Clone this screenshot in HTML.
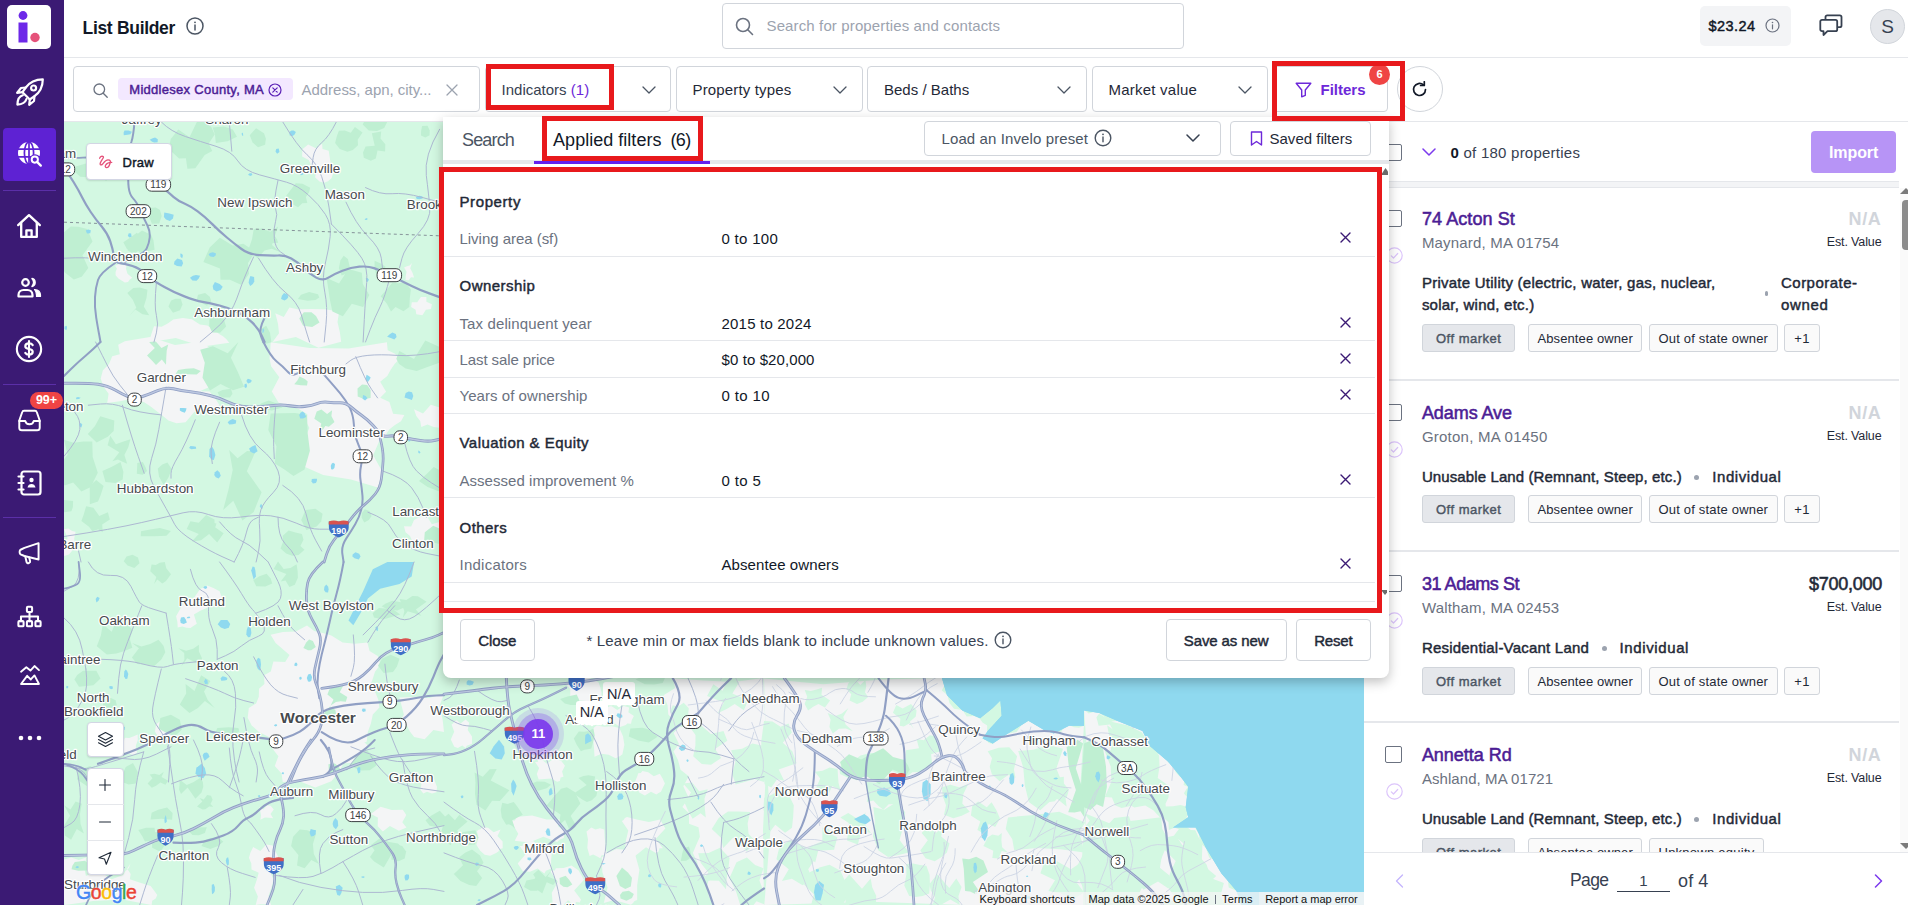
<!DOCTYPE html>
<html lang="en">
<head>
<meta charset="utf-8">
<title>List Builder</title>
<style>
*{box-sizing:border-box;margin:0;padding:0}
html,body{width:1908px;height:905px;overflow:hidden;background:#fff}
body{font-family:"Liberation Sans",sans-serif;color:#111827;position:relative;font-size:14px}
.abs{position:absolute}
.t{position:absolute;white-space:nowrap;line-height:1}
svg{display:block}
/* sidebar */
#sidebar{left:0;top:0;width:64px;height:905px;background:#3b1a74}
#logo{left:7px;top:5px;width:44px;height:44px;background:#fff;border-radius:5px}
.sep{left:3px;width:53px;height:1px;background:#5b2fa8}
#active{left:3px;top:128px;width:53px;height:53px;background:#5e22d3;border-radius:4px}
.ico{position:absolute;left:14px;width:30px;height:30px}
/* header */
#header{left:64px;top:0;width:1844px;height:58px;background:#fff;border-bottom:1px solid #e5e7eb}
#filterbar{left:64px;top:58px;width:1844px;height:64px;background:#fff;border-bottom:1px solid #e5e7eb}
.box{position:absolute;border:1px solid #d1d5db;border-radius:4px;background:#fff}
/* map */
#map{left:64px;top:122px;width:1300px;height:783px;background:#c5f0d8;overflow:hidden}
/* right panel */
#panel{left:1364px;top:122px;width:544px;height:783px;background:#fff;overflow:hidden}
/* modal */
#modal{left:443px;top:117px;width:946px;height:561px;background:#fff;border-radius:0 0 8px 8px;box-shadow:0 4px 12px rgba(0,0,0,.25)}
.mh{font-size:15px;font-weight:400;-webkit-text-stroke:.45px currentColor;color:#1f2937;letter-spacing:-.2px}
.ml{font-size:15px;color:#6b7280}
.mv{font-size:15px;color:#111827}
.mdiv{left:1px;width:931px;height:1px;background:#e5e7eb}
.mx{left:897px;fill:none;stroke:#3b1a74;stroke-width:1.400;stroke-linecap:round}
.cb{width:17px;height:17px;border:1px solid #6b7280;border-radius:2px;background:#fff}
.ct{font-size:18px;font-weight:400;-webkit-text-stroke:.55px currentColor;color:#4c1d95;letter-spacing:-.3px}
.ca{font-size:15px;color:#6b7280}
.cv{font-size:18px;font-weight:400;-webkit-text-stroke:.55px currentColor;color:#1f2937}
.cv.na{color:#d1d5db;font-weight:700;-webkit-text-stroke:0}
.ce{font-size:12.500px;color:#1f2937}
.cd{font-size:15px;font-weight:400;-webkit-text-stroke:.45px currentColor;color:#1f2937}
.dot{width:5px;height:5px;border-radius:50%;background:#9ca3af}
.tag{height:28px;border:1px solid #d1d5db;border-radius:3px;background:#fafafa}
.tag.dk{background:#e5e7eb}
.tt{font-size:13px;color:#1f2937}
.tt.dk{font-weight:400;-webkit-text-stroke:.4px currentColor;color:#4b5563}
.mapbtn{background:#fff;border-radius:4px;border:1px solid #d3d6e4;box-shadow:0 1px 2px rgba(0,0,0,.12)}
.at{font-size:11px;color:#111}
.red{position:absolute;border:4px solid #e8191c}
.sb{font-weight:400!important;-webkit-text-stroke:.45px currentColor}
</style>
</head>
<body>
<!-- MAP -->
<div id="map" class="abs">
<!--MS0--><svg width="1300" height="783" viewBox="64 122 1300 783" style="position:absolute;left:0;top:0">
<rect x="64" y="122" width="1300" height="783" fill="#d3f8e2"/>
<path d="M124.8 341.2 L149.9 337.1 L175 345.1 L200.8 341.6 L211.1 348.8 L210.1 363.5 L219.3 370.9 L214.8 379.4 L209.5 387 L199.7 391.2 L209.5 391.6 L214.9 397.9 L219.7 405.4 L207.2 408.8 L194.5 411.8 L185.6 422.2 L176.4 423.3 L168.4 420.5 L161.4 414.7 L155.8 410.6 L150.3 406.3 L144.2 402.3 L132.1 398.8 L119.9 401.3 L107.2 403 L108.6 393.7 L103.4 386.4 L100.7 378.6 L102.9 370.3 L109 364.1 L112.2 356.3 L119.8 354.3 L118.2 344.8Z" fill="#f4f5f6"/>
<path d="M149.8 342.2 L150.5 336.7 L152.2 331.4 L154 326.3 L161.6 326.8 L167.7 323.4 L173.3 319.6 L182.8 318.1 L191.8 319.2 L199.9 324.4 L207.3 325.6 L213.5 329.6 L219.1 334.1 L223 336.2 L226.2 339.1 L229.3 342.8 L202.6 346.5 L175.8 338.1Z" fill="#f4f5f6"/>
<path d="M272.6 342 L279 333.2 L278 323.7 L275.3 313.3 L283.8 317 L289.4 307.4 L297.4 309.3 L311.2 309 L325.1 309.2 L339.2 311.6 L337.5 321.9 L339.8 331.9 L341.2 341.7 L318.5 347.8 L295.8 337.1Z" fill="#f4f5f6"/>
<path d="M302.4 149.2 L308.1 144.4 L315.9 148.3 L322.1 143.7 L322.5 148.9 L328.7 150.7 L329.5 156 L330.7 163.2 L334.3 170.2 L331.5 178.2 L328 181.2 L324.1 182.8 L319.5 181.5 L315 177.2 L317 169.8 L311.6 166 L308.7 160.1 L302.1 156.4Z" fill="#f4f5f6"/>
<path d="M115.1 265.7 L119 264 L123.5 265.3 L126.8 263.2 L126 268.8 L127.5 273.7 L132.2 277.8 L129.8 279.4 L128 282.1 L124.8 282.4 L121.6 280.5 L118.4 278.4 L115.6 275.3 L115.6 272 L116.9 268.5Z" fill="#f4f5f6"/>
<path d="M404.1 267.4 L406.9 266.3 L409.7 265.4 L412 263 L410.2 268.3 L412.6 272.9 L414.1 277.5 L411 277.3 L408.7 280.3 L405.6 280 L405.7 275.9 L406.6 271.7Z" fill="#f4f5f6"/>
<path d="M411.8 302.3 L417.2 302.2 L420.9 297.1 L426.4 297 L426.4 301.7 L431.9 304.2 L431 309 L425.9 309.8 L422.4 315.3 L416.3 314.2 L415.6 309.7 L411.1 306.9Z" fill="#f4f5f6"/>
<path d="M270.7 342.3 L309.6 348 L348.5 348.4 L386.9 342.3 L387.7 350.3 L395 353.7 L399.5 359 L394.6 364.1 L390.7 369.8 L387.3 376 L380.2 381.8 L386.1 391.8 L380.2 397.7 L389.4 401.9 L393.1 413.8 L404.4 415 L401 421.2 L395 425 L389.5 429.3 L386.9 433.1 L384.7 437.4 L380 439.2 L373.2 455.2 L382.5 471.9 L377.8 487.5 L351 479.4 L323.2 474.9 L297.8 463.7 L302.7 454.5 L301.7 443.4 L306.4 434.4 L309.4 427.9 L306.1 421.4 L307.4 414.2 L298.3 408.7 L288.3 405.3 L278.6 402.7 L271.8 391.4 L279.3 377.2 L271.1 366.3 L269.5 358.2 L270.3 350.1Z" fill="#f4f5f6"/>
<path d="M414 409.3 L423 413.6 L430.8 404.7 L439.7 407.6 L439.8 414.1 L443.2 420.6 L439.6 427.8 L433.6 427 L427.5 424.6 L421.3 427.1 L420.2 420.9 L416.3 415.9Z" fill="#f4f5f6"/>
<path d="M64 529.3 L68.3 528.6 L72.1 531 L75.6 531.7 L74.2 538.5 L74.9 545 L78.5 550.9 L72.8 550 L68.9 554.4 L63.6 556 L64.1 547 L67.6 538.1Z" fill="#f4f5f6"/>
<path d="M404 526.2 L411.2 526.4 L414 520.1 L418.8 517.6 L426.6 515.6 L431.8 524.3 L439.5 521.9 L440.7 526.8 L440.2 531.6 L439.8 537.2 L429.9 535.5 L421.6 543.4 L412.3 541.1 L410 536.1 L405.5 532.3Z" fill="#f4f5f6"/>
<path d="M270.6 634.7 L282.9 632.1 L295.8 631.5 L307 625.5 L314.2 630.9 L322.8 633 L331.3 635.6 L342.6 642.6 L355 643.7 L367.4 642.5 L369.6 650.9 L377.7 655.9 L380.5 664.3 L375 671.7 L372.2 680.4 L368.5 688.1 L375.5 692.7 L378.4 699.9 L379.4 707.5 L372.8 714.4 L370.9 723.6 L367.8 732.1 L366.7 741.7 L354.6 745.8 L356.2 756.9 L344.4 761.9 L338.5 772.5 L331.4 781.2 L315.2 787.6 L299 781.1 L282.7 782.1 L281.6 773.5 L274.8 765.9 L278.4 756.2 L272 748 L269 737.1 L259 732 L251.7 725.5 L247.7 717.7 L248.8 707.9 L256.1 703.4 L258.8 696.7 L259 688.8 L264.4 684.1 L264.1 675.3 L270.8 671.6 L273.4 661.5 L285.2 661.9 L289.5 655 L282.6 648.9 L275.6 643Z" fill="#f4f5f6"/>
<path d="M178.9 611.2 L184.2 602 L194.2 597.4 L200.1 589.1 L207.2 585.4 L213.4 588 L219.6 591.2 L220.9 595.1 L223.2 598.9 L222.1 603.5 L214 603.6 L207.3 607.7 L200.3 610.7 L193.9 614.6 L196.8 623.8 L190.4 627.9 L186.4 627.7 L182.3 626.6 L177.7 627.6 L177.4 622 L176.1 616.3Z" fill="#f4f5f6"/>
<path d="M399.5 697.6 L414.4 696.9 L429.5 697.9 L444.3 693.3 L439.4 706.3 L442.6 719.2 L444 732.1 L433.4 730 L424.7 739.2 L414.1 737.1 L409.9 731.6 L406.6 725.1 L399.3 722.5 L403.9 714.4 L401.7 706.3Z" fill="#f4f5f6"/>
<path d="M156.2 724.2 L160.4 720.9 L165.6 720 L170.6 720.3 L175 723.2 L177 727.4 L178 731.7 L174.2 738.2 L166.7 738.2 L161.8 741.8 L158.2 736.7 L154.9 731.5Z" fill="#f4f5f6"/>
<path d="M124.9 737.8 L129.2 737.9 L133.1 736.6 L137.7 734.6 L137.8 740.3 L135.7 746 L137.1 752.4 L133.4 755.1 L128.9 753.5 L125.3 754.1 L121.6 748.4 L123.4 742.7Z" fill="#f4f5f6"/>
<path d="M64 859.5 L71.2 857.4 L78.8 859.9 L86.1 857.5 L85.5 863.5 L84.6 869.5 L85.9 876 L98.5 869.9 L111.1 879.5 L123.1 875.1 L125.3 871.2 L129 868.1 L130.4 863.5 L127.2 868.8 L130.7 874.1 L129.8 879.3 L140.2 882.7 L150.7 885.9 L157.3 895.1 L155.7 898.6 L152.2 900.8 L151.6 904.9 L122.4 899.5 L93.2 901 L64.9 904.9 L62.6 889.8 L58.6 874.6Z" fill="#f4f5f6"/>
<path d="M253.2 847.1 L260.3 851.1 L266.3 844.4 L272.6 845.6 L278.2 856.8 L268.2 868.1 L273.6 879.5 L271.4 887.8 L268.5 896.1 L271.1 905.7 L265.8 904.3 L260.5 904.3 L255.7 904.9 L257.9 896.6 L254.1 887.7 L256.9 879.5 L258.7 872.8 L251.5 869.4 L251.3 863.5 L248.9 857.8 L250.5 852.6Z" fill="#f4f5f6"/>
<path d="M370.8 814.1 L380.6 806.8 L391.8 809.9 L402.8 809.7 L406.3 815.1 L402.3 822.3 L406.5 827.5 L398.9 830.7 L389.9 826.1 L382.8 831.5 L377.7 826.3 L377.9 817.5Z" fill="#f4f5f6"/>
<path d="M283.1 740.6 L309.6 740.3 L336.2 745.4 L362 740.2 L367.6 745.2 L364.2 752.2 L366.6 757.4 L355.9 762.7 L343.8 763.3 L333 768.1 L321.6 768.6 L313.5 777.3 L303 780.2 L296.8 774.9 L289.6 779.9 L283.3 777.8 L282.7 771.7 L283.9 765.1 L278.8 759.9 L283.7 753.9 L279 746.1Z" fill="#f4f5f6"/>
<path d="M259.1 807.3 L263.6 809.6 L267 805.3 L270.6 805.8 L273.8 809.4 L270.5 814 L273.2 818.2 L269.1 817.8 L264.9 817.4 L260.4 819.8 L261 815.6 L260.3 811.6Z" fill="#f4f5f6"/>
<path d="M418.5 779.7 L424.1 781.6 L429.2 779.3 L433.6 778 L435.3 782.5 L437 787 L436.5 792.2 L432 793.6 L427 791.8 L423.3 793.5 L420.3 789.4 L421.5 784Z" fill="#f4f5f6"/>
<path d="M763.2 678.1 L766.8 753.7 L763 829.4 L764 905.1 L747.2 909 L730.3 910.3 L713.5 905 L709 896.7 L706.8 887.9 L709 877.9 L699.3 872.2 L697.2 862 L692.9 852.9 L696.3 844.8 L699.9 836.7 L698.5 827.3 L689 823.8 L689 813.2 L682.4 807.1 L688.7 797.7 L683.3 786.3 L688.8 776.2 L680.5 769.7 L677.9 759.7 L673.5 751.5 L679 743.9 L673.6 733 L680.9 725.5 L673.8 720.5 L668.3 714.5 L667.6 705.5 L663.6 695.3 L675.2 688 L672.8 678.2 L703.2 680.6 L733.6 682.1Z" fill="#f4f5f6"/>
<path d="M764 678.4 L823.3 684.3 L882.6 679.5 L942.1 678 L945.6 683.2 L941.8 690.6 L947.3 695 L949.5 703 L954 708.7 L962.5 710 L966.7 716.6 L973.9 716.1 L979.7 718.4 L982.5 722.5 L987.2 725.5 L987 730.5 L987.4 734.4 L983 735.2 L982.6 738.6 L986 740.2 L988.9 742.9 L993 744 L995.8 737.2 L1001.8 735.2 L1008.1 733.6 L1016.6 732.1 L1021.6 725 L1028.3 720.9 L1033.5 723.6 L1040 724.2 L1043.5 730 L1047.8 728.7 L1050.7 731.5 L1053.4 732.8 L1060.3 733.7 L1063.6 727.6 L1069 725.1 L1074 727.2 L1079 727.8 L1083.9 725.8 L1080.4 785.6 L1087.5 845.3 L1084 904.9 L977.4 905.4 L870.7 901.8 L764.3 905 L770.5 829.4 L766.3 753.7Z" fill="#f4f5f6"/>
<path d="M1084.1 710.1 L1088.7 713.5 L1094.3 711.8 L1099.4 712.9 L1104.6 717.1 L1109.4 722.1 L1117 720.8 L1127.7 718.8 L1135 725.1 L1142.9 730.7 L1148.1 734.5 L1146.3 741.7 L1150.6 745.5 L1153.7 754 L1164.9 752.9 L1167.7 761.6 L1172.9 765.9 L1175.7 772.2 L1180.1 777.1 L1184.6 779 L1183.6 785 L1187.9 786.8 L1183.9 793.2 L1190.1 800.9 L1186 807.1 L1184.4 811.1 L1188.5 813.7 L1188.2 817.4 L1181.1 817.7 L1177.6 823.5 L1173 827 L1180.6 829.7 L1188.2 822.8 L1195.2 827.8 L1198.9 834.4 L1199.8 842.5 L1205.9 847.9 L1209.2 857.5 L1219.8 862.6 L1221.2 873.3 L1227.6 878.1 L1228.7 887.5 L1237 890.9 L1240.1 895 L1238 901.1 L1241.6 904.9 L1189.1 899.4 L1136.5 905 L1084.8 905 L1084.4 840.2 L1088.6 775.4Z" fill="#f4f5f6"/>
<path d="M512.1 820.5 L514.8 820.5 L516 818.5 L517.7 816.8 L532.2 815.4 L546.5 819.4 L561.2 819.4 L558 826 L564.5 831.3 L563.8 838.1 L561.1 839 L558.7 840.4 L557.2 842 L543.4 836.8 L529.1 842.5 L514.7 840.8 L518.3 833.7 L514.6 827.5Z" fill="#f4f5f6"/>
<path d="M519.8 846 L522.5 846 L523.2 843.5 L525.3 842.7 L533.2 841 L540.3 847.6 L547.6 844.9 L551.9 852.3 L551.1 860.3 L551 868.5 L548.5 869.7 L545.9 870.8 L544.4 873.4 L537.6 868.6 L530 871.8 L522.8 871.2 L517.7 863.5 L525.4 854.4Z" fill="#f4f5f6"/>
<path d="M586.5 831.5 L588.2 830.3 L589.8 828.8 L591.4 827.6 L595.4 829.6 L600 828.2 L604.3 829.5 L604.7 837.4 L605.4 845.2 L606.8 853 L605.1 855.3 L601.6 855.2 L600.3 858.2 L596.7 856.2 L593.1 854.6 L589.6 855.9 L587.3 847.8 L588 839.5Z" fill="#f4f5f6"/>
<path d="M601.7 856.9 L603.9 856.3 L604.8 853.9 L606.6 853.6 L616.3 849 L625.7 849.8 L635.3 854.9 L639.4 869.7 L637.2 884.9 L637.2 900 L634.6 901.1 L632.8 903.2 L630.9 904.8 L622.1 902.3 L613.3 900.2 L603.8 903 L607.6 887.4 L602.4 872.2Z" fill="#f4f5f6"/>
<path d="M621.8 821 L623.7 820 L624.9 818 L627 817.1 L637.9 819.8 L648.9 821.9 L660.1 819.4 L665.4 828.5 L655.6 838.9 L663 848.3 L659.5 848.3 L658.6 851.5 L656.2 853.2 L646 847.3 L634.8 856.3 L624.9 850.9 L625.9 840.8 L628.3 830.6Z" fill="#f4f5f6"/>
<path d="M591.7 730.1 L593.1 728.4 L594.7 726.9 L596.5 725.6 L604.1 726.8 L611.9 726.3 L619.4 727.9 L623 736.2 L624.4 744.8 L622.4 754.3 L620.2 756 L617.7 757.2 L615.6 758.3 L608.7 754.7 L601.5 753.8 L594.5 756.8 L594 747.7 L593.1 738.6Z" fill="#f4f5f6"/>
<path d="M535.1 762.1 L537.7 762 L538.4 759.5 L540.6 758.7 L547 763.7 L554.4 758.1 L561.3 760.9 L565 765.7 L562.1 771.5 L563.5 776.7 L560.6 777.4 L559.9 781 L557.1 781.8 L551.1 778.4 L544.6 778.9 L538.7 779.6 L536.8 774.1 L539.1 768Z" fill="#f4f5f6"/>
<path d="M451.6 724.6 L453.3 723.3 L454.4 721.3 L456.8 720.3 L460.6 723.6 L465.6 719.5 L469.2 722.8 L467.7 730.1 L472 736.6 L472 743.7 L469.4 744.7 L466.7 745.7 L465.7 748.1 L462.2 745.6 L457.9 748 L454.3 746.7 L450.8 739.6 L454.2 731.7Z" fill="#f4f5f6"/>
<path d="M565.9 683.8 L568.1 683.2 L569.1 680.9 L571.2 679.3 L580.8 676 L590 678.5 L598.5 682.2 L600.3 687.3 L601.5 692.5 L601.3 697.4 L598.9 698.9 L596.8 700.5 L595.3 702.5 L586.5 700.9 L577.6 700.3 L568.9 700.9 L570.3 694.9 L570.2 689.1Z" fill="#f4f5f6"/>
<path d="M606.9 709.6 L607.9 707.3 L609.7 706.3 L611.7 706.3 L617.3 709.9 L623.7 706 L629.2 707.6 L628.4 712.3 L633.9 715.9 L631.7 720.3 L631 723.7 L627.3 723.5 L625.9 725 L620 727 L614.9 723.5 L609.6 723.7 L608.7 718.9 L606.4 714.3Z" fill="#f4f5f6"/>
<path d="M637.5 775.8 L638.2 773.3 L640.8 773.1 L642.4 770.9 L648.2 772.2 L653.8 776.2 L659.8 773.7 L662.6 778.6 L664.9 783.6 L662.2 788.9 L661 791.7 L658.6 793.1 L656.3 794.4 L651 791.8 L644.9 795.6 L639.2 792.5 L636.7 787.1 L635.1 781.5Z" fill="#f4f5f6"/>
<path d="M550.4 871.6 L552.1 870.3 L554.9 870.5 L555.8 868.2 L563.6 867.9 L571.5 865.5 L578.4 870.3 L584 879.8 L574.2 890.6 L581 899.6 L579.8 902.4 L576 902.1 L574.8 905.7 L568.1 900.3 L560.1 908.4 L552.6 903.1 L551.8 892.7 L557.8 881.8Z" fill="#f4f5f6"/>
<path d="M476.9 831.2 L478.6 829.8 L480.7 829.2 L482.2 826.9 L488.1 827.7 L493.6 832.3 L500.6 829.5 L497.5 836.1 L502.6 841.6 L502.7 848.2 L499.8 848.9 L498.4 851.5 L496.1 853.1 L490.2 855.7 L484.7 854.8 L480.2 850.8 L476.3 844.7 L478.6 837.8Z" fill="#f4f5f6"/>
<path d="M840.4 761.9 L851.4 762.7 L860.4 755.4 L870.9 753 L883 753.2 L893.3 765.8 L905.5 758.5 L906 750.3 L919 748.3 L916.5 738.8 L923.6 740.3 L929.9 735.3 L935.7 736.2 L939.2 740.8 L939.4 746 L939.7 751.4 L931.1 754.3 L932.1 764 L926.8 769.3 L920 771.9 L912.4 772.3 L906.3 777 L892.8 771.2 L879.2 770.4 L865.7 776.8 L857 777.9 L848.4 778.1 L840 774.1 L839.6 769.9 L841 765.7Z" fill="#d3f8e2"/>
<path d="M865.7 781.8 L877.5 782.7 L889.4 776.1 L900.9 781.8 L897.6 790.2 L901.3 798.7 L901.4 808 L894.8 804.3 L888.7 804.2 L883.4 809.8 L878.2 805.7 L873.4 800.4 L866.8 802.1 L867.9 795.3 L866.5 788.5Z" fill="#d3f8e2"/>
<path d="M764 720.9 L772.5 721.5 L780.5 726.7 L788.5 723.4 L791.9 732.5 L782.8 742.7 L792.3 751.3 L796.6 763.2 L778.7 769.6 L784.2 780.8 L777.1 779.3 L771.3 787.5 L764.6 784.3 L762.1 763.1 L761.2 741.9Z" fill="#d3f8e2"/>
<path d="M804.7 690.1 L810.8 690.9 L816.7 689.6 L822 687.8 L821.5 694.7 L830.1 700.5 L824.9 707.4 L818.4 704.1 L812.8 707.1 L808.1 710.5 L804.6 704 L807.2 696.8Z" fill="#d3f8e2"/>
<path d="M764.1 798.1 L772.3 794.6 L780.3 789.3 L788.6 794.5 L793.8 805.2 L793.2 816.3 L792 827.8 L785.1 832.7 L775.3 824.8 L769.4 832.5 L766.4 820.9 L763.4 809.2Z" fill="#d3f8e2"/>
<path d="M779.3 847.6 L790.1 840 L800 845 L810.4 850.3 L815 859.3 L808.2 869.3 L812.3 878.8 L802.6 885.2 L791.9 878.8 L781.9 880.9 L788.8 869.3 L776.4 859.2Z" fill="#d3f8e2"/>
<path d="M809.7 872.3 L819.5 867.6 L829.5 864.8 L840.4 870.7 L845.4 881.9 L850 893 L842.8 904.2 L832.6 907.2 L822.5 910.6 L811.1 905.1 L813.9 894.3 L804 884.4Z" fill="#d3f8e2"/>
<path d="M873.3 807 L884.2 809.8 L896.7 801.9 L905.2 812.3 L903.5 826 L899.5 839.9 L908.9 852.4 L898.5 855 L888.1 856.9 L878.5 850.4 L872.9 836.4 L874.9 821.6Z" fill="#d3f8e2"/>
<path d="M906.2 864.1 L913.2 863.5 L919.9 865.1 L926.4 865.7 L929.6 874.8 L929.9 884.1 L929.2 893.6 L922.6 896.1 L915.9 897 L909.2 896.1 L904.3 885.4 L906.4 874.2Z" fill="#d3f8e2"/>
<path d="M942 787.2 L950.3 784.7 L959.1 787.3 L968.1 784.2 L963.4 794.1 L962.3 803.6 L969.8 811.7 L961.7 815.7 L953.4 818.2 L944 814.8 L946 805.3 L942.7 796.2Z" fill="#d3f8e2"/>
<path d="M840.3 817.4 L848.2 813.1 L858.3 819.5 L866.1 812.2 L861.8 820.4 L866.6 826.4 L870.9 832.9 L861.7 830.7 L857.8 844.5 L847 840.5 L848.2 831.7 L848.8 823Z" fill="#d3f8e2"/>
<path d="M921.7 833.1 L927.1 825.8 L936 832.8 L943 827.3 L941.2 836.5 L949.5 843.6 L946.9 852.5 L940.9 857.4 L934.7 861.3 L925.6 858.2 L920.3 850.5 L927.8 840.2Z" fill="#d3f8e2"/>
<path d="M972.2 806.1 L978.2 801.5 L986.8 807.2 L991.6 802.2 L996.4 810.3 L1000 818.5 L995.2 826.9 L988.7 823.9 L984.1 833.7 L977.4 830.1 L980.2 821.5 L970.9 815.5Z" fill="#d3f8e2"/>
<path d="M987.7 751.2 L998.7 747.7 L1009.3 747.2 L1017.1 756.2 L1015.4 762.9 L1013.9 769.6 L1015.5 777.7 L1008.1 774.9 L999.7 781.3 L991.9 774.3 L989.7 766.8 L992 758.3Z" fill="#d3f8e2"/>
<path d="M814.9 771.8 L822.5 770.8 L829.8 767.5 L837.6 769.1 L838 775.9 L838.5 782.7 L840.5 790.2 L832.2 785.9 L827.6 796.2 L820 794.4 L816.4 787.3 L820.2 778.4Z" fill="#d3f8e2"/>
<path d="M822.5 827.5 L828.7 829.1 L832.2 835 L837.3 837.3 L834.1 849.7 L818.2 850.8 L815.2 862.6 L811.5 858.6 L804.4 858.8 L803 853.6 L810.8 845.9 L822.3 841.3Z" fill="#d3f8e2"/>
<path d="M840.4 884.5 L849.2 874.6 L862 888.7 L870.7 878.4 L872.2 887.3 L876.2 895.8 L875.8 905.8 L865.7 909.2 L855.5 903.7 L845.5 905 L845.5 897.4 L843.9 890.2Z" fill="#d3f8e2"/>
<path d="M929.4 884.2 L937.2 874.2 L949.3 887.9 L956.3 878.4 L961.6 886.9 L958.4 896.2 L959.7 905 L950.4 899.4 L941.1 904.8 L932.6 904.9 L934.9 897.4 L930.8 890.6Z" fill="#d3f8e2"/>
<path d="M987.7 837.6 L992.3 834.5 L998.3 835.7 L1001.8 832.9 L1001.4 840.2 L1002.1 847.2 L1007.9 852.5 L1001.7 851 L998.6 858.5 L992.3 858.1 L993.3 850.7 L983.4 846Z" fill="#d3f8e2"/>
<path d="M1043.4 780.8 L1049.6 776.8 L1057 777.7 L1063.8 776.7 L1063.9 783.6 L1068.9 789.8 L1066.7 797.6 L1059.7 795.8 L1054.8 801.2 L1048.4 802.2 L1044.5 795.9 L1043 789.1Z" fill="#d3f8e2"/>
<path d="M827.6 713.1 L835.4 715.9 L842 713.4 L848.4 707.9 L843.3 717.1 L845.6 724.6 L853 731.3 L845.8 728.4 L838.9 728.7 L832.8 733.4 L829.4 727.1 L830.6 719.6Z" fill="#d3f8e2"/>
<path d="M896.3 705.1 L902.6 708.5 L911 703.9 L916.6 710.6 L915.8 716.5 L909.8 721.7 L913.8 729.1 L909.6 723.2 L903.8 726.6 L899.7 725.7 L900.4 718.7 L892.9 712.8Z" fill="#d3f8e2"/>
<path d="M848.1 683.8 L853.1 677 L860.3 685.1 L865.4 680.1 L866.3 686 L865 692.3 L868.1 697.1 L862.7 701.8 L857 704 L849.5 700.6 L851.2 694.3 L846.5 688.9Z" fill="#d3f8e2"/>
<path d="M962.2 858.5 L969 859.3 L976.2 856.8 L983.4 860.6 L988 872.1 L972.9 882 L980.2 892.7 L974.8 893.8 L970 891.4 L965.1 891 L964.4 880 L963.8 869Z" fill="#bfefd2"/>
<path d="M1066.6 747.1 L1072.2 744.5 L1077.5 739.8 L1083.1 743.6 L1075.8 768.2 L1083.8 792.8 L1084.2 817 L1080.5 811.3 L1074.6 812.4 L1068.2 812.3 L1075.9 789.9 L1069 768.1Z" fill="#bfefd2"/>
<path d="M840.1 762.1 L849 754.3 L861.1 759.5 L870.8 754.6 L883.1 748.2 L893 756.9 L904.2 760.1 L907.6 764.7 L909.7 769.6 L906.3 775.4 L892.7 769.5 L879.4 784.3 L865.7 775.7 L856.9 780.2 L849.1 777.4 L842.1 772.8 L841.7 769.4 L841.6 766Z" fill="#bfefd2"/>
<path d="M1018.2 751 L1033.4 749.7 L1048.4 744.9 L1063 748.8 L1056.3 768.6 L1064.3 787.8 L1066.6 806.6 L1054.9 796.9 L1040.2 810.3 L1028.8 802 L1024.8 785.2 L1023.3 767.9Z" fill="#d3f8e2"/>
<path d="M1008 817.4 L1033.6 814.9 L1059.3 811.8 L1085.1 822.4 L1079 832.6 L1082.3 842.8 L1084 852.4 L1060.5 849.3 L1036.9 847.9 L1014.2 850.2 L1012.3 839.2 L1005.7 829Z" fill="#d3f8e2"/>
<path d="M1043.7 863.8 L1057 861.2 L1071 869.2 L1083.8 860.6 L1086 871.6 L1076.6 882.6 L1084.1 892.4 L1071.7 900.3 L1060.4 893.3 L1048.4 891.1 L1055 880.3 L1040.4 873.3Z" fill="#d3f8e2"/>
<path d="M1084 743.4 L1090.5 740.4 L1096.2 743 L1102.7 746.2 L1106 766.4 L1106.9 786.8 L1103.1 807 L1096.7 804.2 L1090.4 810.1 L1083.9 807.2 L1081 786 L1082.6 764.8Z" fill="#bfefd2"/>
<path d="M1107.1 725.2 L1118.5 733.6 L1130.7 739.9 L1145.3 740.9 L1153.9 747.3 L1159.1 755.7 L1159.5 766.7 L1157.7 777.9 L1169.1 785.9 L1168.5 797.3 L1165.5 803.8 L1166.5 812 L1160.2 817.5 L1153.3 810.3 L1145.3 805.5 L1134.3 807.5 L1120.4 799.7 L1114 787.6 L1114.1 771.7 L1111.7 756.4 L1110.2 741Z" fill="#d3f8e2"/>
<path d="M1084.2 828.1 L1092 817.7 L1106.3 826.7 L1114.2 818.1 L1129 816.3 L1135 834.9 L1150.4 832.5 L1152.1 844.9 L1161.9 854.9 L1159.9 867.9 L1147.2 877.3 L1140.4 890.8 L1134.8 906 L1117.9 905.9 L1100.9 914 L1084.6 905 L1081.6 879.2 L1082.3 853.4Z" fill="#d3f8e2"/>
<path d="M1168 836.9 L1175.9 835.3 L1182.4 845.6 L1190.9 840.1 L1196.7 853.4 L1206.5 864.5 L1211.2 878.3 L1223.9 882.9 L1220.2 896.7 L1226.3 904.4 L1211.1 904.8 L1195.8 907.7 L1179.8 905.3 L1173.6 895.6 L1167 886 L1170 873.3 L1175.7 861 L1164.5 849.8Z" fill="#d3f8e2"/>
<path d="M1104.5 750.5 L1115.4 750.3 L1124.1 758.4 L1135.3 758.8 L1129.2 770.4 L1141.7 777 L1142.6 787 L1133.7 791.7 L1133.7 805.2 L1121.7 807.9 L1115.3 805.4 L1111.9 797.5 L1104.8 797 L1111.4 781.8 L1110.7 766.5Z" fill="#d3f8e2"/>
<path d="M1084 813 L1108.8 822.9 L1134.5 820.6 L1161.2 817.3 L1162.3 829.1 L1168.9 840.6 L1163.4 853.4 L1160.2 861.6 L1152.8 866.6 L1147.8 872.8 L1124.8 864.1 L1106.4 847.3 L1083 837.7 L1088.7 829.2 L1089.9 820.7Z" fill="#d3f8e2"/>
<path d="M1165.3 806.4 L1173 806.2 L1180.6 805 L1187.8 807.1 L1188.3 814.1 L1184.7 820.5 L1185.7 827.6 L1179.5 826.6 L1173.7 828.1 L1168.8 830 L1168.5 822.3 L1161.1 815.4Z" fill="#d3f8e2"/>
<path d="M1129.9 847.2 L1139.5 852.3 L1150.9 846.6 L1161.1 852.8 L1157.7 865.9 L1169.7 875.7 L1168 888.2 L1158 881.6 L1143.4 889.7 L1135.5 878.2 L1136.4 867.7 L1131.5 858Z" fill="#d3f8e2"/>
<path d="M1180.7 826.7 L1186 826.2 L1190.7 829.9 L1195.3 830.3 L1202.4 845.4 L1201.7 864 L1216.2 875.9 L1209.8 882 L1200.8 880.6 L1192.8 883.7 L1191.4 871.7 L1191 859.2 L1176.9 852.8 L1185.5 845.1 L1174 835.4Z" fill="#d3f8e2"/>
<path d="M1083.6 853.4 L1094.2 853.4 L1094.3 867.4 L1103.8 868.8 L1118.7 871.6 L1119.5 891.3 L1135.1 893.7 L1132.6 897.2 L1133.4 902.1 L1129.8 904.6 L1114.5 899.4 L1099.3 901.6 L1083.1 905 L1083.1 887.7 L1075 870.3Z" fill="#d3f8e2"/>
<path d="M1099 713.7 L1112.5 722.1 L1128.3 725.4 L1142 732.4 L1144.6 736.7 L1148.5 740.6 L1147.5 746.3 L1139.7 741.7 L1131.4 738.4 L1122 738.8 L1115 733.4 L1109.9 724.6 L1098.6 725.8 L1097.6 721.6 L1096.4 717.4Z" fill="#d3f8e2"/>
<path d="M713.4 684.3 L722.6 690.8 L729.7 676.1 L739 682.6 L732.4 693.4 L748 700.2 L743.9 710.2 L734.7 704.1 L726.7 709 L717.6 713.3 L723.9 702.5 L707.1 695.9Z" fill="#d3f8e2"/>
<path d="M688.2 724.7 L700.3 724.8 L711 734.1 L723.5 730.9 L727.3 740.7 L714.9 748.9 L721.2 757.9 L711.1 764.7 L701.8 763.9 L693.2 756.3 L695.4 745.5 L695.5 735Z" fill="#d3f8e2"/>
<path d="M731.1 750.2 L742.1 748.8 L752.4 743.5 L765.1 746.2 L772.7 758 L766.3 769.9 L764 781.9 L754.5 779.1 L745.4 781.7 L735.6 784.4 L732.2 773.7 L735.4 761.9Z" fill="#d3f8e2"/>
<path d="M683.1 783.5 L692.1 782.6 L699.2 791.3 L707.7 789.3 L704.5 798.4 L704.8 807.9 L705.8 817.4 L700.6 813.2 L692.6 818.7 L688.7 812.1 L684.8 803.2 L691 792.5Z" fill="#d3f8e2"/>
<path d="M718.7 818.1 L728 811.5 L738.4 811.4 L750.1 812 L747.6 823.4 L748.6 834 L756.6 842.3 L746.7 851.2 L733.3 837.4 L723.2 847.9 L721 837.8 L711.8 828.9Z" fill="#d3f8e2"/>
<path d="M698.2 853.2 L708.6 853 L720 847.7 L729.6 858.1 L728.4 868.2 L726.8 878.3 L726 889.3 L718.9 880.8 L710.1 880.6 L700.3 883.5 L708.4 872.6 L700.8 863Z" fill="#d3f8e2"/>
<path d="M736.5 862.3 L746.9 857.5 L755.1 864.9 L763.5 868.2 L759.4 880.5 L764.1 892.8 L764 904.2 L756.5 901.3 L748.9 910.8 L740.3 905.2 L736 891.5 L729.5 878.1Z" fill="#d3f8e2"/>
<path d="M672.8 705.3 L677.8 706.8 L683.7 702.8 L688.8 708.2 L688.2 714.1 L689.7 720.4 L685.7 724.9 L681.1 727.3 L677.7 724.8 L674.1 723.3 L673.4 717.4 L669.9 711.7Z" fill="#d3f8e2"/>
<path d="M178.3 129.6 L189.5 137.3 L198.6 118.4 L211.1 126.7 L214.7 134.6 L208.7 143.4 L212.2 151 L204.7 154.9 L200.1 161.6 L195.3 168.2 L187.4 168.8 L185.9 158.3 L179.1 158.5 L168.5 148.7 L170.8 139Z" fill="#bfefd2"/>
<path d="M209.7 247.5 L219.9 237.7 L232.6 245.6 L243.4 243.7 L255.3 251.7 L248 262.9 L249 273.7 L241.5 285.1 L229.9 279.8 L220.5 279.8 L220 268.4 L203.4 261.9Z" fill="#bfefd2"/>
<path d="M64.1 232.2 L70.8 226.5 L78.3 226.8 L87.2 228.9 L92.5 241.6 L82.5 255.2 L88.3 268 L81.7 276.7 L73.8 279.4 L65.2 272.7 L55 259 L63.8 245.2Z" fill="#bfefd2"/>
<path d="M326.6 278.1 L339 283.4 L348.5 269.1 L361.8 272.7 L362.8 284 L369.3 294.9 L363.1 307 L351.8 303.7 L342.9 316.2 L332.4 311.5 L330 300.3 L328.3 288.9Z" fill="#bfefd2"/>
<path d="M253.7 229.2 L261.8 228.5 L270.3 231.7 L278.2 226.5 L274.9 235.8 L272 245.1 L280.1 252.1 L271.7 248.8 L264.5 250.6 L257.5 258.3 L248.3 249.9 L252 239.2Z" fill="#bfefd2"/>
<path d="M338.9 130.7 L344.7 130.5 L350.8 132.7 L354.9 127 L362.5 132.6 L357.7 139.8 L358 145.2 L352.9 150 L347.4 151.8 L339.8 148.9 L335.1 142.9 L336.9 136.1Z" fill="#bfefd2"/>
<path d="M127.3 293 L133.3 287.9 L139.8 287.5 L147.5 289.7 L146.5 298 L143.8 306.4 L149.2 315.3 L142.5 314.2 L135.3 309.4 L128.8 316.6 L136.3 307.7 L132.8 299.8Z" fill="#bfefd2"/>
<path d="M387.7 288.5 L392.2 282.7 L398.5 283.3 L405.2 282.3 L410.9 289.6 L409.8 298.2 L409.3 307.1 L403.5 311.2 L395.5 307 L391 311.5 L386.9 303.7 L380.7 296.2Z" fill="#bfefd2"/>
<path d="M365.6 146.4 L374.7 145.8 L371.9 133.3 L381.2 131.5 L380.5 138.5 L385.3 144.2 L385.1 151.4 L377.5 150.6 L375.8 158.5 L370.8 160.8 L363.8 157.7 L363 152.5Z" fill="#bfefd2"/>
<path d="M290.2 190.6 L295.8 183.2 L302.5 183.7 L310.2 187.7 L309 192.6 L305.9 197 L307.3 203.1 L302.3 203.3 L298 207.3 L293.1 204.6 L288.9 200.3 L286.2 195.7Z" fill="#bfefd2"/>
<path d="M200.2 349.7 L213 346.3 L227.7 353.3 L238.4 342.1 L230.9 357.7 L237.7 371.7 L244.1 386.8 L233 390.2 L220.5 384.1 L210 390.6 L202.5 377.8 L204.8 362.8Z" fill="#bfefd2"/>
<path d="M270.6 413.4 L282.8 413.2 L295 413.1 L307.1 414.9 L307.6 432.8 L309.9 450.8 L304.5 469.6 L293.5 475.9 L284.5 469.5 L274.8 463.6 L276.5 446.3 L268.3 429.9Z" fill="#bfefd2"/>
<path d="M229.2 450 L237.5 458.2 L247.1 451 L255.5 451.4 L246.8 471.3 L261.6 492.2 L253.7 511.9 L242.4 520.5 L233.3 500.7 L223.1 509.9 L228.4 490 L232.7 469.9Z" fill="#bfefd2"/>
<path d="M64 439.8 L73.5 442.7 L83.4 441.4 L92.3 441.6 L92.7 457.1 L97.8 472.8 L90.8 487 L81.4 491.4 L73.2 482.6 L64.6 485.4 L55.1 470 L67.7 454.7Z" fill="#bfefd2"/>
<path d="M110.3 435.8 L115.9 444.2 L122.7 441.8 L130.4 439.3 L128.3 447.3 L124.4 455.1 L127.2 463.7 L122.5 461.8 L117.9 459.4 L112.4 461.2 L119.3 452.3 L107.6 445.3Z" fill="#bfefd2"/>
<path d="M190.4 521.2 L198.7 522.8 L206.1 515.1 L214.5 519.5 L214.6 526.9 L223.6 533.3 L217.2 542.4 L209.1 533.9 L201 540.2 L191.8 541.5 L198.8 534 L186.7 529Z" fill="#bfefd2"/>
<path d="M149.1 342 L155.8 341.4 L161.5 348.1 L168.2 344.4 L166.7 350.8 L166.3 357.3 L166 364.8 L161.8 359.6 L156 364.9 L152.6 361.3 L147 355.4 L154.8 347.9Z" fill="#bfefd2"/>
<path d="M316.7 411.6 L321.4 409.5 L327.1 414.1 L332.1 410.2 L331.4 415.9 L334.5 422.1 L328.9 426.7 L325.3 426 L322.8 429.7 L319.8 429.5 L321.3 423.4 L314.3 418.7Z" fill="#bfefd2"/>
<path d="M399.4 351.1 L414 359.1 L425.3 340.6 L439.7 346.9 L440.9 352.5 L439.4 358.2 L439.5 362.8 L428.1 366.7 L416.7 371.1 L405.7 368.4 L399.1 364.1 L396.3 358.8Z" fill="#bfefd2"/>
<path d="M86.1 506.3 L93.4 507.8 L99.3 516 L107.9 512.2 L109.8 519.6 L102.2 524.6 L102.7 532.2 L98.3 529.2 L92.3 531.2 L89 526.7 L81.4 521.1 L83.8 514.2Z" fill="#bfefd2"/>
<path d="M282.7 535.7 L288.6 530.5 L295.5 532.5 L301.9 534.1 L303.5 539.7 L300.4 545.9 L304.5 549.8 L298.6 554.9 L292.1 555.7 L286.1 553.4 L280.5 548.4 L282.9 542.3Z" fill="#bfefd2"/>
<path d="M102.8 624.3 L111.7 631.8 L118.4 616.1 L126.1 623 L132.7 630.1 L129.8 639.1 L132.3 647.8 L124.5 651.1 L116.3 653.4 L106.8 654.5 L96.8 646.2 L100.9 635.5Z" fill="#bfefd2"/>
<path d="M132.1 643 L141.4 646.4 L150.2 644 L158.5 639.8 L163.5 645.8 L165.3 652.2 L161.3 659.4 L154.2 666 L145.4 664.5 L137.2 664.1 L131.9 657.6 L139 648.3Z" fill="#bfefd2"/>
<path d="M185.6 684.1 L194.5 690.9 L201.1 675.3 L210.4 681 L204 691.4 L207.7 700 L214.7 707.9 L204.9 701.1 L197.9 708 L189.4 712.9 L179.8 704.5 L186.2 693.5Z" fill="#bfefd2"/>
<path d="M278 561.6 L283.7 568.9 L290.4 567.9 L296.6 564.3 L297.6 571 L297.9 577.7 L294.8 584.8 L289.4 587.1 L285.5 580.5 L280.7 581.4 L286.4 574.1 L273.6 569.1Z" fill="#bfefd2"/>
<path d="M178.4 648.2 L186.1 650.7 L193.2 648.8 L198.9 644.8 L198.9 651.4 L201.7 657.6 L202.6 664.3 L195 662.3 L187.2 658.2 L181.3 666.5 L184.4 659.5 L184.2 652.9Z" fill="#bfefd2"/>
<path d="M151.6 564.5 L155.9 565 L159.6 562.8 L164.8 561.9 L166.3 568.3 L171 574.3 L166 581.1 L162.3 583.4 L157.3 579.5 L154.1 583.9 L156.3 577 L150.3 571.2Z" fill="#bfefd2"/>
<path d="M399.6 599.1 L406.3 600 L412.4 595.9 L417.9 596.2 L426.6 601.7 L415.8 609.6 L421.5 615.9 L414.5 613.2 L407.7 611.3 L402.8 617.8 L404.4 611 L401.8 604.8Z" fill="#bfefd2"/>
<path d="M329.2 689.7 L333.6 686.2 L338.7 686.5 L343.1 686.1 L339.7 692.3 L347.3 697 L345.8 701.8 L340.7 701.3 L335.9 702 L330.7 705.6 L333.5 699.4 L327.4 694.5Z" fill="#bfefd2"/>
<path d="M63.9 805.1 L70.5 809.5 L75.6 801.6 L81.7 803.8 L80 813.9 L80.5 823.8 L83.9 833.6 L76.8 829.1 L71.1 839.7 L64.8 835.6 L64.1 825.6 L70.1 815.7Z" fill="#bfefd2"/>
<path d="M179.5 779.6 L186.7 785.1 L193.2 782.3 L200.3 777.7 L202.9 782.1 L203.3 786.8 L201.5 792.5 L195.4 798.8 L187.6 787.4 L181 793.9 L179.1 789.4 L179.6 784.6Z" fill="#bfefd2"/>
<path d="M199.5 798 L203.8 799.5 L207.1 794.9 L211 795.8 L212.6 799.7 L210.5 804.1 L213.2 806.7 L209.1 806.5 L205.4 809.2 L202.5 809.5 L197 806.4 L202.3 801.4Z" fill="#bfefd2"/>
<path d="M293.1 836.8 L299.8 829.4 L307.3 830.2 L316.1 833.5 L312.9 844 L313.8 854 L319 863.9 L311.3 860.1 L304.6 868.2 L297 865.5 L298.4 855.1 L291.1 846Z" fill="#bfefd2"/>
<path d="M370.7 845.3 L379.6 838.6 L389.1 841.9 L398 843.6 L402.6 848.5 L399.6 854.2 L400.6 859.1 L391.5 854.3 L383.8 867.4 L374.2 861.6 L370 857 L374.6 850.2Z" fill="#bfefd2"/>
<path d="M149.7 774.4 L154.4 773.7 L159.3 775.1 L163.8 771.8 L161.5 776.9 L168.3 780.7 L165.4 784.8 L160.4 782.6 L156.1 785.8 L151.8 787.8 L147.6 783.6 L152.5 778.2Z" fill="#bfefd2"/>
<path d="M474.6 772.5 L482.8 776.8 L489.7 769.3 L496.7 769.1 L490.7 780.6 L509.4 790.3 L499.8 800.9 L492.1 800.8 L485.4 810.5 L476.5 804.7 L475 793.7 L475.5 782.6Z" fill="#bfefd2"/>
<path d="M555.8 794.4 L561.1 788.8 L566.9 787.3 L574.7 791.9 L580.4 803.4 L570.6 816 L576.4 826.1 L569.7 830.5 L565.1 820 L559 824.9 L560.5 814.6 L546.6 805.5Z" fill="#bfefd2"/>
<path d="M578.5 778.1 L583.4 776 L588.5 775.3 L595.1 776.5 L594.1 783.6 L597.7 790 L596.3 796 L591.8 800.2 L586.9 802.1 L582.2 799.4 L573.7 793.6 L586.7 785.1Z" fill="#bfefd2"/>
<path d="M578.8 731.4 L584.1 731.7 L589.2 731.1 L593.4 728.3 L594.7 735.4 L593.1 742 L591.3 748.4 L588 749.3 L584.5 749.8 L580.9 751.3 L576.8 744.9 L573.8 738.4Z" fill="#bfefd2"/>
<path d="M444 817.4 L448.6 813.8 L454.9 820.2 L459.3 814.8 L467.6 821.6 L457.1 830.5 L461.7 836.9 L455 832.6 L450.8 845.3 L443.2 840.2 L441 832.6 L443.3 825Z" fill="#bfefd2"/>
<path d="M459.2 857.3 L465.5 852.6 L472 849.5 L480 855.4 L483.5 862.8 L477 871.2 L482.1 878.1 L476.2 885.9 L469.2 885 L460.5 881 L453.9 874.1 L463 865.3Z" fill="#bfefd2"/>
<path d="M533.1 874.2 L538.5 869.7 L545.6 876.9 L551.4 870.6 L547.5 876.5 L556.9 880.2 L553.2 884.9 L546.7 882.3 L542.3 893.4 L535.5 888.5 L529.6 884.3 L535.4 878.1Z" fill="#bfefd2"/>
<path d="M502.2 802.8 L507.5 804 L513.8 802 L517.8 807.2 L522.8 814.7 L512.2 820.3 L514.9 828.7 L512 825.7 L508.8 824.2 L506.2 824.8 L501.8 817.6 L500.7 810Z" fill="#bfefd2"/>
<path d="M260.4 239.2 L266.7 237.3 L274.7 236 L277.1 239.4 L278.1 242.8 L270 243.3 L263.9 242.1Z" fill="#bfefd2"/>
<path d="M328.4 764.2 L334.8 763.6 L338.8 766.7 L341.7 772 L335.3 773 L329.8 775.3 L328.8 769.9Z" fill="#bfefd2"/>
<path d="M159.2 223.5 L151.9 223.8 L148.8 216.1 L149.5 207.9 L155.8 207.5 L160 210.1 L161.7 216Z" fill="#bfefd2"/>
<path d="M266.6 573.8 L270.7 578.6 L272.2 583.6 L265.4 586.6 L256.2 586.3 L253.3 580.1 L259.3 576.3Z" fill="#bfefd2"/>
<path d="M336.8 716.9 L333.1 722.8 L326.9 721.8 L322 716.7 L325.7 710.7 L330.1 706.4 L335.3 710Z" fill="#bfefd2"/>
<path d="M419 481.1 L426.4 474.3 L433.7 467.1 L444.1 472.5 L449 483.2 L438.6 491.2 L427.6 487.1Z" fill="#bfefd2"/>
<path d="M311.2 650.2 L308 650.2 L303.4 648 L306.2 642.5 L309.1 639.6 L312.9 641.1 L315.8 647Z" fill="#bfefd2"/>
<path d="M120.5 462.1 L123.4 471.7 L122.7 479.6 L115.4 482.9 L105.5 481.9 L102.4 470.9 L111.9 466.8Z" fill="#bfefd2"/>
<path d="M171.1 300.4 L175.5 298.8 L180.8 298.7 L182.5 304.4 L180 310.2 L173 312.8 L168.5 306.4Z" fill="#bfefd2"/>
<path d="M402.5 602.5 L405.4 607 L397.2 610.4 L387 609.2 L381.7 606.3 L385.8 603.5 L392.3 600.8Z" fill="#bfefd2"/>
<path d="M101.1 177.7 L99.1 175.1 L99.9 172 L104.2 171.1 L108.9 172.3 L107.9 175.9 L106.4 180.9Z" fill="#bfefd2"/>
<path d="M230.9 388.7 L232.5 393.7 L229.9 397.6 L223.4 397.4 L219.2 395.7 L217.6 392.3 L222.5 390.1Z" fill="#bfefd2"/>
<path d="M72.4 865.7 L74.8 861.9 L84.9 860.7 L90.7 865.5 L87 870.4 L78.3 870.8 L71.5 869.3Z" fill="#bfefd2"/>
<path d="M166.5 733.1 L158.5 728.4 L160.4 718 L170.9 714.7 L179.9 719.7 L181.8 729.6 L174.7 736.6Z" fill="#bfefd2"/>
<path d="M215 527.9 L211.5 530.4 L204.6 531.7 L197.8 528.8 L201.8 524.9 L207.7 521.8 L216.5 523.6Z" fill="#bfefd2"/>
<path d="M198 294.7 L205.1 292.9 L209.8 296.7 L211.3 301.6 L207 305.8 L201.7 302.9 L196.7 300.3Z" fill="#bfefd2"/>
<path d="M648.8 742.5 L638.1 740.4 L628.8 736.5 L630.4 728.5 L642.6 727.7 L651.2 730.3 L657.7 736.7Z" fill="#bfefd2"/>
<path d="M154.6 249.8 L140.5 252.9 L131.5 244.8 L134.3 236.4 L142 230.6 L151 234.8 L153.5 240.5Z" fill="#bfefd2"/>
<path d="M402.2 845.9 L406.1 851.4 L404.7 858.6 L398.7 861.3 L391.4 859.5 L391.7 850.9 L395.5 844.3Z" fill="#bfefd2"/>
<path d="M138.3 829.9 L146.2 827.8 L154.5 827.7 L155.5 835.1 L152.1 840.6 L144.9 841.5 L142.3 836.3Z" fill="#bfefd2"/>
<path d="M346.2 273.7 L341.6 275.6 L338.9 268 L340.4 260.4 L343.7 255.7 L347.9 258.9 L349.9 267.5Z" fill="#bfefd2"/>
<path d="M132.5 554.8 L138 557.5 L139.5 563.2 L134.3 568 L127.6 565.5 L123.7 561.3 L126.5 556.4Z" fill="#bfefd2"/>
<path d="M378 665.8 L382.2 658.4 L390.7 654.7 L399.6 658.8 L396.9 666.4 L393.1 671.9 L383.7 673.1Z" fill="#bfefd2"/>
<path d="M147 471 L142.8 474.8 L136.8 473.8 L137.1 468.1 L137.3 463 L142.8 462 L145.2 466.4Z" fill="#bfefd2"/>
<path d="M619.9 885.9 L616.4 875.9 L622 867.6 L627.9 872.4 L632 877.7 L630.8 886.6 L625.3 889Z" fill="#bfefd2"/>
<path d="M178.1 370.1 L186 368.8 L193.9 368.3 L200.9 370.9 L196.7 374.4 L187.6 374.3 L175.4 374.3Z" fill="#bfefd2"/>
<path d="M572.3 884.6 L567.5 887.3 L563.4 886.7 L559.9 883.9 L559.5 878 L565.6 875.7 L569.3 879.9Z" fill="#bfefd2"/>
<path d="M164.9 845 L160.3 851.7 L152.2 847.7 L151.9 841 L152 831.9 L162.7 832.5 L170.6 838.2Z" fill="#bfefd2"/>
<path d="M112.5 795 L112.5 786.5 L116.8 779.4 L120.7 786.8 L121.4 793.6 L120.1 801.3 L115.6 800Z" fill="#bfefd2"/>
<path d="M131.8 252.7 L127.4 250.2 L129.8 245.8 L133.3 243 L136.7 245.6 L138.4 249.2 L135.4 251.5Z" fill="#bfefd2"/>
<path d="M227.5 141.2 L215.8 142.9 L215 134.9 L212.8 127.5 L224 126.5 L232.8 129.6 L237 136.8Z" fill="#bfefd2"/>
<path d="M306.4 529.9 L301.2 519.9 L305.5 510.1 L315.4 508.7 L322.6 513.7 L321.2 521.4 L316.6 526.4Z" fill="#bfefd2"/>
<path d="M116.8 705.3 L110.3 708.5 L103.4 706.3 L102.8 701.8 L105.6 698.6 L110.9 697.9 L115.6 700.3Z" fill="#bfefd2"/>
<path d="M171.7 469.1 L168.7 476.9 L163.7 485.3 L159 476.5 L157.8 468.5 L162.3 464.6 L167.4 462.4Z" fill="#bfefd2"/>
<path d="M371.6 515.9 L368.8 520 L364.3 522.4 L361.6 517.7 L361.9 513.3 L364.7 509.3 L369.5 511Z" fill="#bfefd2"/>
<path d="M433.2 525.7 L443.3 530.2 L446.8 536.4 L446.1 545.4 L434.4 542.7 L424.1 540.6 L424.8 532.2Z" fill="#bfefd2"/>
<path d="M90.2 765.9 L98.8 771.6 L105 777.1 L98.7 783.2 L86.4 785.8 L76.9 779.3 L78.4 770.5Z" fill="#bfefd2"/>
<path d="M436.4 827 L429.7 825.8 L425.5 820.3 L431.1 815.7 L439.8 810.7 L446.4 817.9 L445.8 826.1Z" fill="#bfefd2"/>
<path d="M362.7 124.4 L366.9 116.5 L377.2 118.3 L388.1 120.1 L384.2 128 L377 130.9 L368.7 130.5Z" fill="#bfefd2"/>
<path d="M524 887 L526.4 880.5 L535.5 878.8 L543.2 882 L540.9 887.5 L537 890.7 L530.5 890.7Z" fill="#bfefd2"/>
<path d="M422.1 125.9 L427.6 125.7 L429.7 130.4 L429.6 135.3 L425.3 137.5 L421 135.5 L421.1 131Z" fill="#bfefd2"/>
<path d="M689 846.4 L690.9 853.5 L689.5 858.8 L686.1 860.8 L680.8 861.1 L682.1 853.9 L683.7 848.3Z" fill="#bfefd2"/>
<path d="M159.9 527.9 L170.9 530.9 L166.4 535.8 L154.3 536.3 L140.7 536.3 L141 531.3 L150.1 529.4Z" fill="#bfefd2"/>
<path d="M71.4 511.2 L64.6 512.2 L56.2 510.4 L60.9 505.3 L63.8 500 L73.1 501 L72.9 506.9Z" fill="#bfefd2"/>
<path d="M644.8 684.3 L635.6 679.5 L645.6 674.9 L656.9 675.1 L664.9 678.3 L662.7 682.9 L654.4 684.4Z" fill="#bfefd2"/>
<path d="M128.7 784.4 L122.7 782.2 L122.9 773.8 L125.7 766.9 L133 763 L138 772.5 L135.9 783.5Z" fill="#bfefd2"/>
<path d="M463.5 831.9 L475.4 830.3 L478.2 837.4 L474.7 844.6 L461.5 845.6 L454.8 839.9 L457.1 834.7Z" fill="#bfefd2"/>
<path d="M370.6 389.9 L370.6 398 L363.8 399 L357.7 396.5 L357.5 388.6 L362.1 384.5 L367.2 385Z" fill="#bfefd2"/>
<path d="M206.8 827.2 L204.9 833 L198.8 835.2 L192.4 835.1 L189.5 831.9 L190.1 828 L196.8 827.4Z" fill="#bfefd2"/>
<path d="M216 314.7 L223.5 318.3 L226.1 326.6 L220.1 332.7 L212.2 332.5 L209.2 325.9 L209.4 318.9Z" fill="#bfefd2"/>
<path d="M382.8 619.5 L374 617.6 L372.6 613.2 L378.9 608.1 L392.9 609.3 L400.2 614.4 L390 617.6Z" fill="#bfefd2"/>
<path d="M77.2 675.1 L83 670.8 L96.3 670.7 L100.5 678.4 L93.4 685.2 L79 686.8 L74.4 679.6Z" fill="#bfefd2"/>
<path d="M143.8 239.2 L142.6 247.7 L135 253.2 L126.9 249.1 L123.3 242.2 L129.7 238 L136.8 232.8Z" fill="#bfefd2"/>
<path d="M218.1 845.9 L210.4 849 L201.4 845.9 L204.5 840.7 L209.6 838.2 L217.9 837.1 L223.3 841.7Z" fill="#bfefd2"/>
<path d="M307.6 300.8 L297.9 298.9 L301 294.7 L309.2 291.9 L318 294.2 L319.3 297.4 L315.5 299.9Z" fill="#bfefd2"/>
<path d="M252.6 142.6 L249.7 135.3 L256.1 128.2 L264 133.3 L265.9 138.7 L265.1 144.8 L258 147.2Z" fill="#bfefd2"/>
<path d="M579.1 699.8 L579.8 705.1 L570.7 705.1 L564.8 703.4 L560 699.1 L567.6 696.5 L576.7 694.4Z" fill="#bfefd2"/>
<path d="M374.6 260.8 L381.2 263.8 L385.5 266.7 L384 271.7 L380.1 277.8 L375.5 272.2 L374.5 268Z" fill="#bfefd2"/>
<path d="M100.3 416.3 L114.3 420.6 L113.7 431 L107.7 436.7 L96.6 442.5 L87.8 433.9 L94.8 426.3Z" fill="#bfefd2"/>
<path d="M300.7 385.3 L294.2 384.2 L297.4 380.5 L299.5 376.6 L304.9 379.1 L307.7 381.6 L307 385.5Z" fill="#bfefd2"/>
<path d="M98 501.6 L89.8 504.2 L89.8 493.7 L89.7 486 L96.2 480.1 L103.6 485.9 L100.7 494.9Z" fill="#bfefd2"/>
<path d="M85.8 163.6 L95.2 167.7 L97.1 172 L94.1 177.8 L80.2 176.7 L75.4 172.2 L74 166.9Z" fill="#bfefd2"/>
<path d="M270 332.7 L271.4 342.2 L266.3 343.7 L263 344.1 L260.4 338.5 L260.7 328.9 L266.2 325.7Z" fill="#bfefd2"/>
<path d="M316 316 L319.5 322.4 L312.2 327 L303.1 325.7 L299.3 318.6 L303.8 312.3 L311.5 312.2Z" fill="#bfefd2"/>
<path d="M271.8 410.4 L261.9 408.5 L258.9 405.7 L261.5 403.2 L268.7 400.6 L276.2 403.2 L282.4 407.4Z" fill="#bfefd2"/>
<path d="M632 898.1 L626.5 900.7 L620.6 898.4 L620 894.9 L622.5 891.7 L628.9 890.8 L633.8 894Z" fill="#bfefd2"/>
<path d="M544.8 781.7 L551.1 784.7 L546.7 788.3 L538.2 790.8 L532.3 787.2 L531.2 783.8 L536.8 781.4Z" fill="#bfefd2"/>
<path d="M150.6 819.4 L151.6 812.8 L158.1 809.7 L167.1 807.5 L172.6 812.9 L172.1 819.7 L161.4 818.8Z" fill="#bfefd2"/>
<path d="M376.4 765.6 L369.7 770.3 L361.4 770.6 L349.5 766 L355.8 756.2 L366.4 749.8 L375.1 757.7Z" fill="#bfefd2"/>
<path d="M217.3 728.1 L228.6 727.2 L238.4 728.1 L239.3 731.5 L234.6 734.3 L225.2 734.6 L215.5 732.5Z" fill="#bfefd2"/>
<path d="M941.9 675 L941.9 678.1 L947 695.3 L962.3 710.6 L980.1 718.2 L992.8 708 L1000.4 700.4 L1001.7 715.7 L987.7 730.9 L982.6 738.5 L992.8 743.6 L1008 733.5 L1028.4 720.8 L1043.6 729.7 L1053.8 733.5 L1069 725.8 L1084 725.8 L1084 675Z" fill="#8fd9ef"/>
<path d="M1084 675 L1084 710.6 L1099.3 713.1 L1117 720.8 L1142.5 730.9 L1150.1 746.2 L1167.9 761.4 L1180.6 776.7 L1188.2 786.8 L1185.7 807.2 L1188.2 817.3 L1173 827.5 L1195.8 827.5 L1206 847.9 L1221.3 873.3 L1236.5 891.1 L1241.6 905 L1366.2 905 L1366.2 675Z" fill="#8fd9ef"/>
<path d="M372.8 569.3 L387.4 562 L414.1 562 L411.7 576.6 L399.5 583.9 L380.1 588.7 L367.9 598.5 L360.6 613.1 L353.3 625.2 L348.5 620.4 L355.8 605.8 L363.1 591.2Z" fill="#8fd9ef"/>
<path d="M183.1 263.3 L181.6 266.6 L177 266 L173.9 264.3 L174.5 261.4 L177.3 258.5 L182 260.1Z" fill="#8fd9ef"/>
<path d="M198.7 278.6 L196.5 280.7 L192.4 280.5 L190 277.8 L192.9 275.7 L196 274.9 L200.1 275.8Z" fill="#8fd9ef"/>
<path d="M213.3 289.4 L212.7 286.1 L214.9 282.1 L219.7 284 L222.7 286.8 L220.7 290.1 L216.6 291.5Z" fill="#8fd9ef"/>
<path d="M254.1 277 L254.3 281.4 L252.9 284.1 L250.2 286.1 L248.6 282.7 L249.1 279.8 L250.4 275.9Z" fill="#8fd9ef"/>
<path d="M281.1 298.9 L281.9 295.8 L284 293 L287.5 294.4 L288.4 297 L287 298.9 L284.5 300.5Z" fill="#8fd9ef"/>
<path d="M164.3 212.6 L169.4 213.6 L173.7 214.7 L173 218.5 L169.8 221.1 L166 219.5 L163.9 216.9Z" fill="#8fd9ef"/>
<path d="M149.7 139.8 L152.6 138.3 L155.1 137.5 L157.8 139.2 L157.6 142.3 L154.2 142.6 L152.1 141.8Z" fill="#8fd9ef"/>
<path d="M131.9 131.8 L130.5 134.2 L127.6 134.7 L123.8 135.2 L123.6 132.7 L124.5 130.4 L128.5 130.5Z" fill="#8fd9ef"/>
<path d="M293.6 130.5 L295.9 132.1 L294.4 134.7 L292.5 136.1 L289.8 135.4 L289.2 132 L291.6 130.4Z" fill="#8fd9ef"/>
<path d="M419.6 199.2 L416.8 198.9 L415.8 197.3 L417.4 196.2 L419.7 195.8 L422.5 196.5 L422.7 198.5Z" fill="#8fd9ef"/>
<path d="M396.6 336.9 L394.3 339.6 L390.8 338.1 L387.1 336.7 L389.7 334.3 L392.4 332.4 L395.8 333.9Z" fill="#8fd9ef"/>
<path d="M209.9 253 L212.8 252.2 L215.8 253.2 L215.8 255.3 L213.7 257 L210.3 256.5 L208.6 254.7Z" fill="#8fd9ef"/>
<path d="M215.4 455 L213.8 460.1 L211.4 459.6 L209.1 456.4 L209.5 449.1 L212.1 446.8 L214 449.8Z" fill="#8fd9ef"/>
<path d="M214.2 475.1 L214.9 472.2 L217.4 470.3 L219.6 472.6 L220.8 475.7 L218.7 478.6 L215.8 477.3Z" fill="#8fd9ef"/>
<path d="M229.6 420.6 L232.7 419 L236.3 420.6 L235.8 423.4 L232.6 424.3 L229.2 424.6 L227.7 422.3Z" fill="#8fd9ef"/>
<path d="M256.5 448.2 L257.6 451.3 L254.1 453.4 L250.4 451.7 L249.1 448.4 L252 446.6 L255.4 444.9Z" fill="#8fd9ef"/>
<path d="M189.1 447.9 L190.4 445.9 L193.3 446.2 L195.9 446.7 L196.2 448.7 L193.4 449.1 L191.3 449.2Z" fill="#8fd9ef"/>
<path d="M183.2 408.1 L186.5 408.3 L186 410.6 L184.8 412.7 L181.9 411.8 L179.8 410.5 L179.9 408.1Z" fill="#8fd9ef"/>
<path d="M303 418.6 L300.2 418.5 L299.2 415.1 L300.7 412.5 L302.8 411.5 L304.7 413.3 L306.2 417.1Z" fill="#8fd9ef"/>
<path d="M366.6 374.7 L368.8 376 L370.7 377.6 L369.4 380.1 L367.9 381.9 L365.9 380.8 L365.7 377.8Z" fill="#8fd9ef"/>
<path d="M412 392.2 L413.3 395.9 L411.9 400 L408.3 398.7 L404.5 397.4 L405.7 393 L408.8 391.4Z" fill="#8fd9ef"/>
<path d="M333.1 462.8 L335 464.1 L334.4 468 L332.9 469.5 L331.1 469.3 L330.8 465.7 L331.8 463.4Z" fill="#8fd9ef"/>
<path d="M314.3 478.8 L317 478.7 L316.9 481 L315.9 482.9 L312.9 483.5 L311.5 481.3 L311.8 479Z" fill="#8fd9ef"/>
<path d="M354.5 558.2 L352.4 556.6 L352.6 554.4 L355.5 552.3 L359.2 553.8 L360.6 556.5 L358.7 559.6Z" fill="#8fd9ef"/>
<path d="M250.7 382.4 L248.2 383.5 L246.7 381.8 L246.6 380.3 L247.9 378.8 L250.3 379.4 L251.9 380.7Z" fill="#8fd9ef"/>
<path d="M183.7 623.9 L180.7 623 L180.3 620.2 L181 617.4 L184.1 617.1 L185.6 619.3 L186.9 622.5Z" fill="#8fd9ef"/>
<path d="M224.7 629.1 L220.8 627.6 L217.7 624.3 L220.8 620 L227.4 620 L230.2 624 L228.8 627.7Z" fill="#8fd9ef"/>
<path d="M251.4 632.9 L250.2 637.1 L248.1 637.2 L246.3 634.6 L246.7 629.9 L248.3 625.8 L250.7 628Z" fill="#8fd9ef"/>
<path d="M253.7 579.6 L252.3 574.6 L251.2 570.4 L252.6 566.4 L254.5 566.9 L255.4 570.6 L255.9 576.3Z" fill="#8fd9ef"/>
<path d="M261 664.6 L260.2 670.7 L257.9 668.9 L256.6 666 L256.3 660.7 L258.1 657.8 L260.3 659.1Z" fill="#8fd9ef"/>
<path d="M225.5 676.9 L227.4 678.1 L226.9 679.9 L224.6 680.5 L221.3 680.7 L220.5 678.2 L222.6 676.3Z" fill="#8fd9ef"/>
<path d="M128.3 674.1 L127.3 678.8 L125.5 678.9 L124 676.3 L124.3 671.4 L125.7 669.4 L127 670.8Z" fill="#8fd9ef"/>
<path d="M309.8 681.8 L308 681.5 L306.8 678.1 L308.1 674.6 L310.5 673.7 L312.1 677.1 L311.3 680.7Z" fill="#8fd9ef"/>
<path d="M202.8 755.4 L204.1 752.7 L206.3 753.6 L207.1 756.2 L206.9 759.1 L204.7 760.8 L203.3 758Z" fill="#8fd9ef"/>
<path d="M202.2 768.3 L203.5 771.8 L201.8 775.3 L198.6 777.3 L195.5 773.3 L196.4 767.4 L199.9 765.9Z" fill="#8fd9ef"/>
<path d="M328.2 586.7 L328.6 589.2 L328.1 592.4 L325.6 592.2 L324 589.9 L324.4 586.7 L326.3 584.4Z" fill="#8fd9ef"/>
<path d="M196.2 773.4 L197.7 767 L201.6 763.6 L204.8 768 L206.2 773.8 L203.3 778.3 L199.6 777.2Z" fill="#8fd9ef"/>
<path d="M207.1 758.7 L205.1 757.1 L202.9 755 L205 752.8 L206.8 752.4 L208.3 753.7 L209.6 756.8Z" fill="#8fd9ef"/>
<path d="M333.5 827 L332.6 823.9 L333.3 820.9 L335.4 817.9 L337.8 820.8 L338.2 825.7 L335.9 829.3Z" fill="#8fd9ef"/>
<path d="M315.6 834.3 L313.6 836.1 L311 836.4 L309.6 832.8 L310.7 828.9 L313.3 829.7 L316 830.3Z" fill="#8fd9ef"/>
<path d="M342.7 887.7 L341.4 892.9 L339.8 895.7 L337.3 894.9 L336.3 891.7 L335.8 886.5 L339.4 884.8Z" fill="#8fd9ef"/>
<path d="M211.8 884.8 L213.7 883.9 L214.9 887.2 L214.8 890.9 L213.8 893.1 L212 894.2 L211.7 889.6Z" fill="#8fd9ef"/>
<path d="M405.4 880.5 L404.6 878 L404.7 875.6 L406.5 874.3 L409 874.8 L409.1 878.1 L407.7 880.3Z" fill="#8fd9ef"/>
<path d="M228.9 860.6 L228.8 864.5 L227.3 865.8 L226.4 863.3 L225.8 860.7 L226.6 858 L228.1 857.3Z" fill="#8fd9ef"/>
<path d="M164.8 823.3 L164.4 819.9 L164.9 817.2 L165.8 814.9 L166.4 818.2 L166.9 821.4 L165.8 822.7Z" fill="#8fd9ef"/>
<path d="M360.4 769.9 L360.2 772.4 L358.2 773.4 L357.5 770.7 L357 768.7 L358.3 767.2 L360.2 767.3Z" fill="#8fd9ef"/>
<path d="M501.7 759.6 L495.4 758.6 L489.7 753.3 L493.7 746.2 L499 739.7 L504 746.5 L504.8 753.2Z" fill="#8fd9ef"/>
<path d="M513.1 779.6 L515 782 L516.6 786.1 L515.2 790.9 L513.5 795.7 L511.5 791.3 L511.1 783.8Z" fill="#8fd9ef"/>
<path d="M585.4 734.9 L588 733.3 L590.5 735.8 L591.7 740.9 L588.5 742.5 L585.2 744.3 L585.1 738.9Z" fill="#8fd9ef"/>
<path d="M551.2 794.9 L549.3 795.5 L548.7 792.1 L549.5 789.5 L551.2 787.6 L552.3 790.5 L552.6 793.3Z" fill="#8fd9ef"/>
<path d="M617.2 796.2 L619.1 793.4 L622 793.5 L623.4 796.2 L622.8 798.9 L620.7 799.8 L617.9 799.8Z" fill="#8fd9ef"/>
<path d="M617.6 713.2 L620.2 713.8 L622.2 714.9 L622.4 717.3 L619.7 718.3 L617.7 717.1 L616.4 715.4Z" fill="#8fd9ef"/>
<path d="M685.2 745.5 L685.8 747.9 L684.4 750.2 L681.4 751.1 L678.8 748.6 L680.6 745.8 L682.8 744.6Z" fill="#8fd9ef"/>
<path d="M469.5 685.4 L466.6 684.6 L466.6 682.1 L468 680.2 L470.6 680.4 L473.9 681.7 L472.6 684.7Z" fill="#8fd9ef"/>
<path d="M550.3 835.7 L548.3 835.7 L546.8 835.1 L545.6 831.6 L547.1 828.4 L549.2 828.4 L550.1 831.6Z" fill="#8fd9ef"/>
<path d="M570.6 874.4 L569 873 L568.2 871.1 L568.5 868.4 L570 868.2 L571.4 868.9 L572.1 872.1Z" fill="#8fd9ef"/>
<path d="M515.6 845.9 L517.9 846 L518.9 847.6 L517.9 849 L516.2 850 L514.4 848.9 L513.7 847.1Z" fill="#8fd9ef"/>
<path d="M889.6 790.3 L891 793.8 L886.5 796.8 L879.7 795.8 L877.1 792.9 L877.2 789.2 L884.3 787.5Z" fill="#8fd9ef"/>
<path d="M926.7 779.4 L930.7 784.5 L930.6 794.8 L927.4 801.2 L923.4 798.8 L921.9 791.3 L922.6 782.6Z" fill="#8fd9ef"/>
<path d="M987.4 835.4 L984.9 841.3 L981.7 837.3 L980.9 828.3 L983.2 822.9 L985.9 821.5 L988 827.4Z" fill="#8fd9ef"/>
<path d="M815.2 885.1 L819.1 881 L824 884.7 L822.6 893.3 L820.6 900.4 L815.6 900.2 L814 892.2Z" fill="#8fd9ef"/>
<path d="M854 819 L859.7 816.2 L864.3 814 L868.1 816.8 L870.9 820.6 L865.7 824.2 L859 822.4Z" fill="#8fd9ef"/>
<path d="M1014 782.7 L1011.9 784.9 L1009.7 783.3 L1009.3 778.2 L1010.5 773.9 L1013.1 773.1 L1014.3 777.7Z" fill="#8fd9ef"/>
<path d="M1042.9 816.5 L1043.8 814.1 L1045 812.1 L1047.7 812.8 L1049.7 814.5 L1047.8 816.2 L1045.7 818.1Z" fill="#8fd9ef"/>
<path d="M768.8 811.6 L767.3 807.3 L768.2 801.6 L770.9 801.9 L773.4 804 L773.4 810.3 L771.3 815.5Z" fill="#8fd9ef"/>
<path d="M944.7 797.5 L944.1 795.8 L944.2 793.5 L946.2 792.6 L947.6 794.5 L947.3 796.6 L946.4 798.6Z" fill="#8fd9ef"/>
<path d="M973.7 870.8 L973.4 867.3 L973.9 862.9 L976 862.7 L977.1 866.9 L976.6 871.3 L975 873.5Z" fill="#8fd9ef"/>
<path d="M1098.5 782.5 L1096.4 779.7 L1095.2 776.3 L1096.3 772.2 L1098.9 771.5 L1100.3 775 L1099.9 778.7Z" fill="#8fd9ef"/>
<path d="M1106.6 757.1 L1107.3 755.3 L1109.1 756 L1110.6 757.3 L1109.4 758.8 L1108 759.5 L1106.7 758.6Z" fill="#8fd9ef"/>
<path d="M66.8 688.4 L66 687.1 L66.8 685.8 L68.3 686.3 L68.1 687.9Z" fill="#8fd9ef"/>
<path d="M1157 789.4 L1156.7 792.2 L1155.8 793.8 L1155.2 790.9 L1156 789.4Z" fill="#8fd9ef"/>
<path d="M78.7 867.8 L77 868.3 L75.3 867.2 L77 866.1 L78.7 866.6Z" fill="#8fd9ef"/>
<path d="M1126.2 740 L1127.6 739.2 L1128.5 742 L1127.5 744.8 L1126.1 743.6Z" fill="#8fd9ef"/>
<path d="M294.2 665.5 L295 662.7 L296.9 662.8 L297.5 664.9 L296.2 666.2Z" fill="#8fd9ef"/>
<path d="M697.7 798.2 L698.1 795.3 L699.2 795.4 L699.2 798.6 L698.4 800Z" fill="#8fd9ef"/>
<path d="M96.4 602.4 L95.7 598.9 L97.3 596.8 L99.7 598 L98.5 600.8Z" fill="#8fd9ef"/>
<path d="M460.6 796.4 L462 795.3 L463.4 795.9 L463.1 797.9 L461.5 798.3Z" fill="#8fd9ef"/>
<path d="M658.8 887.3 L658 885 L659.3 882.9 L661.4 884.3 L661 887.5Z" fill="#8fd9ef"/>
<path d="M113 688.4 L111.1 689.2 L109.4 688.3 L109.5 685.9 L112.5 686.2Z" fill="#8fd9ef"/>
<path d="M836 738.4 L838.8 737.7 L840.2 740 L838.4 742 L836.2 740.6Z" fill="#8fd9ef"/>
<path d="M276.2 148.9 L278.7 148.5 L279.5 152 L277.1 153.7 L275.5 151.6Z" fill="#8fd9ef"/>
<path d="M418.2 450.6 L419.7 451.2 L420.5 452.7 L419.3 453.5 L418.3 452.7Z" fill="#8fd9ef"/>
<path d="M82.3 424.8 L81.3 427.4 L79.6 426.5 L79 423.7 L80.9 423Z" fill="#8fd9ef"/>
<path d="M243.2 136.1 L242.2 135.6 L241.5 133.8 L242.4 132.5 L243 133.4Z" fill="#8fd9ef"/>
<path d="M122.8 726.2 L124.9 726.9 L124.5 730.1 L122.1 730.2 L120.6 727.5Z" fill="#8fd9ef"/>
<path d="M364.9 877.1 L363.3 878 L361.5 877.4 L361.5 876.6 L363.6 876.2Z" fill="#8fd9ef"/>
<path d="M258.1 796.8 L257.8 795.8 L259.4 795.1 L260.4 796 L260.1 797.1Z" fill="#8fd9ef"/>
<path d="M515.8 736.8 L517.8 735.9 L520.5 737 L518.9 739.9 L515.8 739.7Z" fill="#8fd9ef"/>
<path d="M1211.5 773.7 L1212.3 772 L1214.4 771.5 L1215.3 773.2 L1213.8 774.6Z" fill="#8fd9ef"/>
<path d="M66.7 325.7 L67 328.1 L66.4 330.3 L64.5 329.1 L64.6 326.4Z" fill="#8fd9ef"/>
<path d="M1064.2 755.5 L1063.1 753.1 L1064.9 750.8 L1066.5 753.2 L1066.3 756.3Z" fill="#8fd9ef"/>
<path d="M365.7 711.2 L363 712.1 L361.8 710.2 L362.7 708.5 L365.5 708.8Z" fill="#8fd9ef"/>
<path d="M285.7 274.3 L285.5 271.8 L286.5 270.4 L287.3 272.2 L286.9 273.9Z" fill="#8fd9ef"/>
<path d="M187.3 616.9 L189.4 616.4 L190.3 617.4 L189.3 618.2 L186.7 618.3Z" fill="#8fd9ef"/>
<path d="M1027.2 877.1 L1026.2 876.8 L1026.2 876 L1027.3 875.5 L1028.4 876.4Z" fill="#8fd9ef"/>
<path d="M601.2 863.2 L603.5 863 L605.8 863.6 L603.6 864.4 L601.1 864.2Z" fill="#8fd9ef"/>
<path d="M816 871.3 L816 869.2 L818.8 869.2 L818.9 871.3 L817.4 872Z" fill="#8fd9ef"/>
<path d="M365.7 396 L367.5 398.3 L365.1 400.6 L362.6 398.7 L363 395.1Z" fill="#8fd9ef"/>
<path d="M128.8 233.3 L131.1 233.4 L131.6 236.8 L129.3 237.4 L127.8 235.7Z" fill="#8fd9ef"/>
<path d="M366.3 220.1 L364.6 219.7 L365.5 218.6 L367.2 218.1 L367.5 219.4Z" fill="#8fd9ef"/>
<path d="M107.3 845.9 L107.2 849.2 L106.2 850.9 L105.5 848.8 L105.6 845.5Z" fill="#8fd9ef"/>
<path d="M326.1 168.3 L323.7 167.8 L322.9 165.9 L324.6 164.9 L326.2 165.9Z" fill="#8fd9ef"/>
<path d="M262.6 508.7 L261 508.2 L259.7 506.2 L261 503.7 L262.3 505.4Z" fill="#8fd9ef"/>
<path d="M368.9 279.8 L367.5 281.9 L366.2 281.3 L365.8 277.9 L367.5 277.9Z" fill="#8fd9ef"/>
<path d="M229.6 125.1 L226.8 125 L227.3 122.7 L229.3 121.6 L230.5 123.4Z" fill="#8fd9ef"/>
<path d="M277.1 725.7 L275.5 726.5 L273.9 725.4 L275.1 724.3 L277 724.6Z" fill="#8fd9ef"/>
<path d="M301.6 172.3 L304 172.5 L303.2 174.4 L300.9 175.2 L299.5 173.2Z" fill="#8fd9ef"/>
<path d="M281.8 774 L281.9 772.8 L283 772 L284.1 773 L283.5 774.2Z" fill="#8fd9ef"/>
<path d="M205 684.1 L204.1 681.2 L205.6 678.7 L207.4 680.6 L207.9 683.7Z" fill="#8fd9ef"/>
<path d="M279.4 202.7 L278.7 205.1 L277.6 203.2 L277.9 201.1 L279.1 200.1Z" fill="#8fd9ef"/>
<path d="M1085.7 683.5 L1086.3 682.6 L1087.1 683 L1087.2 684 L1086.4 684.3Z" fill="#8fd9ef"/>
<path d="M760 794.7 L761.1 795.5 L760.8 798.2 L759.4 797.7 L759 795.7Z" fill="#8fd9ef"/>
<path d="M529.4 860.4 L527.4 859.6 L527.6 857.6 L530.6 857.6 L531.7 859.5Z" fill="#8fd9ef"/>
<path d="M1023.6 785.1 L1022.9 787 L1022 787.1 L1021.6 785 L1022.5 784Z" fill="#8fd9ef"/>
<path d="M90.8 230.2 L90.3 233.3 L87 233.6 L85.7 230.5 L88.3 229.5Z" fill="#8fd9ef"/>
<path d="M700 845.6 L701.3 844.2 L703.1 845.2 L702.8 846.6 L700.9 847.1Z" fill="#8fd9ef"/>
<path d="M205.3 589.1 L203.2 587.7 L204.7 586.1 L206.8 586.3 L207.2 587.9Z" fill="#8fd9ef"/>
<path d="M410.4 441 L408.9 441.8 L407.9 440.4 L408.8 439.1 L410.3 439.4Z" fill="#8fd9ef"/>
<path d="M299.5 677 L301.1 676.7 L301.9 678.3 L300.9 679.7 L299.3 679.2Z" fill="#8fd9ef"/>
<path d="M75.9 397.7 L78 397 L80.7 397.7 L79 399.1 L76.4 399.3Z" fill="#8fd9ef"/>
<path d="M252.4 174.9 L250.3 175.9 L248 174.8 L249.6 173.2 L251.7 173.2Z" fill="#8fd9ef"/>
<path d="M244.5 384.2 L246.4 383.5 L247.1 386.1 L246 388.3 L244.4 387.1Z" fill="#8fd9ef"/>
<path d="M649.9 873.9 L651.3 875.6 L650.2 877.2 L648.3 876.9 L648.1 875Z" fill="#8fd9ef"/>
<path d="M990.2 788.6 L988.7 788.1 L988.2 786.3 L990 785.5 L990.8 787.1Z" fill="#8fd9ef"/>
<path d="M1053.2 778.9 L1054.7 777.7 L1056.6 777.5 L1058.2 778.5 L1056.2 779.5Z" fill="#8fd9ef"/>
<path d="M1144.6 727.3 L1145.9 724.6 L1147.6 726.3 L1147.4 729.4 L1145.6 730.3Z" fill="#8fd9ef"/>
<path d="M478.3 865.2 L476.4 865.9 L474.9 864.2 L476.3 862.4 L478.8 862.9Z" fill="#8fd9ef"/>
<path d="M688.7 760.6 L687.9 762.1 L686.9 761.6 L686.3 760 L687.7 759.3Z" fill="#8fd9ef"/>
<path d="M1030 898.6 L1027.6 898.7 L1026.9 896.8 L1029 896 L1030.7 897Z" fill="#8fd9ef"/>
<path d="M477.5 900.7 L478.1 899.6 L480.1 899.2 L480.6 900.1 L479.7 900.9Z" fill="#8fd9ef"/>
<path d="M375.4 627.3 L377 626.3 L378.1 628.1 L377.7 631.3 L376 630Z" fill="#8fd9ef"/>
<path d="M180.3 253.6 L182.2 253.9 L182.9 255.7 L182.2 258.3 L180.5 256.7Z" fill="#8fd9ef"/>
<path d="M262.5 329.6 L263.4 328.3 L264.1 330.5 L263.5 332.5 L262.4 332.9Z" fill="#8fd9ef"/>
<path d="M749.2 874.9 L747.4 874.2 L748.1 871.4 L750 871.9 L751 874.1Z" fill="#8fd9ef"/>
<g fill="none" stroke="#adb8d2" stroke-width="1" stroke-linecap="round" stroke-linejoin="round">
<path d="M161.3 122 Q171 131.7 185.6 136.6 Q200.2 141.5 216 146.3 Q231.8 151.2 237.8 160.9 Q243.9 170.6 259.7 174.9 Q275.5 179.1 286.5 182.2 Q297.4 185.2 308.3 194.9 Q319.3 204.7 325.4 214.4 Q331.4 224.1 330.2 236.3 Q329 248.4 325.4 263 Q321.7 277.6 324.8 292.2 Q327.8 306.8 326 324.4 L324.2 342"/>
<path d="M229.3 122 L231.8 151.2"/>
<path d="M282.8 122 Q297.4 146.3 307.1 154.8 Q316.9 163.3 321.7 176.7 Q326.6 190.1 329 207.1 L331.4 224.1"/>
<path d="M336.3 122 Q329 136.6 321.7 142.7 Q314.4 148.7 313.2 157.3 L312 165.8"/>
<path d="M439.6 129.3 Q423.8 156 426.3 175.5 Q428.7 194.9 429.9 207.1 Q431.1 219.3 417.8 233.8 Q404.4 248.4 402 258.2 L399.5 267.9"/>
<path d="M331.4 224.1 Q355.8 248.4 361.8 258.2 Q367.9 267.9 366.7 282.5 Q365.5 297.1 364.3 319.5 L363.1 342"/>
<path d="M253.6 256.9 Q243.9 277.6 239.1 292.2 Q234.2 306.8 228.1 315.3 Q222 323.8 211.1 332.9 L200.2 342"/>
<path d="M258.5 258.2 Q273.1 282.5 285.2 292.2 Q297.4 301.9 301.1 314.1 Q304.7 326.2 307.1 334.1 L309.6 342"/>
<path d="M346 202.2 Q355.8 224.1 367.9 236.3 Q380.1 248.4 381.3 258.2 L382.5 267.9"/>
<path d="M389.8 277.6 Q384.9 297.1 380.1 306.8 Q375.2 316.5 370.3 329.3 L365.5 342"/>
<path d="M156.4 282.5 Q154 306.8 156.4 315.3 Q158.8 323.8 156.4 332.9 L154 342"/>
<path d="M64 258.2 Q88.3 256.9 101.7 259.4 L115.1 261.8"/>
<path d="M278 180.4 Q273.1 202.2 275.5 208.3 Q278 214.4 275.5 221.7 Q273.1 229 274.3 238.7 Q275.5 248.4 280.4 251.8 L285.2 255.2"/>
<path d="M365.5 187.6 Q380.1 194.9 392.2 193.7 Q404.4 192.5 422 197.4 L439.6 202.2"/>
<path d="M95.6 342 Q102.9 356.6 107.8 366.3 Q112.6 376 119.9 385.2 L127.2 394.3"/>
<path d="M166.1 387 Q161.3 414.9 158.8 429.5 Q156.4 444.1 151.5 458.7 Q146.7 473.3 154 486.7 Q161.3 500 166.1 508.5 Q171 517.1 174.6 524.3 Q178.3 531.6 194.1 541.4 Q209.9 551.1 222 556.6 L234.2 562"/>
<path d="M241.5 414.9 Q248.8 439.3 260.9 449 Q273.1 458.7 278 470.9 Q282.8 483 273.1 492.7 Q263.4 502.5 260.9 509.8 Q258.5 517.1 259.7 529.2 Q260.9 541.4 258.5 551.7 L256.1 562"/>
<path d="M275.5 407.6 Q273.1 434.4 273.7 446.5 L274.3 458.7"/>
<path d="M64 536.5 Q112.6 529.2 141.8 522.5 Q171 515.8 183.1 512.8 Q195.3 509.8 208.7 514.6 Q222 519.5 240.3 517.1 Q258.5 514.6 270.7 515.8 Q282.8 517.1 296.2 523.1 Q309.6 529.2 319.3 529.2 L329 529.2"/>
<path d="M282.8 485.4 Q302.3 497.6 305.9 513.4 Q309.6 529.2 315.6 540.2 L321.7 551.1"/>
<path d="M219.6 422.2 Q209.9 444.1 211.1 453.8 L212.3 463.6"/>
<path d="M195.3 419.8 Q185.6 444.1 178.3 456.3 Q171 468.4 171 473.3 L171 478.2"/>
<path d="M122.4 405.2 Q132.1 439.3 138.2 456.3 L144.2 473.3"/>
<path d="M439.6 351.7 Q414.1 356.6 397.1 355.4 Q380.1 354.2 367.9 355.4 Q355.8 356.6 350.9 360.2 L346 363.9"/>
<path d="M355.8 356.6 Q365.5 380.9 371.6 389.4 L377.6 397.9"/>
<path d="M382.5 470.9 Q404.4 478.2 411.7 487.9 Q419 497.6 422.6 507.3 L426.3 517.1"/>
<path d="M404.4 441.7 Q409.2 463.6 416.5 470.9 Q423.8 478.2 431.7 483 L439.6 487.9"/>
<path d="M234.2 562 Q243.9 543.8 246.3 532.9 Q248.8 521.9 253.6 519.5 L258.5 517.1"/>
<path d="M219.6 521.9 Q231.8 536.5 240.3 540.2 Q248.8 543.8 258.5 552.9 L268.2 562"/>
<path d="M278 517.1 Q278 536.5 285.2 543.8 Q292.5 551.1 295 556.6 L297.4 562"/>
<path d="M367.9 512.2 Q387.4 519.5 391 528 Q394.7 536.5 404.4 543.8 Q414.1 551.1 426.9 553.5 L439.6 556"/>
<path d="M78.6 551.1 L81 562"/>
<path d="M64 456.3 Q78.6 439.3 79.8 429.5 Q81 419.8 74.9 412.5 L68.9 405.2"/>
<path d="M161.3 414.9 Q136.9 412.5 124.8 407.6 Q112.6 402.8 100.5 404 L88.3 405.2"/>
<path d="M78.6 562 Q81 581.5 72.5 586.3 L64 591.2"/>
<path d="M88.3 562 Q95.6 576.6 110.2 575.4 Q124.8 574.2 130.9 586.3 Q136.9 598.5 139.4 602.1 Q141.8 605.8 154 609.4 L166.1 613.1"/>
<path d="M219.6 562 Q234.2 581.5 241.5 593.6 Q248.8 605.8 252.4 609.4 Q256.1 613.1 262.2 622.8 Q268.2 632.5 258.5 636.2 Q248.8 639.8 241.5 645.9 Q234.2 652 225.7 655.6 L217.2 659.3"/>
<path d="M141.8 605.8 Q127.2 642.2 123.6 653.2 Q119.9 664.1 118.7 678.7 L117.5 693.3"/>
<path d="M64 659.3 Q119.9 658 140.6 663.5 Q161.3 669 167.3 666.5 Q173.4 664.1 185.6 662.9 L197.7 661.7"/>
<path d="M166.1 613.1 Q171 642.2 172.2 653.2 L173.4 664.1"/>
<path d="M190.4 569.3 Q195.3 588.7 202.6 591.2 Q209.9 593.6 208.7 605.8 Q207.4 617.9 212.3 628.9 Q217.2 639.8 217.2 649.5 L217.2 659.3"/>
<path d="M224.5 671.4 Q234.2 678.7 235.4 693.3 Q236.6 707.9 234.2 720 Q231.8 732.2 233 746.8 Q234.2 761.4 236.6 771.7 L239.1 782"/>
<path d="M161.3 669 Q154 698.2 152.7 707.9 Q151.5 717.6 156.4 724.9 Q161.3 732.2 166.1 739.5 Q171 746.8 169.8 764.4 L168.5 782"/>
<path d="M85.9 669 Q88.3 688.4 83.5 698.2 Q78.6 707.9 73.7 712.7 Q68.9 717.6 66.4 718.8 L64 720"/>
<path d="M64 617.9 Q78.6 630.1 82.2 649.5 L85.9 669"/>
<path d="M256.1 613.1 Q278 605.8 280.4 598.5 Q282.8 591.2 278 581.5 Q273.1 571.7 270.7 566.9 L268.2 562"/>
<path d="M278 605.8 Q287.7 625.2 296.2 632.5 L304.7 639.8"/>
<path d="M253.6 656.8 Q263.4 676.3 270.7 684.8 Q278 693.3 287.7 695.7 L297.4 698.2"/>
<path d="M185.6 678.7 Q214.7 688.4 224.5 693.3 Q234.2 698.2 243.9 700.6 L253.6 703"/>
<path d="M353.3 634.9 Q355.8 659.3 353.3 667.8 L350.9 676.3"/>
<path d="M384.9 664.1 Q387.4 688.4 389.8 694.5 L392.2 700.6"/>
<path d="M414.1 562 Q404.4 588.7 395.9 599.7 Q387.4 610.6 375.2 622.8 L363.1 634.9"/>
<path d="M444 591.2 Q423.8 610.6 414.1 616.7 Q404.4 622.8 395.9 616.7 L387.4 610.6"/>
<path d="M350.9 746.8 Q375.2 756.5 389.8 760.2 Q404.4 763.8 424.2 758.9 L444 754.1"/>
<path d="M389.8 732.2 Q397.1 751.6 400.7 757.7 Q404.4 763.8 410.5 772.9 L416.5 782"/>
<path d="M64 763.8 Q83.5 768.7 85.9 775.3 L88.3 782"/>
<path d="M100.5 763.8 Q112.6 756.5 127.2 758.9 Q141.8 761.4 156.4 754.1 L171 746.8"/>
<path d="M243.9 717.6 Q248.8 746.8 253.6 756.5 Q258.5 766.2 257.3 774.1 L256.1 782"/>
<path d="M367.9 642.2 Q377.6 625.2 386.1 615.5 L394.7 605.8"/>
<path d="M143.7 751.9 Q135.7 779.8 134.7 799.7 Q133.7 819.7 128.7 837.6 L123.7 855.5"/>
<path d="M167.6 746 Q171.5 771.9 173.5 785.8 Q175.5 799.7 177.5 809.7 Q179.5 819.7 181.5 831.6 Q183.5 843.6 183.5 861.5 Q183.5 879.4 182.5 892.2 L181.5 904.9"/>
<path d="M157.6 855.5 Q147.6 879.4 143.7 892.2 L139.7 904.9"/>
<path d="M171.5 783.8 Q191.5 775.8 203.4 774.9 Q215.4 773.9 222.3 780.8 Q229.3 787.8 236.3 791.8 L243.2 795.8"/>
<path d="M229.3 748 Q231.3 771.9 235.3 781.8 Q239.3 791.8 241.3 803.7 Q243.2 815.7 247.2 819.7 L251.2 823.6"/>
<path d="M211.4 823.6 Q223.3 839.6 218.4 847.5 Q213.4 855.5 221.3 862.5 Q229.3 869.5 242.3 873.4 L255.2 877.4"/>
<path d="M251.2 823.6 Q263.2 839.6 266.2 845.6 L269.1 851.5"/>
<path d="M275.1 875.4 Q303 879.4 313 876.4 Q322.9 873.4 332.9 867.5 Q342.8 861.5 362.7 850.5 Q382.7 839.6 413.3 832.6 L444 825.6"/>
<path d="M295 815.7 Q313 809.7 320.9 814.7 Q328.9 819.7 335.9 813.7 Q342.8 807.7 345.8 801.7 L348.8 795.8"/>
<path d="M320.9 873.4 Q316.9 851.5 322.9 843.6 Q328.9 835.6 335.9 832.6 L342.8 829.6"/>
<path d="M342.8 861.5 Q354.8 879.4 358.8 892.2 L362.7 904.9"/>
<path d="M303 889.4 L293 904.9"/>
<path d="M402.6 759.9 Q406.6 787.8 412.5 797.8 Q418.5 807.7 427.5 815.7 Q436.4 823.6 440.2 831.6 L444 839.6"/>
<path d="M370.7 755.9 Q382.7 773.9 392.6 779.8 Q402.6 785.8 423.3 788.8 L444 791.8"/>
<path d="M279.1 875.4 Q299 883.4 320.9 887.4 Q342.8 891.4 362.7 892.4 Q382.7 893.4 402.6 890.4 Q422.5 887.4 433.2 889.4 L444 891.4"/>
<path d="M75.9 765.9 Q81.9 789.8 79.9 804.7 Q77.9 819.7 71 823.6 L64 827.6"/>
<path d="M64 765.9 Q83.9 769.9 90.9 767.9 Q97.9 765.9 120.8 758.9 L143.7 751.9"/>
<path d="M193.5 740 Q203.4 759.9 202.4 769.9 L201.4 779.8"/>
<path d="M243.2 740 Q239.3 759.9 234.3 773.9 L229.3 787.8"/>
<path d="M259.2 751.9 Q263.2 771.9 269.1 778.8 L275.1 785.8"/>
<path d="M346.8 769.9 Q358.8 751.9 366.7 750 L374.7 748"/>
<path d="M227.3 867.5 Q231.3 889.4 230.3 897.1 L229.3 904.9"/>
<path d="M444 715.7 Q459.3 725.8 466.9 725.8 Q474.5 725.8 483.4 728.4 L492.3 730.9"/>
<path d="M444 802.1 Q464.3 817.3 474.5 822.4 Q484.7 827.5 493.6 840.2 Q502.5 852.9 511.4 868.2 Q520.3 883.4 524.1 894.2 L527.9 905"/>
<path d="M474.5 751.3 Q479.6 781.8 478.3 794.5 Q477 807.2 480.9 817.3 L484.7 827.5"/>
<path d="M527.9 705.5 Q540.6 725.8 543.1 742.4 Q545.7 758.9 550.8 772.9 Q555.8 786.8 554.6 802.1 L553.3 817.3"/>
<path d="M566 715.7 Q586.3 725.8 591.4 733.5 Q596.5 741.1 601.6 756.3 Q606.7 771.6 606.2 794.5 Q605.7 817.3 606.2 835.1 Q606.7 852.9 601.6 864.4 L596.5 875.8"/>
<path d="M606.7 771.6 Q621.9 781.8 627 794.5 Q632.1 807.2 632.1 822.4 Q632.1 837.7 627 845.3 L621.9 852.9"/>
<path d="M621.9 705.5 Q616.9 736 618.1 755.1 L619.4 774.1"/>
<path d="M637.2 700.4 Q642.3 725.8 652.4 732.2 L662.6 738.5"/>
<path d="M667.7 799.6 Q698.2 797 710.9 790.7 Q723.6 784.3 743.8 780.5 L764 776.7"/>
<path d="M634.6 835.1 Q672.8 822.4 691.8 812.3 Q710.9 802.1 717.3 793.2 L723.6 784.3"/>
<path d="M710.9 802.1 Q723.6 822.4 736.3 830.1 Q749 837.7 756.5 847.9 L764 858"/>
<path d="M688 776.7 L698.2 797"/>
<path d="M698.2 720.8 Q718.5 736 726.2 747.4 Q733.8 758.9 741.4 765.2 L749 771.6"/>
<path d="M662.6 738.5 Q688 751.3 698.2 751.3 Q708.4 751.3 721.1 755.1 L733.8 758.9"/>
<path d="M606.7 852.9 Q627 840.2 641 839 Q655 837.7 663.9 845.3 Q672.8 852.9 680.4 863.1 Q688 873.3 693.1 889.2 L698.2 905"/>
<path d="M655 837.7 Q657.5 868.2 665.1 880.9 Q672.8 893.6 675.3 899.3 L677.9 905"/>
<path d="M723.6 822.4 Q718.5 852.9 723.6 865.6 Q728.7 878.4 738.9 891.7 L749 905"/>
<path d="M764 807.2 Q743.9 817.3 733.8 819.9 L723.6 822.4"/>
<path d="M444 852.9 Q469.4 863.1 482.1 865.6 Q494.8 868.2 502.5 880.9 Q510.1 893.6 507.5 899.3 L505 905"/>
<path d="M545.7 852.9 Q555.8 878.4 558.4 891.7 L560.9 905"/>
<path d="M459.3 680.1 Q454.2 695.3 449.1 697.9 L444 700.4"/>
<path d="M477 690.3 Q494.8 703 501.2 701.7 L507.5 700.4"/>
<path d="M596.5 875.8 Q601.6 893.6 599.1 899.3 L596.5 905"/>
<path d="M764 700.4 Q743.9 710.6 736.3 720.8 L728.7 730.9"/>
<path d="M688 678.1 Q698.2 700.4 698.2 710.6 L698.2 720.8"/>
<path d="M733.8 758.9 L731.2 784.3"/>
</g>
<g fill="none" stroke="#cdd5e4" stroke-width=".9" stroke-linecap="round" stroke-linejoin="round">
<path d="M908.8 805.1 Q926.7 798.6 934.8 797.5 Q942.8 796.4 949.6 793.2 Q956.3 790 965.7 785.6 Q975.1 781.2 982.1 778.3 Q989.2 775.4 998.4 775.1 L1007.6 774.7"/>
<path d="M884.2 839 Q870.7 840.3 860.1 843.7 Q849.6 847.1 845.4 851.5 Q841.2 855.9 840.5 862.1 L839.7 868.3"/>
<path d="M943 779.6 Q950 793 949 803.4 Q948 813.8 941.3 821.2 Q934.5 828.6 933.3 839.8 L932.1 851"/>
<path d="M956.7 809 Q970 806.3 976.5 804.2 Q982.9 802.2 988.1 796.8 Q993.2 791.4 998.3 785.7 L1003.4 779.9"/>
<path d="M1071 787.9 Q1058.8 787.4 1052.9 784.5 Q1046.9 781.7 1039.2 777.1 Q1031.6 772.6 1030.1 763.7 Q1028.6 754.9 1027.2 749.7 Q1025.8 744.6 1028.4 735.8 L1030.9 727"/>
<path d="M846.2 865 Q828.5 851.7 820.4 850.7 Q812.4 849.7 807 847.9 Q801.6 846.2 795.2 842.1 Q788.7 837.9 783.7 834.3 L778.7 830.7"/>
<path d="M854.2 798.6 Q874.3 790.5 883.7 789.2 Q893.1 787.9 897.3 784.8 L901.5 781.7"/>
<path d="M1055.3 837.2 Q1066.4 836.1 1071.9 834.1 Q1077.5 832.1 1084.2 829.9 L1091 827.7"/>
<path d="M1063.6 845.4 Q1079.1 857.7 1082.5 866.8 Q1085.8 875.9 1085.2 885 Q1084.7 894 1085.6 902.9 Q1086.5 911.8 1092.3 920.6 L1098.1 929.4"/>
<path d="M1045.6 843.4 Q1030.8 851.3 1026.1 855 Q1021.3 858.8 1015.4 863 Q1009.6 867.3 1001.5 872.2 Q993.5 877.1 989.9 882.2 Q986.4 887.2 981 890.5 L975.6 893.7"/>
<path d="M1053.9 827.9 Q1038.6 835.1 1030.8 842.2 Q1023 849.2 1015.6 850.8 Q1008.2 852.3 1002.8 855.7 L997.4 859.1"/>
<path d="M1031.9 870.7 Q1034.3 854.9 1041.7 849.7 Q1049.1 844.4 1056 837.9 Q1062.9 831.4 1071.7 829.5 Q1080.4 827.7 1087.1 829.4 L1093.8 831.2"/>
<path d="M981.1 741.9 Q969.5 750.1 963.2 753.5 Q956.8 756.9 945.5 756.5 L934.2 756"/>
<path d="M798.9 799.6 Q797.9 786.9 797.4 781.8 Q796.8 776.6 795.6 770.5 Q794.4 764.3 791.3 755.7 Q788.2 747.1 784.5 738.1 L780.9 729"/>
<path d="M889.9 857.8 Q906.1 847.9 910.6 840.3 Q915.1 832.7 915.9 823.5 L916.7 814.3"/>
<path d="M924.9 864.1 Q915.7 877.6 907.1 880.7 Q898.4 883.8 890.4 891.4 Q882.3 898.9 873.8 899.6 Q865.4 900.2 855 903.5 L844.7 906.7"/>
<path d="M875.5 696.8 Q859.2 696.8 854.2 692.5 Q849.2 688.2 842 688.5 Q834.8 688.7 829.6 692.9 Q824.4 697.1 814.2 699.1 Q804 701.1 796.5 696.6 L788.9 692.2"/>
<path d="M791.5 728.3 Q777.5 721.1 768.9 717 Q760.3 713 753.2 704.7 Q746.2 696.5 742.7 691.3 Q739.1 686.2 736.1 678.8 L733 671.4"/>
<path d="M895.6 704 Q913.7 694.1 921 688.1 Q928.3 682.1 935.1 678.2 L941.8 674.3"/>
<path d="M1052.2 786.2 Q1049 799.1 1042.7 803.5 Q1036.4 807.9 1035.8 814.7 Q1035.3 821.6 1032.6 829.1 L1029.8 836.6"/>
<path d="M923.9 810.2 Q939.3 797.7 941.8 787.7 Q944.3 777.8 947.9 768.2 Q951.5 758.6 954.5 752.9 Q957.5 747.2 962.1 742.1 L966.7 737"/>
<path d="M1056.8 820.6 Q1051.9 841.1 1052.3 851.8 Q1052.8 862.5 1056.2 870.8 Q1059.7 879.1 1064.1 885.6 L1068.6 892.1"/>
<path d="M898.9 857.4 Q910.4 866.8 914 875.8 Q917.5 884.8 923.6 891.8 Q929.8 898.8 938.8 905.1 Q947.9 911.4 951.7 916.1 Q955.6 920.7 956.7 931.4 L957.8 942.2"/>
<path d="M918 721.1 Q926.3 741.5 930.7 748.1 Q935.1 754.7 943.5 758.6 Q951.8 762.5 959 766.5 L966.2 770.4"/>
<path d="M965.4 769.9 Q958.7 751 957 740.9 L955.2 730.8"/>
<path d="M873.4 784.5 Q889.1 791.9 899.3 794.8 Q909.4 797.8 917.1 798 Q924.8 798.2 931.9 793.9 Q939 789.5 942.3 783.3 L945.7 777.1"/>
<path d="M1082.5 822.9 Q1090.4 802.7 1093.5 795.5 Q1096.6 788.2 1105.1 783.2 L1113.6 778.2"/>
<path d="M954.9 775.6 Q937.2 775.5 928.3 778.1 Q919.5 780.6 911.5 784.6 Q903.6 788.5 901.7 793.6 Q899.8 798.8 901.7 806.2 L903.6 813.6"/>
<path d="M1051.2 847.9 Q1072.1 843.6 1082.8 841.5 Q1093.5 839.5 1104.1 836.8 Q1114.7 834.1 1125.4 830.8 Q1136.1 827.6 1141.9 825.9 L1147.6 824.3"/>
<path d="M909.8 724.3 Q925.3 720.6 931.8 718.3 L938.4 716.1"/>
<path d="M840.3 703.9 Q850.1 687.7 854.9 683.2 Q859.6 678.7 864.9 671.4 Q870.1 664.1 874.2 656.9 Q878.3 649.8 882.3 645.5 L886.3 641.3"/>
<path d="M772.6 686.7 Q780.5 700.1 786.3 705.8 Q792.2 711.5 796.5 716.9 Q800.8 722.4 804.7 727.5 Q808.6 732.6 816.8 738.1 L824.9 743.6"/>
<path d="M1010 726.4 Q1000.3 733.6 991.5 734.7 Q982.7 735.8 972.6 734.5 Q962.5 733.3 954.5 730 Q946.5 726.7 938 725.4 L929.6 724.1"/>
<path d="M945.8 863.1 Q937 876.8 935.9 886.3 Q934.8 895.9 931.9 901.3 L929 906.8"/>
<path d="M878.5 842.8 Q871.2 858.6 863 862 Q854.9 865.4 844.8 869.2 L834.7 872.9"/>
<path d="M834.8 897.7 Q821.3 889.8 817.3 880.7 Q813.4 871.6 812.5 864.1 Q811.5 856.6 806.4 851.6 L801.3 846.5"/>
<path d="M792.7 781.2 Q795.6 769.4 795.5 759 Q795.4 748.6 794.2 741.6 L793.1 734.6"/>
<path d="M938.6 754 Q931.3 767.9 929.2 776.9 Q927.2 785.9 928.2 795.7 L929.1 805.5"/>
<path d="M930.9 851.6 Q916.9 854.4 907 855.8 Q897.2 857.2 891.8 858 Q886.4 858.9 880.4 856 Q874.3 853.1 869.2 849.8 L864 846.5"/>
<path d="M937.2 683.6 Q923.2 690.3 917.5 699.4 Q911.7 708.6 909 714.4 L906.3 720.1"/>
<path d="M900 744.3 Q918.9 741.1 927.2 734 L935.4 726.8"/>
<path d="M1020.2 749 Q1028.9 763.4 1032.5 768.6 Q1036.2 773.8 1041 780 Q1045.8 786.1 1053.7 790.2 Q1061.6 794.3 1067.8 798.3 L1074.1 802.2"/>
<path d="M1056.6 755.7 Q1044.1 752.8 1037.7 746.9 Q1031.4 741 1026.4 735.5 L1021.5 730"/>
<path d="M1080.9 827.3 Q1071.6 841.7 1070.9 852.3 Q1070.2 862.9 1070.5 868.9 L1070.7 874.9"/>
<path d="M1054.6 861.9 Q1061.8 875 1067.7 879.2 Q1073.6 883.4 1079.5 882.7 Q1085.3 882 1093.8 882.7 Q1102.2 883.4 1107.5 886.6 L1112.8 889.8"/>
<path d="M937.9 792.9 Q959.7 792.9 965.5 796.7 Q971.2 800.5 976.6 805.5 Q981.9 810.4 988.8 811.7 L995.7 813"/>
<path d="M861.8 784.1 Q853.1 771.3 847.8 762.9 Q842.5 754.4 835.4 749.6 Q828.4 744.8 822.5 740 Q816.7 735.2 807 732.8 L797.2 730.5"/>
<path d="M1034.3 841.3 Q1043.4 827.8 1046 820.8 Q1048.7 813.7 1052.5 808.5 Q1056.3 803.3 1062.1 796.6 L1067.8 790"/>
<path d="M944.1 842.3 Q944.8 853.7 943 859.8 Q941.2 865.9 940.6 874.8 Q940.1 883.6 943.3 888.9 Q946.6 894.2 953.2 896.9 Q959.9 899.7 963.3 907.2 L966.8 914.7"/>
<path d="M971.1 852.1 Q980.1 835.6 986.1 830.4 Q992.1 825.1 998.2 820.4 Q1004.2 815.7 1010.5 813.3 Q1016.7 810.9 1022.9 805.6 Q1029.2 800.4 1032.6 794.3 L1036.1 788.2"/>
<path d="M796.9 840 Q795.5 856.5 799.4 866.9 Q803.2 877.3 806.8 886.9 Q810.5 896.5 818.5 902.8 Q826.6 909 831.9 911.2 L837.2 913.4"/>
<path d="M948.5 836.3 Q944.9 852 941.8 859.7 Q938.7 867.3 935.8 876.6 Q932.9 885.8 932 896.6 Q931.1 907.3 931.9 918.2 L932.8 929.1"/>
<path d="M765.2 833.6 Q753.7 840.1 750.7 845.3 Q747.8 850.6 737.3 853.3 Q726.8 856.1 718.9 861.5 Q711.1 866.8 704.5 873.7 L698 880.5"/>
<path d="M769.2 723.3 Q757.7 725.8 752.2 728.4 Q746.8 730.9 741.5 728.8 Q736.2 726.7 727.4 722.9 L718.7 719.1"/>
<path d="M923.2 701.3 Q909.9 714.6 899.5 715.7 Q889.1 716.8 880.7 719.4 Q872.3 721.9 864 723.5 Q855.8 725.1 849.1 723.2 Q842.4 721.2 834 715.1 L825.6 709"/>
<path d="M955.2 848.7 Q955.5 862 950.1 869.1 Q944.6 876.1 945.1 884.7 L945.6 893.2"/>
<path d="M974.2 891.5 Q989.3 886.5 997.2 881.4 Q1005.1 876.2 1010.8 875.5 Q1016.5 874.8 1023.5 868.6 Q1030.6 862.3 1032.4 855.6 L1034.2 848.9"/>
<path d="M867.9 692.3 Q875.4 680.2 876.5 673.2 Q877.6 666.2 876.9 656.3 Q876.3 646.3 879.2 640.2 Q882.1 634 888.8 630.2 Q895.4 626.3 900.7 616.9 L905.9 607.5"/>
<path d="M769.1 822.3 Q765.5 800.9 768.9 794.4 Q772.4 787.9 780.6 783.3 Q788.8 778.7 795.9 773.2 L802.9 767.8"/>
<path d="M1070.3 854.9 Q1061.7 870.2 1060.4 876.6 Q1059 883 1054.5 889.7 Q1050.1 896.4 1043.4 903.2 L1036.6 910.1"/>
<path d="M837.3 746.4 Q850.4 738.4 858.2 737.6 Q866 736.8 871.4 736.3 Q876.8 735.8 883 732.2 L889.3 728.6"/>
<path d="M791.9 742.8 Q784 733.1 784 722.4 Q783.9 711.6 785.7 702.9 Q787.4 694.2 781.9 689.5 L776.5 684.8"/>
<path d="M784.5 854.4 Q803.4 848.7 813.3 845.5 Q823.1 842.3 833.7 840.4 Q844.3 838.5 850.4 839.3 Q856.5 840 864.1 837.1 L871.6 834.2"/>
<path d="M1015.7 857.6 Q1016.3 875.5 1018.6 886 Q1020.8 896.5 1027.4 902.4 Q1034 908.3 1042.5 911.2 Q1050.9 914.2 1056.9 920.9 Q1062.9 927.6 1064.5 933.2 L1066 938.7"/>
<path d="M821 823.3 Q812.5 813.6 806.5 805.7 Q800.5 797.8 798.1 789.8 Q795.8 781.7 795.6 774.2 L795.5 766.8"/>
<path d="M843.4 790.8 Q829.1 785.3 817.9 785.4 Q806.6 785.5 796.7 785.8 Q786.8 786.1 779.9 791.1 Q773 796 770.4 805.9 Q767.9 815.8 768.7 822.7 L769.4 829.7"/>
<path d="M1132.6 727.8 Q1144.2 726.3 1149.7 725.1 L1155.3 723.9"/>
<path d="M1197.8 854.7 Q1183.6 847.1 1173.8 845.8 Q1164 844.5 1157.7 844.6 Q1151.5 844.7 1145.8 847.7 L1140.2 850.7"/>
<path d="M1137.5 772.3 Q1124.9 769.7 1116.3 772.8 Q1107.6 775.8 1103.8 780 Q1100 784.2 1096.3 793.9 L1092.7 803.5"/>
<path d="M1165.8 764.7 Q1148.8 771 1142.4 775.6 Q1136.1 780.2 1125.9 782 Q1115.8 783.7 1108.6 781.9 L1101.3 780"/>
<path d="M1184.5 841.6 Q1180.7 857.5 1182 865 Q1183.3 872.5 1185.6 880.6 Q1187.9 888.8 1189.1 896.6 L1190.3 904.4"/>
<path d="M1127.1 882 Q1132.9 862.5 1133 855.2 Q1133.1 848 1131.1 843.1 Q1129.1 838.2 1127.4 828.2 Q1125.6 818.2 1128.7 809.9 Q1131.9 801.5 1137.5 796.8 L1143.1 792.1"/>
<path d="M1160.2 896.4 Q1172.5 887.9 1177.1 881.2 Q1181.8 874.4 1188.3 871 Q1194.7 867.6 1202.7 863.3 L1210.7 858.9"/>
<path d="M1171.9 780.4 Q1174.1 760.2 1174.5 749.7 L1175 739.2"/>
<path d="M1097.8 887.7 Q1104.1 871.4 1106.5 865.2 Q1109 858.9 1106.7 848.7 Q1104.5 838.4 1103 829.3 Q1101.5 820.3 1096.5 813.2 L1091.5 806.1"/>
<path d="M1142 772.4 Q1139.5 785.2 1136.6 789.7 Q1133.7 794.3 1130 800.1 L1126.2 805.8"/>
<path d="M1140.5 837.9 Q1129 838.2 1123.1 835.3 Q1117.2 832.3 1110.9 832.8 Q1104.6 833.3 1095.6 836.5 Q1086.6 839.7 1080.3 843.9 L1073.9 848.1"/>
<path d="M1160.4 808.8 Q1150.7 798.4 1145.3 797.6 Q1139.8 796.8 1131.1 799.1 Q1122.3 801.4 1113.4 805.1 Q1104.5 808.8 1098.4 817.4 L1092.2 826.1"/>
<path d="M1090.1 761.9 Q1072.7 766.3 1066.5 766.7 Q1060.2 767.2 1052.4 769.8 Q1044.7 772.4 1035.7 771.1 Q1026.8 769.9 1021 766.6 Q1015.2 763.4 1006.3 762.5 L997.3 761.5"/>
<path d="M1158.6 900 Q1146.7 906.5 1139.4 909 Q1132.1 911.5 1127.8 919.5 Q1123.4 927.5 1117.3 929.4 L1111.2 931.3"/>
<path d="M1145.6 867 Q1124.7 868.6 1118.9 875.8 Q1113.1 883 1107.5 887.9 L1101.9 892.8"/>
<path d="M1130.7 740.4 Q1113.3 734.2 1107.5 733.2 Q1101.8 732.2 1093.9 733.7 Q1086 735.3 1081.4 739.5 L1076.9 743.7"/>
<path d="M1100.4 833.1 Q1105.8 848.7 1107.9 853.5 Q1110 858.3 1109.9 863.4 Q1109.8 868.5 1111.1 878.4 L1112.4 888.3"/>
<path d="M763.3 770.8 Q775.5 777.2 782.6 783.1 Q789.7 788.9 799.9 792.9 Q810.1 797 813.8 806.1 Q817.5 815.3 818.6 820.5 L819.7 825.6"/>
<path d="M688.2 705 Q705.1 702.9 715.5 701.5 Q725.9 700.2 734.9 697.3 Q743.9 694.5 751.6 688.6 Q759.3 682.8 763.5 674.6 L767.6 666.5"/>
<path d="M746 852.4 Q762.4 845.5 767.6 845.8 Q772.9 846.1 780 843.5 Q787.1 841 797.2 840 Q807.4 839.1 814.7 839.5 Q822 839.9 827.8 843.3 L833.5 846.6"/>
<path d="M703.3 846.4 Q706.7 858.6 710.7 864.1 Q714.7 869.5 718.5 875.1 Q722.2 880.7 728.1 885.6 L733.9 890.4"/>
<path d="M759.7 724.5 Q763.4 707.4 763 696.3 Q762.7 685.3 762.3 674.6 Q761.9 663.9 764 656.9 Q766.2 649.9 775.1 644.4 L784 638.8"/>
<path d="M720.7 680.3 Q725.4 664.1 727.2 654.7 Q729 645.4 730.4 634.5 Q731.8 623.6 728 614.6 Q724.1 605.6 720.3 596.4 Q716.5 587.3 712.9 579.8 L709.4 572.3"/>
<path d="M676.7 886.9 Q659 885.1 654.4 879.9 Q649.8 874.6 648.1 867.7 Q646.4 860.7 648.2 853.2 Q650 845.6 653.6 836.7 Q657.3 827.8 661.3 819.5 L665.3 811.3"/>
<path d="M732 890.9 Q743.2 881.3 751.4 877.9 Q759.7 874.4 767.6 873.5 L775.5 872.6"/>
<path d="M751.8 722.5 Q758.7 741 761.4 750.3 Q764.1 759.6 763.4 768.1 Q762.7 776.7 756.6 781.5 L750.5 786.4"/>
<path d="M706.2 700.8 Q714.5 711.4 721.1 715 Q727.7 718.6 732 725.5 Q736.3 732.4 744.7 736 Q753 739.5 764 741.4 L775 743.3"/>
<path d="M723.9 903.8 Q705.4 914.1 699.2 915.8 Q693 917.5 686.9 916.6 Q680.8 915.6 674.9 919 Q669 922.5 662.4 927.3 L655.8 932.1"/>
<path d="M673.5 693.7 Q668.8 706.1 671.2 713.1 Q673.6 720 675 725.8 Q676.3 731.7 680.1 737.9 Q683.9 744.1 690.1 748 L696.2 751.8"/>
<path d="M684 877.1 Q699.9 875.8 709.5 873.9 Q719.1 872 724.4 869.8 L729.6 867.6"/>
<path d="M698.4 778.1 Q708.8 777 714.3 771 Q719.8 765.1 727.1 763.5 Q734.5 762 742 754.9 Q749.6 747.8 751.7 740.1 L753.8 732.3"/>
<path d="M691.9 857.4 Q709 863.2 715.2 867.6 Q721.5 871.9 724.8 878.6 L728 885.4"/>
<path d="M715.2 749.8 Q718.8 727.3 718.9 718.1 Q719 708.9 722.3 703.6 L725.7 698.3"/>
</g>
<path d="M941.9 675 L941.9 678.1 L947 695.3 L962.3 710.6 L980.1 718.2 L992.8 708 L1000.4 700.4 L1001.7 715.7 L987.7 730.9 L982.6 738.5 L992.8 743.6 L1008 733.5 L1028.4 720.8 L1043.6 729.7 L1053.8 733.5 L1069 725.8 L1084 725.8 L1084 675Z" fill="#8fd9ef"/>
<path d="M1084 675 L1084 710.6 L1099.3 713.1 L1117 720.8 L1142.5 730.9 L1150.1 746.2 L1167.9 761.4 L1180.6 776.7 L1188.2 786.8 L1185.7 807.2 L1188.2 817.3 L1173 827.5 L1195.8 827.5 L1206 847.9 L1221.3 873.3 L1236.5 891.1 L1241.6 905 L1366.2 905 L1366.2 675Z" fill="#8fd9ef"/>
<path d="M64 222.2 L439.6 235.8" stroke="#7d8791" stroke-width=".9" stroke-dasharray="3 3" fill="none"/>
<g fill="none" stroke-linecap="round" stroke-linejoin="round">
<path d="M158.8 184.7 Q168.5 192.5 173.4 196.8 Q178.3 201 184.4 203.4 Q190.4 205.9 197.7 211.4 Q205 216.8 212.3 224.1 Q219.6 231.4 226.9 237.5 Q234.2 243.6 241.5 249 Q248.8 254.5 259.7 255.1 Q270.7 255.7 278 255.5 Q285.2 255.2 291.3 258.5 Q297.4 261.8 303.5 267.9 Q309.6 274 316.2 277.6 Q322.9 281.3 328.4 277.6 Q333.9 274 342.4 270.7 Q350.9 267.4 359.4 266.7 Q367.9 265.9 374 268.1 Q380.1 270.3 384.9 272.7 Q389.8 275.2 397.1 278.8 Q404.4 282.5 411.7 286.1 Q419 289.8 429.3 293.4 L439.6 297.1" stroke="#909fc4" stroke-width="2.2"/>
<path d="M134.5 122 Q133.3 136.6 131.5 141.5 Q129.6 146.3 128.7 163.3 Q127.7 180.4 128.7 187.6 Q129.6 194.9 133.3 198.6 Q136.9 202.2 140.6 210.7 Q144.2 219.3 147.3 225.3 Q150.3 231.4 149.7 237.5 Q149.1 243.6 146.7 248.4 Q144.2 253.3 134.5 257.5 L124.8 261.8" stroke="#909fc4" stroke-width="2"/>
<path d="M64 168.2 Q68.9 174.3 73.7 182.2 Q78.6 190.1 82.2 197.4 Q85.9 204.7 90.7 212 Q95.6 219.3 101.7 226.5 Q107.8 233.8 110.2 241.1 Q112.6 248.4 113.8 255.1 Q115.1 261.8 117.5 262.4 Q119.9 263 128.4 264.8 Q136.9 266.7 141.8 270.9 Q146.7 275.2 151.5 278.8 Q156.4 282.5 164.9 287.3 Q173.4 292.2 184.4 296.4 Q195.3 300.7 202.6 301.9 Q209.9 303.1 219.6 305.6 Q229.3 308 237.8 312.3 Q246.3 316.5 252.4 322.6 Q258.5 328.7 261.5 335.3 L264.6 342" stroke="#909fc4" stroke-width="2.2"/>
<path d="M115.1 263 Q100.5 272.7 98 280 Q95.6 287.3 95 297.1 Q94.4 306.8 96.2 317.7 Q98 328.7 99.3 335.3 L100.5 342" stroke="#909fc4" stroke-width="2"/>
<path d="M64 157.3 Q78.6 158 82.8 157.7 L87.1 157.5" stroke="#909fc4" stroke-width="1.8"/>
<path d="M64 383.3 Q88.3 382.8 98 384.3 Q107.8 385.8 115.1 390 Q122.4 394.3 128.4 396.7 Q134.5 399.1 141.8 396.7 Q149.1 394.3 157.6 390.6 Q166.1 387 173.4 388.8 Q180.7 390.6 190.4 391.8 Q200.2 393.1 209.9 395.5 Q219.6 397.9 226.9 401.6 Q234.2 405.2 241.5 406.4 Q248.8 407.6 259.7 406.7 Q270.7 405.7 276.7 405.2 Q282.8 404.7 290.1 405.9 Q297.4 407.2 304.7 406.4 Q312 405.7 316.9 403.6 Q321.7 401.6 327.8 402.2 Q333.9 402.8 340 402.8 Q346 402.8 350.9 407 Q355.8 411.3 361.8 415.5 Q367.9 419.8 372.8 425.3 Q377.6 430.7 380.1 433.8 Q382.5 436.8 387.4 436.2 Q392.2 435.6 396.5 436.2 Q400.7 436.8 406.2 438 Q411.7 439.3 420.2 440.5 Q428.7 441.7 434.2 440.5 L439.6 439.3" stroke="#909fc4" stroke-width="3.1"/>
<path d="M380.1 438 Q383.7 451.4 383.1 461.1 Q382.5 470.9 381.3 479.4 Q380.1 487.9 375.2 494 Q370.3 500 364.3 504.9 Q358.2 509.8 353.3 515.8 Q348.5 521.9 343.6 528 Q338.7 534.1 333.9 540.2 Q329 546.2 326.6 554.1 L324.2 562" stroke="#909fc4" stroke-width="2.7"/>
<path d="M324.2 374.8 Q333.9 385.8 340 393.1 Q346 400.4 349.7 407.6 Q353.3 414.9 353.9 424.7 Q354.5 434.4 356.4 439.3 Q358.2 444.1 360.6 450.2 Q363.1 456.3 361.2 464.8 Q359.4 473.3 360.6 480.6 Q361.8 487.9 362.4 495.2 Q363.1 502.5 361.2 509.8 Q359.4 517.1 355.2 524.3 Q350.9 531.6 346 538.9 Q341.2 546.2 342.4 554.1 L343.6 562" stroke="#909fc4" stroke-width="2"/>
<path d="M263.4 342 Q270.7 356.6 276.7 361.5 Q282.8 366.3 287.1 371.2 Q291.3 376 295.6 374.2 L299.8 372.4" stroke="#909fc4" stroke-width="2"/>
<path d="M100.5 342 Q93.2 349.3 85.9 355.4 Q78.6 361.5 71.3 368.7 L64 376" stroke="#909fc4" stroke-width="2"/>
<path d="M264.6 317.7 Q258.5 329.8 260.9 335.9 L263.4 342" stroke="#909fc4" stroke-width="2"/>
<path d="M322.9 562 Q309.6 574.2 307.7 582.7 Q305.9 591.2 306.5 600.9 Q307.1 610.6 312 619.1 Q316.9 627.6 319.3 633.7 Q321.7 639.8 319.3 649.5 Q316.9 659.3 315 667.8 Q313.2 676.3 315.6 682.4 Q318.1 688.4 319.9 695.7 Q321.7 703 322.3 710.3 Q322.9 717.6 321.1 724.9 Q319.3 732.2 313.2 739.5 Q307.1 746.8 302.3 755.3 Q297.4 763.8 293.8 772.9 L290.1 782" stroke="#909fc4" stroke-width="2.7"/>
<path d="M343.6 562 Q340 581.5 336.9 592.4 Q333.9 603.3 331.4 614.3 Q329 625.2 326.6 634.9 Q324.2 644.7 321.7 654.4 Q319.3 664.1 318.1 673.8 Q316.9 683.6 318.1 690.9 L319.3 698.2" stroke="#909fc4" stroke-width="2"/>
<path d="M321.7 688.4 Q338.7 686 347.2 683.6 Q355.8 681.1 363.1 675.1 Q370.3 669 375.2 662.9 Q380.1 656.8 386.1 653.2 Q392.2 649.5 396.5 648.3 Q400.7 647.1 408.6 644.7 Q416.5 642.2 425.1 639.8 Q433.6 637.4 438.8 634.9 L444 632.5" stroke="#909fc4" stroke-width="2.7"/>
<path d="M98 763.8 Q124.8 754.1 136.9 749.2 Q149.1 744.3 158.8 738.3 Q168.5 732.2 177.1 728.5 Q185.6 724.9 191.6 724.9 Q197.7 724.9 203.8 728.5 Q209.9 732.2 222 734 Q234.2 735.8 250 737.1 Q265.8 738.3 270.7 739.5 Q275.5 740.7 284 738.3 Q292.5 735.8 299.8 731.6 Q307.1 727.3 314.4 718.8 Q321.7 710.3 332.7 707.9 Q343.6 705.4 355.8 704.2 Q367.9 703 378.9 702.4 Q389.8 701.8 399.5 700.6 Q409.2 699.4 419 697.5 Q428.7 695.7 436.4 695.5 L444 695.2" stroke="#909fc4" stroke-width="2.2"/>
<path d="M321.7 732.2 Q343.6 746.8 355.8 740.7 Q367.9 734.6 374 732.2 Q380.1 729.8 388.6 727.3 Q397.1 724.9 406.8 716.4 Q416.5 707.9 422.6 698.2 Q428.7 688.4 433.6 676.3 Q438.4 664.1 441.2 659.3 L444 654.4" stroke="#909fc4" stroke-width="2.2"/>
<path d="M64 588.7 Q73.7 586.3 77.4 583.9 Q81 581.5 79.8 571.7 L78.6 562" stroke="#909fc4" stroke-width="1.8"/>
<path d="M64 763.8 Q78.6 768.7 83.5 775.3 L88.3 782" stroke="#909fc4" stroke-width="1.8"/>
<path d="M64 855.5 Q93.9 854.5 108.8 855 Q123.7 855.5 133.7 850.5 Q143.7 845.6 150.6 842.6 Q157.6 839.6 161.6 838.6 Q165.6 837.6 174.5 835.6 Q183.5 833.6 193.5 828.6 Q203.4 823.6 213.4 817.7 Q223.3 811.7 233.3 807.7 Q243.2 803.7 253.2 800.7 Q263.2 797.8 269.1 795.8 Q275.1 793.8 279.1 788.8 Q283.1 783.8 293 781.8 Q303 779.8 313 778.3 Q322.9 776.8 332.9 773.4 Q342.8 769.9 352.8 765.9 Q362.7 761.9 377.7 758.9 Q392.6 755.9 407.6 754.9 Q422.5 753.9 433.2 753.9 L444 753.9" stroke="#909fc4" stroke-width="2.9"/>
<path d="M173.5 842.6 Q193.5 843.6 203.4 841.6 Q213.4 839.6 223.3 835.6 Q233.3 831.6 238.3 825.6 Q243.2 819.7 248.2 817.7 Q253.2 815.7 258.2 810.7 Q263.2 805.7 269.1 802.7 Q275.1 799.7 284.1 798.8 L293 797.8" stroke="#909fc4" stroke-width="2.2"/>
<path d="M281.1 797.8 Q284.1 809.7 283.6 816.7 Q283.1 823.6 280.1 829.6 Q277.1 835.6 275.1 843.6 Q273.1 851.5 273.6 859.5 Q274.1 867.5 274.6 875.4 Q275.1 883.4 273.1 889.4 Q271.1 895.3 269.1 900.1 L267.1 904.9" stroke="#909fc4" stroke-width="2.7"/>
<path d="M328.9 748 Q332.9 769.9 337.8 778.8 Q342.8 787.8 346.8 795.8 Q350.8 803.7 354.8 809.7 Q358.8 815.7 366.7 822.7 Q374.7 829.6 381.7 838.6 Q388.6 847.5 392.6 853.5 Q396.6 859.5 395.6 867.5 Q394.6 875.4 396.6 883.4 Q398.6 891.4 401.6 898.1 L404.6 904.9" stroke="#909fc4" stroke-width="2.3"/>
<path d="M311 740 Q303 751.9 299 759.9 Q295 767.9 291 775.8 Q287.1 783.8 284.1 790.8 L281.1 797.8" stroke="#909fc4" stroke-width="2.7"/>
<path d="M320.9 740 Q330.9 751.9 331.4 760.9 Q331.9 769.9 327.4 773.4 L322.9 776.8" stroke="#909fc4" stroke-width="2.2"/>
<path d="M330.9 769.9 Q352.8 757.9 359.8 752.9 Q366.7 748 370.7 744 L374.7 740" stroke="#909fc4" stroke-width="2"/>
<path d="M64 763.9 Q75.9 764.9 80.9 767.4 L85.9 769.9" stroke="#909fc4" stroke-width="1.8"/>
<path d="M85.9 905.3 Q91.9 891.4 97.9 885.4 Q103.8 879.4 113.8 873.4 L123.7 867.5" stroke="#909fc4" stroke-width="1.8"/>
<path d="M506.3 678.1 Q507.5 700.4 509.5 709.3 Q511.4 718.2 514.5 730.9 Q517.7 743.6 521.5 757.6 Q525.3 771.6 531.7 784.3 Q538.1 797 546.9 808.5 Q555.8 819.9 563.5 828.8 Q571.1 837.7 573.6 847.9 Q576.2 858 581.3 868.2 Q586.3 878.4 590.8 882.2 Q595.2 886 601 889.8 Q606.7 893.6 613 899.3 L619.4 905" stroke="#909fc4" stroke-width="2.9"/>
<path d="M566 687.7 Q545.7 697.9 536.8 701.7 Q527.9 705.5 520.3 709.3 Q512.6 713.1 502.5 722 Q492.3 730.9 483.4 738.5 Q474.5 746.2 465.6 750 Q456.7 753.8 450.4 754.4 L444 755.1" stroke="#909fc4" stroke-width="2.3"/>
<path d="M444 694.1 Q477 690.3 492.3 688.3 Q507.5 686.4 526.6 685.8 Q545.7 685.2 560.9 683.9 Q576.2 682.6 588.9 680.7 Q601.6 678.8 611.8 676.9 L621.9 675" stroke="#909fc4" stroke-width="2.9"/>
<path d="M698.2 713.1 Q672.8 728.4 669 733.5 Q665.1 738.5 658.8 744.9 Q652.4 751.3 648.6 755.1 Q644.8 758.9 638.5 762.7 Q632.1 766.5 625.7 770.3 Q619.4 774.1 615.6 784.3 Q611.8 794.5 604.1 800.8 Q596.5 807.2 588.9 812.3 Q581.3 817.3 576.2 823.7 Q571.1 830.1 563.5 833.9 Q555.8 837.7 548.2 845.3 Q540.6 852.9 534.2 860.6 Q527.9 868.2 520.3 877.1 Q512.6 886 503.7 891.1 Q494.8 896.1 485.9 900.6 L477 905" stroke="#909fc4" stroke-width="2.2"/>
<path d="M698.2 713.1 Q713.4 695.3 722.3 686.7 L731.2 678.1" stroke="#909fc4" stroke-width="2.2"/>
<path d="M672.8 678.1 Q682.9 695.3 677.9 704.2 Q672.8 713.1 669 723.3 Q665.1 733.5 669 746.2 Q672.8 758.9 674 770.3 Q675.3 781.8 671.5 790.7 Q667.7 799.6 670.2 809.7 Q672.8 819.9 676.6 831.3 Q680.4 842.8 688 852.9 Q695.7 863.1 700.7 873.3 Q705.8 883.4 709.6 894.2 L713.4 905" stroke="#909fc4" stroke-width="2.2"/>
<path d="M764 888.5 Q749 898.7 745.2 901.9 L741.4 905" stroke="#909fc4" stroke-width="2.2"/>
<path d="M784.3 678.1 Q797 695.3 799.6 701.7 Q802.1 708 797 715.7 Q792 723.3 794.5 730.9 Q797 738.5 805.9 744.9 Q814.8 751.3 825 757.6 Q835.2 764 842.8 770.3 Q850.4 776.7 858.1 778.6 Q865.7 780.5 878.4 780.5 Q891.1 780.5 901.3 779.2 Q911.4 777.9 919.1 773.5 Q926.7 769.1 934.3 762.7 Q941.9 756.3 948.3 755.7 Q954.6 755.1 958.5 759.5 Q962.3 764 963.5 767.8 L964.8 771.6" stroke="#909fc4" stroke-width="2.9"/>
<path d="M941.9 756.3 Q939.4 743.6 934.3 734.7 Q929.2 725.8 924.1 715.7 Q919.1 705.5 922.9 697.9 Q926.7 690.3 925.4 684.2 L924.1 678.1" stroke="#909fc4" stroke-width="2.7"/>
<path d="M964.8 771.6 Q980.1 784.3 992.8 789.4 Q1005.5 794.5 1018.2 803.4 Q1030.9 812.3 1043.6 818.6 Q1056.3 825 1070.2 830.1 L1084 835.1" stroke="#909fc4" stroke-width="2.7"/>
<path d="M850.4 776.7 Q840.3 791.9 835.2 799.6 Q830.1 807.2 822.5 816.1 Q814.8 825 805.9 832.6 Q797 840.2 789.4 849.1 Q781.8 858 778 868.2 Q774.2 878.4 776.7 891.7 L779.3 905" stroke="#909fc4" stroke-width="2.9"/>
<path d="M814.8 751.3 Q814.8 776.7 812.3 789.4 Q809.8 802.1 805.9 814.8 Q802.1 827.5 795.8 837.7 Q789.4 847.9 780.5 860.6 Q771.6 873.3 767.8 875.8 L764 878.4" stroke="#909fc4" stroke-width="2"/>
<path d="M897.5 784.3 Q901.3 807.2 903.8 819.9 Q906.3 832.6 908.9 850.4 Q911.4 868.2 912.7 886.6 L914 905" stroke="#909fc4" stroke-width="2.7"/>
<path d="M865.7 780.5 Q865.7 758.9 869.5 751.3 Q873.3 743.6 878.4 730.9 Q883.5 718.2 884.7 709.3 Q886 700.4 887.3 689.2 L888.6 678.1" stroke="#909fc4" stroke-width="2.2"/>
<path d="M865.7 780.5 Q870.8 812.3 874.6 830.1 L878.4 847.9" stroke="#909fc4" stroke-width="1.4"/>
<path d="M886 715.7 Q903.8 730.9 904.4 753.8 L905.1 776.7" stroke="#909fc4" stroke-width="2"/>
<path d="M980.1 734.7 Q997.9 738.5 1008 736 Q1018.2 733.5 1033.4 731.6 Q1048.7 729.7 1058.9 732.8 Q1069 736 1076.5 736.6 L1084 737.3" stroke="#909fc4" stroke-width="2"/>
<path d="M878.4 678.1 Q891.1 695.3 898.7 697.9 Q906.3 700.4 916.5 695.3 L926.7 690.3" stroke="#909fc4" stroke-width="2"/>
<path d="M926.7 690.3 Q941.9 703 949.6 710.6 Q957.2 718.2 968.6 726.5 L980.1 734.7" stroke="#909fc4" stroke-width="2"/>
<path d="M1084 737.3 Q1099.3 743.6 1108.1 751.3 Q1117 758.9 1122.1 763.3 Q1127.2 767.8 1133.6 773.5 Q1139.9 779.2 1146.3 788.1 Q1152.6 797 1157.7 805.9 Q1162.8 814.8 1164.7 823.7 Q1166.6 832.6 1167.2 842.8 Q1167.9 852.9 1169.8 861.8 Q1171.7 870.7 1177.4 880.9 Q1183.1 891.1 1184.4 898.1 L1185.7 905" stroke="#909fc4" stroke-width="2.2"/>
<path d="M1084 835.1 Q1099.3 847.9 1108.1 854.8 Q1117 861.8 1125.9 868.8 Q1134.8 875.8 1143.7 883.4 Q1152.6 891.1 1157.7 898.1 L1162.8 905" stroke="#909fc4" stroke-width="2.7"/>
<path d="M64 383.3 Q88.3 382.8 98 384.3 Q107.8 385.8 115.1 390 Q122.4 394.3 128.4 396.7 Q134.5 399.1 141.8 396.7 Q149.1 394.3 157.6 390.6 Q166.1 387 173.4 388.8 Q180.7 390.6 190.4 391.8 Q200.2 393.1 209.9 395.5 Q219.6 397.9 226.9 401.6 Q234.2 405.2 241.5 406.4 Q248.8 407.6 259.7 406.7 Q270.7 405.7 276.7 405.2 Q282.8 404.7 290.1 405.9 Q297.4 407.2 304.7 406.4 Q312 405.7 316.9 403.6 Q321.7 401.6 327.8 402.2 Q333.9 402.8 340 402.8 Q346 402.8 350.9 407 Q355.8 411.3 361.8 415.5 Q367.9 419.8 372.8 425.3 Q377.6 430.7 380.1 433.8 Q382.5 436.8 387.4 436.2 Q392.2 435.6 396.5 436.2 Q400.7 436.8 406.2 438 Q411.7 439.3 420.2 440.5 Q428.7 441.7 434.2 440.5 L439.6 439.3" stroke="#bcc7e0" stroke-width="1.4"/>
<path d="M380.1 438 Q383.7 451.4 383.1 461.1 Q382.5 470.9 381.3 479.4 Q380.1 487.9 375.2 494 Q370.3 500 364.3 504.9 Q358.2 509.8 353.3 515.8 Q348.5 521.9 343.6 528 Q338.7 534.1 333.9 540.2 Q329 546.2 326.6 554.1 L324.2 562" stroke="#bcc7e0" stroke-width="1"/>
<path d="M322.9 562 Q309.6 574.2 307.7 582.7 Q305.9 591.2 306.5 600.9 Q307.1 610.6 312 619.1 Q316.9 627.6 319.3 633.7 Q321.7 639.8 319.3 649.5 Q316.9 659.3 315 667.8 Q313.2 676.3 315.6 682.4 Q318.1 688.4 319.9 695.7 Q321.7 703 322.3 710.3 Q322.9 717.6 321.1 724.9 Q319.3 732.2 313.2 739.5 Q307.1 746.8 302.3 755.3 Q297.4 763.8 293.8 772.9 L290.1 782" stroke="#bcc7e0" stroke-width="1"/>
<path d="M321.7 688.4 Q338.7 686 347.2 683.6 Q355.8 681.1 363.1 675.1 Q370.3 669 375.2 662.9 Q380.1 656.8 386.1 653.2 Q392.2 649.5 396.5 648.3 Q400.7 647.1 408.6 644.7 Q416.5 642.2 425.1 639.8 Q433.6 637.4 438.8 634.9 L444 632.5" stroke="#bcc7e0" stroke-width="1"/>
<path d="M64 855.5 Q93.9 854.5 108.8 855 Q123.7 855.5 133.7 850.5 Q143.7 845.6 150.6 842.6 Q157.6 839.6 161.6 838.6 Q165.6 837.6 174.5 835.6 Q183.5 833.6 193.5 828.6 Q203.4 823.6 213.4 817.7 Q223.3 811.7 233.3 807.7 Q243.2 803.7 253.2 800.7 Q263.2 797.8 269.1 795.8 Q275.1 793.8 279.1 788.8 Q283.1 783.8 293 781.8 Q303 779.8 313 778.3 Q322.9 776.8 332.9 773.4 Q342.8 769.9 352.8 765.9 Q362.7 761.9 377.7 758.9 Q392.6 755.9 407.6 754.9 Q422.5 753.9 433.2 753.9 L444 753.9" stroke="#bcc7e0" stroke-width="1.2"/>
<path d="M281.1 797.8 Q284.1 809.7 283.6 816.7 Q283.1 823.6 280.1 829.6 Q277.1 835.6 275.1 843.6 Q273.1 851.5 273.6 859.5 Q274.1 867.5 274.6 875.4 Q275.1 883.4 273.1 889.4 Q271.1 895.3 269.1 900.1 L267.1 904.9" stroke="#bcc7e0" stroke-width="1"/>
<path d="M328.9 748 Q332.9 769.9 337.8 778.8 Q342.8 787.8 346.8 795.8 Q350.8 803.7 354.8 809.7 Q358.8 815.7 366.7 822.7 Q374.7 829.6 381.7 838.6 Q388.6 847.5 392.6 853.5 Q396.6 859.5 395.6 867.5 Q394.6 875.4 396.6 883.4 Q398.6 891.4 401.6 898.1 L404.6 904.9" stroke="#bcc7e0" stroke-width="0.6"/>
<path d="M311 740 Q303 751.9 299 759.9 Q295 767.9 291 775.8 Q287.1 783.8 284.1 790.8 L281.1 797.8" stroke="#bcc7e0" stroke-width="1"/>
<path d="M506.3 678.1 Q507.5 700.4 509.5 709.3 Q511.4 718.2 514.5 730.9 Q517.7 743.6 521.5 757.6 Q525.3 771.6 531.7 784.3 Q538.1 797 546.9 808.5 Q555.8 819.9 563.5 828.8 Q571.1 837.7 573.6 847.9 Q576.2 858 581.3 868.2 Q586.3 878.4 590.8 882.2 Q595.2 886 601 889.8 Q606.7 893.6 613 899.3 L619.4 905" stroke="#bcc7e0" stroke-width="1.2"/>
<path d="M566 687.7 Q545.7 697.9 536.8 701.7 Q527.9 705.5 520.3 709.3 Q512.6 713.1 502.5 722 Q492.3 730.9 483.4 738.5 Q474.5 746.2 465.6 750 Q456.7 753.8 450.4 754.4 L444 755.1" stroke="#bcc7e0" stroke-width="0.6"/>
<path d="M444 694.1 Q477 690.3 492.3 688.3 Q507.5 686.4 526.6 685.8 Q545.7 685.2 560.9 683.9 Q576.2 682.6 588.9 680.7 Q601.6 678.8 611.8 676.9 L621.9 675" stroke="#bcc7e0" stroke-width="1.2"/>
<path d="M784.3 678.1 Q797 695.3 799.6 701.7 Q802.1 708 797 715.7 Q792 723.3 794.5 730.9 Q797 738.5 805.9 744.9 Q814.8 751.3 825 757.6 Q835.2 764 842.8 770.3 Q850.4 776.7 858.1 778.6 Q865.7 780.5 878.4 780.5 Q891.1 780.5 901.3 779.2 Q911.4 777.9 919.1 773.5 Q926.7 769.1 934.3 762.7 Q941.9 756.3 948.3 755.7 Q954.6 755.1 958.5 759.5 Q962.3 764 963.5 767.8 L964.8 771.6" stroke="#bcc7e0" stroke-width="1.2"/>
<path d="M941.9 756.3 Q939.4 743.6 934.3 734.7 Q929.2 725.8 924.1 715.7 Q919.1 705.5 922.9 697.9 Q926.7 690.3 925.4 684.2 L924.1 678.1" stroke="#bcc7e0" stroke-width="1"/>
<path d="M964.8 771.6 Q980.1 784.3 992.8 789.4 Q1005.5 794.5 1018.2 803.4 Q1030.9 812.3 1043.6 818.6 Q1056.3 825 1070.2 830.1 L1084 835.1" stroke="#bcc7e0" stroke-width="1"/>
<path d="M850.4 776.7 Q840.3 791.9 835.2 799.6 Q830.1 807.2 822.5 816.1 Q814.8 825 805.9 832.6 Q797 840.2 789.4 849.1 Q781.8 858 778 868.2 Q774.2 878.4 776.7 891.7 L779.3 905" stroke="#bcc7e0" stroke-width="1.2"/>
<path d="M897.5 784.3 Q901.3 807.2 903.8 819.9 Q906.3 832.6 908.9 850.4 Q911.4 868.2 912.7 886.6 L914 905" stroke="#bcc7e0" stroke-width="1"/>
<path d="M1084 835.1 Q1099.3 847.9 1108.1 854.8 Q1117 861.8 1125.9 868.8 Q1134.8 875.8 1143.7 883.4 Q1152.6 891.1 1157.7 898.1 L1162.8 905" stroke="#bcc7e0" stroke-width="1"/>
</g>
<g font-family="'Liberation Sans',sans-serif" fill="#464a4e" stroke="#fff" stroke-width="2.400" stroke-linejoin="round" paint-order="stroke" text-anchor="middle">
<text x="310" y="172.9" font-size="13.4">Greenville</text>
<text x="254.9" y="206.9" font-size="13.4">New Ipswich</text>
<text x="344.8" y="199.1" font-size="13.4">Mason</text>
<text x="406.8" y="208.6" font-size="13.4" text-anchor="start">Brookline</text>
<text x="125.3" y="260.9" font-size="13.4">Winchendon</text>
<text x="304.7" y="271.6" font-size="13.4">Ashby</text>
<text x="232.2" y="317.1" font-size="13.4">Ashburnham</text>
<text x="76.2" y="158.3" font-size="13.4" text-anchor="end">Fitzwilliam</text>
<text x="226.9" y="124.3" font-size="13.4">Sharon</text>
<text x="141.8" y="124.3" font-size="13.4">Jaffrey</text>
<text x="161.3" y="382.4" font-size="13.4">Gardner</text>
<text x="231.3" y="414.3" font-size="13.4">Westminster</text>
<text x="318.1" y="373.9" font-size="13.4">Fitchburg</text>
<text x="351.6" y="437.4" font-size="13.4">Leominster</text>
<text x="155.2" y="493.3" font-size="13.4">Hubbardston</text>
<text x="83.5" y="411.1" font-size="13.4" text-anchor="end">Templeton</text>
<text x="91.2" y="549" font-size="13.4" text-anchor="end">Barre</text>
<text x="392.2" y="515.7" font-size="13.4" text-anchor="start">Lancaster</text>
<text x="412.9" y="548" font-size="13.4">Clinton</text>
<text x="201.9" y="606.3" font-size="13.4">Rutland</text>
<text x="124.3" y="624.6" font-size="13.4">Oakham</text>
<text x="269.4" y="625.5" font-size="13.4">Holden</text>
<text x="331.4" y="609.5" font-size="13.4">West Boylston</text>
<text x="100.5" y="663.5" font-size="13.4" text-anchor="end">New Braintree</text>
<text x="217.7" y="669.5" font-size="13.4">Paxton</text>
<text x="93.2" y="702.1" font-size="13.4">North</text>
<text x="93.7" y="715.5" font-size="13.4">Brookfield</text>
<text x="383.2" y="691.2" font-size="13.4">Shrewsbury</text>
<text x="318.1" y="723" font-size="15.5" font-weight="700">Worcester</text>
<text x="164.2" y="742.5" font-size="13.4">Spencer</text>
<text x="233" y="740.8" font-size="13.4">Leicester</text>
<text x="76.6" y="758.8" font-size="13.4" text-anchor="end">Brookfield</text>
<text x="183.9" y="859.6" font-size="13.4">Charlton</text>
<text x="291.6" y="796.1" font-size="13.4">Auburn</text>
<text x="351.4" y="798.9" font-size="13.4">Millbury</text>
<text x="411.1" y="782.1" font-size="13.4">Grafton</text>
<text x="348.8" y="843.7" font-size="13.4">Sutton</text>
<text x="441" y="842.1" font-size="13.4">Northbridge</text>
<text x="94.9" y="888.5" font-size="13.4">Sturbridge</text>
<text x="470" y="715.3" font-size="13.4">Westborough</text>
<text x="627" y="704.3" font-size="13.4">Framingham</text>
<text x="589.4" y="724.2" font-size="13.4">Ashland</text>
<text x="542.6" y="759.3" font-size="13.4">Hopkinton</text>
<text x="620.7" y="789.8" font-size="13.4">Holliston</text>
<text x="544.4" y="853.1" font-size="13.4">Milford</text>
<text x="582.5" y="912.5" font-size="13.4">Bellingham</text>
<text x="770.5" y="702.6" font-size="13.4">Needham</text>
<text x="759" y="847" font-size="13.4">Walpole</text>
<text x="826.8" y="742.5" font-size="13.4">Dedham</text>
<text x="801.6" y="795.9" font-size="13.4">Norwood</text>
<text x="845.3" y="834" font-size="13.4">Canton</text>
<text x="873.8" y="873.4" font-size="13.4">Stoughton</text>
<text x="928" y="830.2" font-size="13.4">Randolph</text>
<text x="958.5" y="781.4" font-size="13.4">Braintree</text>
<text x="959.2" y="734.3" font-size="13.4">Quincy</text>
<text x="1049.2" y="745" font-size="13.4">Hingham</text>
<text x="1028.4" y="864.2" font-size="13.4">Rockland</text>
<text x="1004.7" y="891.9" font-size="13.4">Abington</text>
<text x="1119.6" y="745.8" font-size="13.4">Cohasset</text>
<text x="1145.8" y="792.8" font-size="13.4">Scituate</text>
<text x="1106.9" y="835.5" font-size="13.4">Norwell</text>
</g>
<rect x="146.1" y="178.2" width="24.5" height="13" rx="5.500" fill="#fff" stroke="#3c4043" stroke-width="1"/>
<text x="158.3" y="188.3" font-size="10" text-anchor="middle" fill="#3c4043" font-family="'Liberation Sans',sans-serif">119</text>
<rect x="126.1" y="204.7" width="24.5" height="13" rx="5.500" fill="#fff" stroke="#3c4043" stroke-width="1"/>
<text x="138.4" y="214.8" font-size="10" text-anchor="middle" fill="#3c4043" font-family="'Liberation Sans',sans-serif">202</text>
<rect x="137.7" y="269.6" width="19" height="13" rx="5.500" fill="#fff" stroke="#3c4043" stroke-width="1"/>
<text x="147.2" y="279.7" font-size="10" text-anchor="middle" fill="#3c4043" font-family="'Liberation Sans',sans-serif">12</text>
<rect x="377.1" y="268.7" width="24.5" height="13" rx="5.500" fill="#fff" stroke="#3c4043" stroke-width="1"/>
<text x="389.3" y="278.8" font-size="10" text-anchor="middle" fill="#3c4043" font-family="'Liberation Sans',sans-serif">119</text>
<rect x="55.7" y="162.9" width="19" height="13" rx="5.500" fill="#fff" stroke="#3c4043" stroke-width="1"/>
<text x="65.2" y="173" font-size="10" text-anchor="middle" fill="#3c4043" font-family="'Liberation Sans',sans-serif">12</text>
<rect x="127.8" y="393.1" width="13.5" height="13" rx="5.500" fill="#fff" stroke="#3c4043" stroke-width="1"/>
<text x="134.5" y="403.2" font-size="10" text-anchor="middle" fill="#3c4043" font-family="'Liberation Sans',sans-serif">2</text>
<rect x="394" y="430.8" width="13.5" height="13" rx="5.500" fill="#fff" stroke="#3c4043" stroke-width="1"/>
<text x="400.7" y="440.9" font-size="10" text-anchor="middle" fill="#3c4043" font-family="'Liberation Sans',sans-serif">2</text>
<rect x="353.1" y="449.8" width="19" height="13" rx="5.500" fill="#fff" stroke="#3c4043" stroke-width="1"/>
<text x="362.6" y="459.9" font-size="10" text-anchor="middle" fill="#3c4043" font-family="'Liberation Sans',sans-serif">12</text>
<path d="M328.8 521.5 h19.9 v6 c0 5 -5 8 -9.9 10 c-5 -2 -9.9 -5 -9.9 -10z" fill="#3f6fc6"/>
<path d="M328.8 521.5 q5 -2 9.9 0 q5 -2 9.9 0 v3 h-19.9 z" fill="#d9534f"/>
<text x="338.7" y="534.4" font-size="9" font-weight="700" text-anchor="middle" fill="#fff" font-family="'Liberation Sans',sans-serif">190</text>
<rect x="269.3" y="734.9" width="13.5" height="13" rx="5.500" fill="#fff" stroke="#3c4043" stroke-width="1"/>
<text x="276" y="745" font-size="10" text-anchor="middle" fill="#3c4043" font-family="'Liberation Sans',sans-serif">9</text>
<rect x="383" y="695.3" width="13.5" height="13" rx="5.500" fill="#fff" stroke="#3c4043" stroke-width="1"/>
<text x="389.8" y="705.4" font-size="10" text-anchor="middle" fill="#3c4043" font-family="'Liberation Sans',sans-serif">9</text>
<rect x="387.1" y="718.4" width="19" height="13" rx="5.500" fill="#fff" stroke="#3c4043" stroke-width="1"/>
<text x="396.6" y="728.5" font-size="10" text-anchor="middle" fill="#3c4043" font-family="'Liberation Sans',sans-serif">20</text>
<path d="M390.8 639.3 h19.9 v6 c0 5 -5 8 -9.9 10 c-5 -2 -9.9 -5 -9.9 -10z" fill="#3f6fc6"/>
<path d="M390.8 639.3 q5 -2 9.9 0 q5 -2 9.9 0 v3 h-19.9 z" fill="#d9534f"/>
<text x="400.7" y="652.3" font-size="9" font-weight="700" text-anchor="middle" fill="#fff" font-family="'Liberation Sans',sans-serif">290</text>
<path d="M157.5 829.8 h16.1 v6 c0 5 -4 8 -8.1 10 c-4 -2 -8.1 -5 -8.1 -10z" fill="#3f6fc6"/>
<path d="M157.5 829.8 q4 -2 8.1 0 q4 -2 8.1 0 v3 h-16.1 z" fill="#d9534f"/>
<text x="165.6" y="842.8" font-size="9" font-weight="700" text-anchor="middle" fill="#fff" font-family="'Liberation Sans',sans-serif">90</text>
<path d="M263.8 858.3 h19.9 v6 c0 5 -5 8 -9.9 10 c-5 -2 -9.9 -5 -9.9 -10z" fill="#3f6fc6"/>
<path d="M263.8 858.3 q5 -2 9.9 0 q5 -2 9.9 0 v3 h-19.9 z" fill="#d9534f"/>
<text x="273.7" y="871.3" font-size="9" font-weight="700" text-anchor="middle" fill="#fff" font-family="'Liberation Sans',sans-serif">395</text>
<rect x="345.7" y="808.6" width="24.5" height="13" rx="5.500" fill="#fff" stroke="#3c4043" stroke-width="1"/>
<text x="358" y="818.7" font-size="10" text-anchor="middle" fill="#3c4043" font-family="'Liberation Sans',sans-serif">146</text>
<path d="M504.7 727.7 h19.9 v6 c0 5 -5 8 -9.9 10 c-5 -2 -9.9 -5 -9.9 -10z" fill="#3f6fc6"/>
<path d="M504.7 727.7 q5 -2 9.9 0 q5 -2 9.9 0 v3 h-19.9 z" fill="#d9534f"/>
<text x="514.7" y="740.7" font-size="9" font-weight="700" text-anchor="middle" fill="#fff" font-family="'Liberation Sans',sans-serif">495</text>
<path d="M585.3 878.2 h19.9 v6 c0 5 -5 8 -9.9 10 c-5 -2 -9.9 -5 -9.9 -10z" fill="#3f6fc6"/>
<path d="M585.3 878.2 q5 -2 9.9 0 q5 -2 9.9 0 v3 h-19.9 z" fill="#d9534f"/>
<text x="595.2" y="891.2" font-size="9" font-weight="700" text-anchor="middle" fill="#fff" font-family="'Liberation Sans',sans-serif">495</text>
<rect x="520.6" y="679.9" width="13.5" height="13" rx="5.500" fill="#fff" stroke="#3c4043" stroke-width="1"/>
<text x="527.4" y="690" font-size="10" text-anchor="middle" fill="#3c4043" font-family="'Liberation Sans',sans-serif">9</text>
<path d="M568.6 674.9 h16.1 v6 c0 5 -4 8 -8.1 10 c-4 -2 -8.1 -5 -8.1 -10z" fill="#3f6fc6"/>
<path d="M568.6 674.9 q4 -2 8.1 0 q4 -2 8.1 0 v3 h-16.1 z" fill="#d9534f"/>
<text x="576.7" y="687.8" font-size="9" font-weight="700" text-anchor="middle" fill="#fff" font-family="'Liberation Sans',sans-serif">90</text>
<rect x="682.3" y="715.5" width="19" height="13" rx="5.500" fill="#fff" stroke="#3c4043" stroke-width="1"/>
<text x="691.8" y="725.6" font-size="10" text-anchor="middle" fill="#3c4043" font-family="'Liberation Sans',sans-serif">16</text>
<rect x="634.8" y="752.4" width="19" height="13" rx="5.500" fill="#fff" stroke="#3c4043" stroke-width="1"/>
<text x="644.3" y="762.5" font-size="10" text-anchor="middle" fill="#3c4043" font-family="'Liberation Sans',sans-serif">16</text>
<rect x="863.6" y="732" width="24.5" height="13" rx="5.500" fill="#fff" stroke="#3c4043" stroke-width="1"/>
<text x="875.8" y="742.1" font-size="10" text-anchor="middle" fill="#3c4043" font-family="'Liberation Sans',sans-serif">138</text>
<path d="M889.1 774 h16.1 v6 c0 5 -4 8 -8.1 10 c-4 -2 -8.1 -5 -8.1 -10z" fill="#3f6fc6"/>
<path d="M889.1 774 q4 -2 8.1 0 q4 -2 8.1 0 v3 h-16.1 z" fill="#d9534f"/>
<text x="897.2" y="787" font-size="9" font-weight="700" text-anchor="middle" fill="#fff" font-family="'Liberation Sans',sans-serif">93</text>
<path d="M821.3 801.2 h16.1 v6 c0 5 -4 8 -8.1 10 c-4 -2 -8.1 -5 -8.1 -10z" fill="#3f6fc6"/>
<path d="M821.3 801.2 q4 -2 8.1 0 q4 -2 8.1 0 v3 h-16.1 z" fill="#d9534f"/>
<text x="829.3" y="814.2" font-size="9" font-weight="700" text-anchor="middle" fill="#fff" font-family="'Liberation Sans',sans-serif">95</text>
<rect x="1117.7" y="761.5" width="19" height="13" rx="5.500" fill="#fff" stroke="#3c4043" stroke-width="1"/>
<text x="1127.2" y="771.6" font-size="10" text-anchor="middle" fill="#3c4043" font-family="'Liberation Sans',sans-serif">3A</text>
<rect x="1111.1" y="855.3" width="13.5" height="13" rx="5.500" fill="#fff" stroke="#3c4043" stroke-width="1"/>
<text x="1117.8" y="865.4" font-size="10" text-anchor="middle" fill="#3c4043" font-family="'Liberation Sans',sans-serif">3</text>
</svg><!--MS1--><!--MU0--><div class="abs" style="left:448.4px;top:585.8px;width:52px;height:52px;border-radius:50%;background:rgba(124,58,237,.14)"></div>
<div class="abs" style="left:453.4px;top:590.8px;width:42px;height:42px;border-radius:50%;background:rgba(124,58,237,.28)"></div>
<div class="abs" style="left:459.4px;top:596.8px;width:30px;height:30px;border-radius:50%;background:rgba(124,58,237,.92)"></div>
<div class="t" style="left:459.4px;top:605px;width:30px;text-align:center;font-size:13px;font-weight:700;color:#fff">11</div>
<div class="abs" style="left:539.4px;top:560.2px;width:31.6px;height:22.5px;background:#fff;border-radius:3px"></div>
<svg class="abs" style="left:551.2px;top:582.2px" width="8" height="4" viewBox="0 0 8 4"><path d="M0 0h8L4 3.500z" fill="#fff"/></svg>
<div class="t" style="left:539.4px;top:564.5px;width:31.6px;text-align:center;font-size:14.500px;color:#1f2937">N/A</div>
<div class="abs" style="left:512px;top:579px;width:31.7px;height:22.5px;background:#fff;border-radius:3px"></div>
<svg class="abs" style="left:523.9px;top:601.0px" width="8" height="4" viewBox="0 0 8 4"><path d="M0 0h8L4 3.500z" fill="#fff"/></svg>
<div class="t" style="left:512px;top:583.2px;width:31.7px;text-align:center;font-size:14.500px;color:#1f2937">N/A</div>
<div class="abs mapbtn" style="left:22px;top:21px;width:85.500px;height:37px"></div>
<svg class="abs" style="left:34.5px;top:33px" width="14" height="14" viewBox="0 0 14 14" fill="none" stroke="#e5527a" stroke-width="1.300" stroke-linecap="round" stroke-linejoin="round"><path d="M.6 3.200C1.500 1.500 3 .8 4.200 1.500S2 5.500 1.300 8S2.500 10.300 3.600 9S6.500 4.800 9 4.800S11.700 6.200 11 8.500S9 12.800 7.500 12.600S6 11 6.800 9.800S10 7.500 12.700 7.400"/></svg>
<div class="t sb" id="mp_draw" style="left:58.5px;top:33.5px;font-size:13px;font-weight:400;color:#111827;letter-spacing:0.29px">Draw</div>
<div class="abs mapbtn" style="left:23px;top:600px;width:36.500px;height:35px"></div>
<svg class="abs" style="left:33px;top:609px" width="17" height="17" viewBox="0 0 17 17" fill="none" stroke="#1f2937" stroke-width="1.100" stroke-linejoin="round" stroke-linecap="round"><path d="M8.500 1.500l7 3.700-7 3.700-7-3.700z"/><path d="M1.500 8.500l7 3.700 7-3.700"/><path d="M1.500 11.800l7 3.700 7-3.700"/></svg>
<div class="abs mapbtn" style="left:23px;top:645.5px;width:36.500px;height:107.500px"></div>
<div class="abs" style="left:23px;top:681.5px;width:36.500px;height:1px;background:#e5e7eb"></div>
<div class="abs" style="left:23px;top:717.5px;width:36.500px;height:1px;background:#e5e7eb"></div>
<svg class="abs" style="left:35px;top:657px" width="12" height="12" viewBox="0 0 12 12" stroke="#1f2937" stroke-width="1.100" stroke-linecap="round"><path d="M6 .5v11M.5 6h11"/></svg>
<svg class="abs" style="left:35px;top:693.5px" width="12" height="12" viewBox="0 0 12 12" stroke="#1f2937" stroke-width="1.100" stroke-linecap="round"><path d="M.5 6h11"/></svg>
<svg class="abs" style="left:34px;top:728.5px" width="14" height="14" viewBox="0 0 14 14" fill="none" stroke="#1f2937" stroke-width="1.100" stroke-linejoin="round"><path d="M1 6.800L13 1.200 8.300 13.200 6.500 8z"/></svg>
<div class="t sb" id="mp_goog" style="left:12.0px;top:761px;font-size:19.500px;text-shadow:0 0 2px #fff,0 0 2px #fff;letter-spacing:-0.41px"><span style="color:#4285f4">G</span><span style="color:#ea4335">o</span><span style="color:#fbbc05">o</span><span style="color:#4285f4">g</span><span style="color:#34a853">l</span><span style="color:#ea4335">e</span></div>
<div class="abs" style="left:911px;top:770px;width:389px;height:13px;background:rgba(245,245,245,.72)"></div>
<div class="abs" style="left:1195px;top:770px;width:105px;height:13px;background:rgba(245,245,245,.55)"></div>
<div class="t at" id="mp_a1" style="left:915.5px;top:772px;letter-spacing:0.05px">Keyboard shortcuts</div>
<div class="t at" id="mp_a2" style="left:1024.5px;top:772px;letter-spacing:-0.00px">Map data ©2025 Google</div>
<div class="abs" style="left:1151px;top:773px;width:1px;height:9px;background:#6b7280"></div>
<div class="t at" id="mp_a3" style="left:1158.0px;top:772px;letter-spacing:0.17px">Terms</div>
<div class="t at" id="mp_a4" style="left:1201.2px;top:772px;letter-spacing:-0.02px">Report a map error</div><!--MU1-->
</div>

<!-- SIDEBAR -->
<div id="sidebar" class="abs">
<!--SB0--><div id="logo" class="abs"><svg width="44" height="44" viewBox="0 0 44 44"><circle cx="16" cy="10.5" r="4.4" fill="#6d28e8"/><rect x="11.5" y="17.5" width="9" height="20" fill="#6d28e8"/><circle cx="28" cy="32.5" r="4.7" fill="#e5527a"/></svg></div>
<!-- rocket -->
<svg class="abs" style="left:16px;top:78px" width="28" height="28" viewBox="0 0 28 28" fill="none" stroke="#fff" stroke-width="2.200" stroke-linecap="round" stroke-linejoin="round"><path d="M26.800 1.400C20 1.500 13.500 4.500 9.800 9.500L6.500 14.200L13.800 21.500L18.500 18.200C23.500 14.500 26.700 8.200 26.800 1.400Z"/><circle cx="17.600" cy="10" r="2.500"/><path d="M9.800 9.500L5 10L1.200 14.800L6.500 14.200"/><path d="M18.500 18.200L18 23L13.200 26.800L13.800 21.500"/><path d="M6.800 17.300C4 18 1.600 21 1.400 26.600C6.500 26.400 9.500 24 10.500 21"/></svg>
<div id="active" class="abs"></div>
<!-- globe search -->
<svg class="abs" style="left:17px;top:141px" width="27" height="27" viewBox="0 0 27 27" fill="none"><circle cx="12" cy="12" r="11" fill="#fff"/><g stroke="#5e22d3" stroke-width="1.700"><ellipse cx="12" cy="12" rx="4.600" ry="11"/><path d="M12 1v22M1 8.200h22M1 15.800h22"/></g><circle cx="18" cy="18.800" r="5.600" fill="#5e22d3"/><circle cx="17.800" cy="18.600" r="3.100" stroke="#fff" stroke-width="2"/><path d="M20.300 21.100l3.500 3.500" stroke="#fff" stroke-width="2.300" stroke-linecap="round"/></svg>
<div class="sep abs" style="top:190px"></div>
<!-- home -->
<svg class="abs" style="left:16px;top:213px" width="26" height="26" viewBox="0 0 29 30" fill="none" stroke="#fff" stroke-width="2.700" stroke-linecap="round" stroke-linejoin="round"><path d="M2 14L14.500 2.500 27 14"/><path d="M5.500 11.500V27.500h18V11.500"/><path d="M11.500 27.500v-7.500h6v7.500"/></svg>
<!-- people -->
<svg class="abs" style="left:17px;top:277px" width="25" height="21" viewBox="0 0 25 21" fill="none" stroke="#fff" stroke-width="2.200" stroke-linecap="round" stroke-linejoin="round"><circle cx="8.500" cy="5.500" r="3.300"/><path d="M1.500 19.500v-1.500c0-3 2.300-5 5-5h4c2.700 0 5 2 5 5v1.500z"/><path d="M15 1.600a4 4 0 0 1 0 7.800a6 6 0 0 0 0-7.800z" fill="#fff" stroke-width="1.500"/><path d="M17.500 12.500c3.500 .3 6 2.500 6 5.500v1.500h-4v-1.500c0-2.200-.8-4-2-5.500z" fill="#fff" stroke-width="1.200"/></svg>
<!-- dollar -->
<svg class="abs" style="left:15px;top:335px" width="28" height="28" viewBox="0 0 30 30" fill="none" stroke="#fff" stroke-width="2.300" stroke-linecap="round"><circle cx="15" cy="15" r="13"/><path d="M19 10.800c-.8-1.300-2.200-1.800-4-1.800-2.300 0-4 1.100-4 3s1.500 2.600 4 3 4 1.100 4 3-1.700 3-4 3c-1.800 0-3.200-.5-4-1.800"/><path d="M15 6.500v17"/></svg>
<div class="sep abs" style="top:384px"></div>
<!-- inbox -->
<svg class="abs" style="left:17px;top:409px" width="25" height="23" viewBox="0 0 28 27" fill="none" stroke="#fff" stroke-width="2.300" stroke-linecap="round" stroke-linejoin="round"><path d="M2 13.500L5.500 3.500c.3-1 1-1.500 2-1.500h13c1 0 1.700 .5 2 1.500L26 13.500v8.500c0 1.700-1.300 3-3 3H5c-1.700 0-3-1.300-3-3z"/><path d="M2 14h7c.5 2.500 2.500 4 5 4s4.500-1.500 5-4h7"/></svg>
<div class="abs" style="left:30px;top:392px;width:33px;height:17px;border-radius:9px;background:#ef4444"></div>
<div class="t" style="left:30px;top:394px;width:33px;text-align:center;font-size:12.500px;font-weight:700;color:#fff">99+</div>
<!-- contacts -->
<svg class="abs" style="left:17px;top:470px" width="26" height="26" viewBox="0 0 26 26" fill="none" stroke="#fff" stroke-width="2.200" stroke-linecap="round" stroke-linejoin="round"><rect x="4.500" y="1.500" width="19" height="23" rx="2.500"/><path d="M1.500 6.500h5M1.500 13h5M1.500 19.500h5"/><circle cx="14.500" cy="10" r="2.200" fill="#fff" stroke="none"/><path d="M10.500 17.500c.5-2.500 2-3.500 4-3.500s3.500 1 4 3.500z" fill="#fff" stroke="none"/></svg>
<div class="sep abs" style="top:517px"></div>
<!-- megaphone -->
<svg class="abs" style="left:18px;top:541px" width="24" height="24" viewBox="0 0 28 28" fill="none" stroke="#fff" stroke-width="2.300" stroke-linecap="round" stroke-linejoin="round"><path d="M24 2.500v19L7.500 17.500 3 15.500c-1.500-.8-1.500-4.500 0-5.300L7.500 8z"/><path d="M8.500 18l1.500 6.500c.3 1.200 1.500 1.700 2.500 1.200l.8-.4c.8-.4 1-1.200.8-2l-1.100-4"/></svg>
<!-- org -->
<svg class="abs" style="left:17px;top:605px" width="25" height="23" viewBox="0 0 27 24" fill="none" stroke="#fff" stroke-width="2.200" stroke-linecap="round" stroke-linejoin="round"><rect x="10.700" y="1.500" width="5.600" height="5.600" rx="1"/><rect x="1.500" y="17" width="5.600" height="5.600" rx="1"/><rect x="10.700" y="17" width="5.600" height="5.600" rx="1"/><rect x="19.900" y="17" width="5.600" height="5.600" rx="1"/><path d="M13.500 7.100v9.900M4.300 17v-5h18.400v5"/></svg>
<!-- chart -->
<svg class="abs" style="left:19px;top:664px" width="22" height="22" viewBox="0 0 26 27" fill="none" stroke="#fff" stroke-width="2.300" stroke-linecap="round" stroke-linejoin="round"><path d="M2 9.500l6.500-5.500 5 4 5-5.500 5.500 5"/><path d="M2 24.500l7.500-10 4.500 4.500 4.500-5 5.500 10.500z"/></svg>
<!-- dots -->
<svg class="abs" style="left:17px;top:733px" width="26" height="10" viewBox="0 0 26 10"><circle cx="4" cy="5" r="2.300" fill="#fff"/><circle cx="13" cy="5" r="2.300" fill="#fff"/><circle cx="22" cy="5" r="2.300" fill="#fff"/></svg>
<!--SB1-->
</div>

<!-- HEADER -->
<div id="header" class="abs">
<!--H0--><div class="t" id="h_title" style="left:18.5px;top:20.0px;font-size:17.500px;font-weight:700;color:#111827;letter-spacing:-0.31px">List Builder</div>
<svg class="abs" style="left:122px;top:17px" width="18" height="18" viewBox="0 0 18 18" fill="none" stroke="#4b5563" stroke-width="1.500"><circle cx="9" cy="9" r="8"/><path d="M9 8v5" stroke-linecap="round"/><circle cx="9" cy="5.300" r=".9" fill="#4b5563" stroke="none"/></svg>
<div class="box" style="left:658px;top:3px;width:462px;height:46px;border-color:#d1d5db"></div>
<svg class="abs" style="left:671px;top:17px" width="19" height="19" viewBox="0 0 19 19" fill="none" stroke="#6b7280" stroke-width="1.600" stroke-linecap="round"><circle cx="8" cy="8" r="6.500"/><path d="M12.800 12.800l4.700 4.700"/></svg>
<div class="t" id="h_ph" style="left:702.5px;top:18px;font-size:15px;color:#9ca3af;letter-spacing:0.13px">Search for properties and contacts</div>
<div class="abs" style="left:1636px;top:6px;width:91px;height:40px;border-radius:5px;background:#f3f4f6"></div>
<div class="t sb" id="h_bal" style="left:1644.5px;top:19px;font-size:14.500px;font-weight:400;color:#111827;letter-spacing:0.44px">$23.24</div>
<svg class="abs" style="left:1701px;top:18px" width="15" height="15" viewBox="0 0 15 15" fill="none" stroke="#6b7280" stroke-width="1.200"><circle cx="7.500" cy="7.500" r="6.500"/><path d="M7.500 6.800v4" stroke-linecap="round"/><circle cx="7.500" cy="4.500" r=".8" fill="#6b7280" stroke="none"/></svg>
<svg class="abs" style="left:1755px;top:14px" width="24" height="23" viewBox="0 0 24 23" fill="none" stroke="#374151" stroke-width="1.800" stroke-linejoin="round" stroke-linecap="round"><path d="M6.500 5V3c0-1 .7-1.700 1.700-1.700h12.600c1 0 1.700 .7 1.700 1.700v8.500c0 1-.7 1.700-1.700 1.700H19.500"/><path d="M3 5.800h13.500c1 0 1.700 .7 1.700 1.700v8c0 1-.7 1.700-1.700 1.700H8.500L4.500 21v-3.800H3c-1 0-1.700-.7-1.700-1.700v-8c0-1 .7-1.700 1.700-1.700z"/></svg>
<div class="abs" style="left:1806px;top:9px;width:35px;height:35px;border-radius:50%;background:#e5e7eb;border:1px solid #d1d5db"></div>
<div class="t" style="left:1806px;top:17px;width:35px;text-align:center;font-size:19px;color:#374151">S</div>
<!--H1-->
</div>

<!-- FILTER BAR -->
<div id="filterbar" class="abs">
<!--F0--><div class="box" style="left:9px;top:8px;width:407px;height:46px"></div>
<svg class="abs" style="left:29px;top:25px" width="15" height="15" viewBox="0 0 15 15" fill="none" stroke="#6b7280" stroke-width="1.300" stroke-linecap="round"><circle cx="6.300" cy="6.300" r="5.300"/><path d="M10.200 10.200l4 4"/></svg>
<div class="abs" style="left:54px;top:20px;width:175px;height:22px;border-radius:4px;background:#f3e8ff"></div>
<div class="t sb" id="f_tag" style="left:65.3px;top:25px;font-size:13px;font-weight:400;color:#4c1d95;letter-spacing:0.28px">Middlesex County, MA</div>
<svg class="abs" style="left:204px;top:25px" width="14" height="14" viewBox="0 0 14 14" fill="none" stroke="#5b21b6" stroke-width="1.200" stroke-linecap="round"><circle cx="7" cy="7" r="6"/><path d="M4.800 4.800l4.400 4.400M9.200 4.800l-4.400 4.400"/></svg>
<div class="t" id="f_ph" style="left:237.5px;top:24px;font-size:15px;color:#9ca3af;letter-spacing:-0.03px">Address, apn, city...</div>
<svg class="abs" style="left:382px;top:26px" width="12" height="12" viewBox="0 0 12 12" fill="none" stroke="#9ca3af" stroke-width="1.300" stroke-linecap="round"><path d="M1 1l10 10M11 1L1 11"/></svg>

<div class="box" style="left:421px;top:8px;width:186px;height:46px"></div>
<div class="t" id="f_ind" style="left:437.5px;top:24px;font-size:15px;color:#374151;letter-spacing:0.01px">Indicators <span style="color:#6d28d9">(1)</span></div>
<svg class="abs chev" style="left:578px;top:28px" width="14" height="8" viewBox="0 0 14 8" fill="none" stroke="#4b5563" stroke-width="1.300" stroke-linecap="round" stroke-linejoin="round"><path d="M1 1l6 6 6-6"/></svg>

<div class="box" style="left:612px;top:8px;width:187px;height:46px"></div>
<div class="t" id="f_pt" style="left:628.5px;top:24px;font-size:15px;color:#1f2937;letter-spacing:0.16px">Property types</div>
<svg class="abs chev" style="left:769px;top:28px" width="14" height="8" viewBox="0 0 14 8" fill="none" stroke="#4b5563" stroke-width="1.300" stroke-linecap="round" stroke-linejoin="round"><path d="M1 1l6 6 6-6"/></svg>

<div class="box" style="left:803px;top:8px;width:220px;height:46px"></div>
<div class="t" id="f_bb" style="left:820.0px;top:24px;font-size:15px;color:#1f2937;letter-spacing:0.01px">Beds / Baths</div>
<svg class="abs chev" style="left:993px;top:28px" width="14" height="8" viewBox="0 0 14 8" fill="none" stroke="#4b5563" stroke-width="1.300" stroke-linecap="round" stroke-linejoin="round"><path d="M1 1l6 6 6-6"/></svg>

<div class="box" style="left:1028px;top:8px;width:176px;height:46px"></div>
<div class="t" id="f_mv" style="left:1044.5px;top:24px;font-size:15px;color:#1f2937;letter-spacing:0.23px">Market value</div>
<svg class="abs chev" style="left:1174px;top:28px" width="14" height="8" viewBox="0 0 14 8" fill="none" stroke="#4b5563" stroke-width="1.300" stroke-linecap="round" stroke-linejoin="round"><path d="M1 1l6 6 6-6"/></svg>

<div class="box" style="left:1209px;top:8px;width:115px;height:46px"></div>
<svg class="abs" style="left:1231px;top:24px" width="17" height="16" viewBox="0 0 17 16" fill="none" stroke="#6d28d9" stroke-width="1.400" stroke-linejoin="round"><path d="M1.200 1.200h14.600L10.300 8v5.300l-3.600 1.500V8z"/></svg>
<div class="t" id="f_fl" style="left:1256.5px;top:24px;font-size:15px;font-weight:700;color:#6d28d9;letter-spacing:-0.00px">Filters</div>
<div class="abs" style="left:1305px;top:6px;width:21px;height:21px;border-radius:50%;background:#ef4444"></div>
<div class="t" style="left:1305px;top:11px;width:21px;text-align:center;font-size:11px;font-weight:700;color:#fff">6</div>
<div class="abs" style="left:1333px;top:8px;width:46px;height:46px;border-radius:50%;border:1px solid #d1d5db;background:#fff"></div>
<svg class="abs" style="left:1347px;top:23px" width="17" height="17" viewBox="0 0 17 17" fill="none" stroke="#111827" stroke-width="1.700" stroke-linecap="round" stroke-linejoin="round"><path d="M14.500 8.500a6 6 0 1 1-2-4.500"/><path d="M13.300 .8v3.700H9.600" /></svg>
<!--F1-->
</div>

<!-- RIGHT PANEL -->
<div id="panel" class="abs">
<!--P0--><div class="abs cb" style="left:21px;top:22px"></div>
<svg class="abs" style="left:58px;top:26px" width="14" height="8" viewBox="0 0 14 8" fill="none" stroke="#7c3aed" stroke-width="1.500" stroke-linecap="round" stroke-linejoin="round"><path d="M1 1l6 6 6-6"/></svg>
<div class="t" id="p_cnt" style="left:86.5px;top:23px;font-size:15px;color:#374151;letter-spacing:0.24px"><b style="color:#111827">0</b> of 180 properties</div>
<div class="abs" style="left:447px;top:9px;width:85px;height:42px;border-radius:4px;background:#b794f6"></div>
<div class="t" id="p_imp" style="left:464.9px;top:23.0px;font-size:16px;font-weight:700;color:#fff;letter-spacing:-0.06px">Import</div>
<div class="abs" style="left:0;top:59px;width:535px;height:7px;background:#f3f4f6;border-top:1px solid #e5e7eb;border-bottom:1px solid #e5e7eb"></div>
<div class="abs cb" style="left:21px;top:87.7px"></div>
<div class="t ct" id="c1_t" style="left:57.9px;top:87.7px;letter-spacing:0.08px">74 Acton St</div>
<div class="t ca" id="c1_a" style="left:57.9px;top:113.2px;letter-spacing:0.19px">Maynard, MA 01754</div>
<div class="t cv na" id="c1_v" style="left:484.5px;top:87.7px;letter-spacing:0.66px">N/A</div>
<div class="t ce" id="c1_e" style="left:462.8px;top:114.2px;letter-spacing:-0.14px">Est. Value</div>
<svg class="abs" style="left:21.5px;top:125.2px" width="17" height="17" viewBox="0 0 17 17" fill="none" stroke="#dcc5fb" stroke-width="1.200" stroke-linecap="round" stroke-linejoin="round"><circle cx="8.500" cy="8.500" r="7.700"/><path d="M5.300 8.800l2.200 2.200 4.200-4.500"/></svg>
<div class="t cd" id="c1_d1" style="left:57.9px;top:153.1px;letter-spacing:0.25px">Private Utility (electric, water, gas, nuclear,</div>
<div class="t cd" id="c1_d2" style="left:57.9px;top:175.0px;letter-spacing:0.23px">solar, wind, etc.)</div>
<div class="abs dot" style="left:401px;top:168.5px;width:3px;height:5px;border-radius:1.500px"></div>
<div class="t cd" id="c1_d3" style="left:417.0px;top:153.1px;letter-spacing:0.48px">Corporate-</div>
<div class="t cd" id="c1_d4" style="left:417.0px;top:175.0px;letter-spacing:0.66px">owned</div>
<div class="abs tag dk" style="left:58.4px;top:202.4px;width:92.3px"></div>
<div class="t tt dk" id="c1_g0" style="left:71.9px;top:210.4px;letter-spacing:0.51px">Off market</div>
<div class="abs tag" style="left:164.2px;top:202.4px;width:113.4px"></div>
<div class="t tt" id="c1_g1" style="left:173.5px;top:210.4px;letter-spacing:0.10px">Absentee owner</div>
<div class="abs tag" style="left:285.0px;top:202.4px;width:128.6px"></div>
<div class="t tt" id="c1_g2" style="left:294.5px;top:210.4px;letter-spacing:0.19px">Out of state owner</div>
<div class="abs tag" style="left:420.3px;top:202.4px;width:35.4px"></div>
<div class="t tt" id="c1_g3" style="left:430.2px;top:210.4px;letter-spacing:0.44px">+1</div>
<div class="abs" style="left:0;top:256.5px;width:535px;height:2px;background:#e5e7eb"></div>
<div class="abs cb" style="left:21px;top:281.6px"></div>
<div class="t ct" id="c2_t" style="left:57.9px;top:281.6px;letter-spacing:-0.07px">Adams Ave</div>
<div class="t ca" id="c2_a" style="left:57.9px;top:307.1px;letter-spacing:0.24px">Groton, MA 01450</div>
<div class="t cv na" id="c2_v" style="left:484.5px;top:281.6px;letter-spacing:0.66px">N/A</div>
<div class="t ce" id="c2_e" style="left:462.8px;top:308.1px;letter-spacing:-0.14px">Est. Value</div>
<svg class="abs" style="left:21.5px;top:319.1px" width="17" height="17" viewBox="0 0 17 17" fill="none" stroke="#dcc5fb" stroke-width="1.200" stroke-linecap="round" stroke-linejoin="round"><circle cx="8.500" cy="8.500" r="7.700"/><path d="M5.300 8.800l2.200 2.200 4.200-4.500"/></svg>
<div class="t cd" id="c2_d1" style="left:57.9px;top:347.2px;letter-spacing:0.11px">Unusable Land (Remnant, Steep, etc.)</div>
<div class="abs dot" style="left:330.3px;top:352.7px"></div>
<div class="t cd" id="c2_d3" style="left:348.2px;top:347.2px;letter-spacing:0.59px">Individual</div>
<div class="abs tag dk" style="left:58.4px;top:373.4px;width:92.3px"></div>
<div class="t tt dk" id="c2_g0" style="left:71.9px;top:381.4px;letter-spacing:0.51px">Off market</div>
<div class="abs tag" style="left:164.2px;top:373.4px;width:113.4px"></div>
<div class="t tt" id="c2_g1" style="left:173.5px;top:381.4px;letter-spacing:0.10px">Absentee owner</div>
<div class="abs tag" style="left:285.0px;top:373.4px;width:128.6px"></div>
<div class="t tt" id="c2_g2" style="left:294.5px;top:381.4px;letter-spacing:0.19px">Out of state owner</div>
<div class="abs tag" style="left:420.3px;top:373.4px;width:35.4px"></div>
<div class="t tt" id="c2_g3" style="left:430.2px;top:381.4px;letter-spacing:0.44px">+1</div>
<div class="abs" style="left:0;top:428.0px;width:535px;height:2px;background:#e5e7eb"></div>
<div class="abs cb" style="left:21px;top:452.7px"></div>
<div class="t ct" id="c3_t" style="left:57.9px;top:452.7px;letter-spacing:-0.45px">31 Adams St</div>
<div class="t ca" id="c3_a" style="left:57.9px;top:478.2px;letter-spacing:0.17px">Waltham, MA 02453</div>
<div class="t cv" id="c3_v" style="left:445.1px;top:452.7px;letter-spacing:-0.29px">$700,000</div>
<div class="t ce" id="c3_e" style="left:462.8px;top:479.2px;letter-spacing:-0.14px">Est. Value</div>
<svg class="abs" style="left:21.5px;top:490.2px" width="17" height="17" viewBox="0 0 17 17" fill="none" stroke="#dcc5fb" stroke-width="1.200" stroke-linecap="round" stroke-linejoin="round"><circle cx="8.500" cy="8.500" r="7.700"/><path d="M5.300 8.800l2.200 2.200 4.200-4.500"/></svg>
<div class="t cd" id="c3_d1" style="left:57.9px;top:518.2px;letter-spacing:0.21px">Residential-Vacant Land</div>
<div class="abs dot" style="left:237.5px;top:523.7px"></div>
<div class="t cd" id="c3_d3" style="left:255.5px;top:518.2px;letter-spacing:0.62px">Individual</div>
<div class="abs tag dk" style="left:58.4px;top:544.5px;width:92.3px"></div>
<div class="t tt dk" id="c3_g0" style="left:71.9px;top:552.5px;letter-spacing:0.51px">Off market</div>
<div class="abs tag" style="left:164.2px;top:544.5px;width:113.4px"></div>
<div class="t tt" id="c3_g1" style="left:173.5px;top:552.5px;letter-spacing:0.10px">Absentee owner</div>
<div class="abs tag" style="left:285.0px;top:544.5px;width:128.6px"></div>
<div class="t tt" id="c3_g2" style="left:294.5px;top:552.5px;letter-spacing:0.19px">Out of state owner</div>
<div class="abs tag" style="left:420.3px;top:544.5px;width:35.4px"></div>
<div class="t tt" id="c3_g3" style="left:430.2px;top:552.5px;letter-spacing:0.44px">+1</div>
<div class="abs" style="left:0;top:599.0px;width:535px;height:2px;background:#e5e7eb"></div>
<div class="abs cb" style="left:21px;top:623.7px"></div>
<div class="t ct" id="c4_t" style="left:57.9px;top:623.7px;letter-spacing:-0.03px">Annetta Rd</div>
<div class="t ca" id="c4_a" style="left:57.9px;top:649.2px;letter-spacing:0.07px">Ashland, MA 01721</div>
<div class="t cv na" id="c4_v" style="left:484.5px;top:623.7px;letter-spacing:0.66px">N/A</div>
<div class="t ce" id="c4_e" style="left:462.8px;top:650.2px;letter-spacing:-0.14px">Est. Value</div>
<svg class="abs" style="left:21.5px;top:661.2px" width="17" height="17" viewBox="0 0 17 17" fill="none" stroke="#dcc5fb" stroke-width="1.200" stroke-linecap="round" stroke-linejoin="round"><circle cx="8.500" cy="8.500" r="7.700"/><path d="M5.300 8.800l2.200 2.200 4.200-4.500"/></svg>
<div class="t cd" id="c4_d1" style="left:57.9px;top:689.1px;letter-spacing:0.11px">Unusable Land (Remnant, Steep, etc.)</div>
<div class="abs dot" style="left:330.3px;top:694.6px"></div>
<div class="t cd" id="c4_d3" style="left:348.2px;top:689.1px;letter-spacing:0.59px">Individual</div>
<div class="abs tag dk" style="left:58.4px;top:716.4px;width:92.3px"></div>
<div class="t tt dk" id="c4_g0" style="left:71.9px;top:724.4px;letter-spacing:0.51px">Off market</div>
<div class="abs tag" style="left:164.2px;top:716.4px;width:113.4px"></div>
<div class="t tt" id="c4_g1" style="left:173.5px;top:724.4px;letter-spacing:0.10px">Absentee owner</div>
<div class="abs tag" style="left:285.0px;top:716.4px;width:114.6px"></div>
<div class="t tt" id="c4_g2" style="left:294.5px;top:724.4px;letter-spacing:0.25px">Unknown equity</div>
<div class="abs" style="left:0;top:730px;width:544px;height:53px;background:#fff;border-top:1px solid #e5e7eb"></div>
<svg class="abs" style="left:31px;top:752px" width="9" height="14" viewBox="0 0 9 14" fill="none" stroke="#c4b5fd" stroke-width="1.300" stroke-linecap="round" stroke-linejoin="round"><path d="M7.500 1L1.500 7l6 6"/></svg>
<svg class="abs" style="left:510px;top:752px" width="9" height="14" viewBox="0 0 9 14" fill="none" stroke="#7c3aed" stroke-width="1.500" stroke-linecap="round" stroke-linejoin="round"><path d="M1.500 1l6 6-6 6"/></svg>
<div class="t" id="p_page" style="left:206.0px;top:750px;font-size:17.500px;color:#374151;letter-spacing:-0.59px">Page</div>
<div class="abs" style="left:253px;top:769px;width:53px;height:1px;background:#374151"></div>
<div class="t" style="left:253px;top:751px;width:53px;text-align:center;font-size:15px;color:#374151">1</div>
<div class="t" id="p_of" style="left:314.0px;top:750px;font-size:18px;color:#374151;letter-spacing:0.12px">of 4</div>
<div class="abs" style="left:536px;top:66px;width:8px;height:664px;background:#fafafa"></div>
<svg class="abs" style="left:535px;top:65px" width="9" height="8" viewBox="0 0 9 8"><path d="M1 7l6-6 2 2v4z" fill="#7a7a7a"/></svg>
<div class="abs" style="left:538px;top:78px;width:8px;height:50px;border-radius:4px 0 0 4px;background:#8b8b8b"></div>
<svg class="abs" style="left:535px;top:720px" width="9" height="8" viewBox="0 0 9 8"><path d="M1 1l6 6 2-2V1z" fill="#7a7a7a"/></svg><!--P1-->
</div>

<!-- MODAL -->
<div id="modal" class="abs">
<!--M0--><div class="abs" style="left:0;top:3px;width:946px;height:0"><div class="t" id="m_search" style="left:19.0px;top:11.0px;font-size:18px;color:#4b5563;letter-spacing:-0.84px">Search</div>
<div class="t" id="m_applied" style="left:110.1px;top:11.0px;font-size:18px;color:#111827;letter-spacing:0.02px">Applied filters</div>
<div class="t" id="m_six" style="left:227.5px;top:11.0px;font-size:18px;color:#111827;letter-spacing:-0.67px">(6)</div>
<div class="abs" style="left:0;top:40px;width:946px;height:4px;background:#e5e7eb"></div>
<div class="abs" style="left:91px;top:41px;width:176px;height:3px;background:#6320ee"></div>
<div class="box" style="left:481px;top:1px;width:297px;height:35px"></div>
<div class="t" id="m_preset" style="left:498.5px;top:11px;font-size:15px;color:#4b5563;letter-spacing:0.11px">Load an Invelo preset</div>
<svg class="abs" style="left:651px;top:9px" width="18" height="18" viewBox="0 0 18 18" fill="none" stroke="#4b5563" stroke-width="1.400"><circle cx="9" cy="9" r="7.800"/><path d="M9 8v4.800" stroke-linecap="round"/><circle cx="9" cy="5.300" r=".9" fill="#4b5563" stroke="none"/></svg>
<svg class="abs" style="left:743px;top:14px" width="14" height="8" viewBox="0 0 14 8" fill="none" stroke="#374151" stroke-width="1.500" stroke-linecap="round" stroke-linejoin="round"><path d="M1 1l6 6 6-6"/></svg>
<div class="box" style="left:787px;top:1px;width:141px;height:35px"></div>
<svg class="abs" style="left:807px;top:11px" width="13" height="15" viewBox="0 0 13 15" fill="none" stroke="#6d28d9" stroke-width="1.400" stroke-linejoin="round"><path d="M1.500 1h10v13l-5-3.500-5 3.500z"/></svg>
<div class="t" id="m_saved" style="left:826.5px;top:11px;font-size:15px;color:#1f2937;letter-spacing:0.01px">Saved filters</div>

<div class="t mh" id="m_h1" style="left:16.5px;top:74px;letter-spacing:0.60px">Property</div>
<div class="t ml" id="m_l1" style="left:16.5px;top:111px;letter-spacing:-0.03px">Living area (sf)</div>
<div class="t mv" id="m_v1" style="left:278.5px;top:111px;letter-spacing:0.30px">0 to 100</div>
<div class="mdiv abs" style="top:136px"></div>
<div class="t mh" id="m_h2" style="left:16.5px;top:158px;letter-spacing:0.46px">Ownership</div>
<div class="t ml" id="m_l2" style="left:16.5px;top:196px;letter-spacing:0.12px">Tax delinquent year</div>
<div class="t mv" id="m_v2" style="left:278.5px;top:196px;letter-spacing:0.20px">2015 to 2024</div>
<div class="mdiv abs" style="top:220px"></div>
<div class="t ml" id="m_l3" style="left:16.5px;top:232px;letter-spacing:-0.09px">Last sale price</div>
<div class="t mv" id="m_v3" style="left:278.5px;top:232px;letter-spacing:0.10px">$0 to $20,000</div>
<div class="mdiv abs" style="top:257px"></div>
<div class="t ml" id="m_l4" style="left:16.5px;top:268px;letter-spacing:0.05px">Years of ownership</div>
<div class="t mv" id="m_v4" style="left:278.5px;top:268px;letter-spacing:0.35px">0 to 10</div>
<div class="mdiv abs" style="top:293px"></div>
<div class="t mh" id="m_h3" style="left:16.5px;top:315px;letter-spacing:0.45px">Valuation &amp; Equity</div>
<div class="t ml" id="m_l5" style="left:16.5px;top:353px;letter-spacing:0.04px">Assessed improvement %</div>
<div class="t mv" id="m_v5" style="left:278.5px;top:353px;letter-spacing:0.36px">0 to 5</div>
<div class="mdiv abs" style="top:377px"></div>
<div class="t mh" id="m_h4" style="left:16.5px;top:400px;letter-spacing:0.46px">Others</div>
<div class="t ml" id="m_l6" style="left:16.5px;top:437px;letter-spacing:0.25px">Indicators</div>
<div class="t mv" id="m_v6" style="left:278.5px;top:437px;letter-spacing:0.09px">Absentee owners</div>
<div class="mdiv abs" style="top:462px"></div>
<div class="mdiv abs" style="top:481px"></div>
<svg class="mx abs" style="top:112px" width="11" height="11" viewBox="0 0 11 11"><path d="M1 1l9 9M10 1L1 10"/></svg>
<svg class="mx abs" style="top:197px" width="11" height="11" viewBox="0 0 11 11"><path d="M1 1l9 9M10 1L1 10"/></svg>
<svg class="mx abs" style="top:233px" width="11" height="11" viewBox="0 0 11 11"><path d="M1 1l9 9M10 1L1 10"/></svg>
<svg class="mx abs" style="top:269px" width="11" height="11" viewBox="0 0 11 11"><path d="M1 1l9 9M10 1L1 10"/></svg>
<svg class="mx abs" style="top:354px" width="11" height="11" viewBox="0 0 11 11"><path d="M1 1l9 9M10 1L1 10"/></svg>
<svg class="mx abs" style="top:438px" width="11" height="11" viewBox="0 0 11 11"><path d="M1 1l9 9M10 1L1 10"/></svg>

<div class="box" style="left:17px;top:499px;width:75px;height:42px"></div>
<div class="t sb" id="m_close" style="left:35.3px;top:513px;font-size:15px;font-weight:400;color:#1f2937;letter-spacing:-0.07px">Close</div>
<div class="t" id="m_note" style="left:143.5px;top:513px;font-size:15px;color:#374151;letter-spacing:0.16px">* Leave min or max fields blank to include unknown values.</div>
<svg class="abs" style="left:551px;top:511px" width="18" height="18" viewBox="0 0 18 18" fill="none" stroke="#4b5563" stroke-width="1.400"><circle cx="9" cy="9" r="7.800"/><path d="M9 8v4.800" stroke-linecap="round"/><circle cx="9" cy="5.300" r=".9" fill="#4b5563" stroke="none"/></svg>
<div class="box" style="left:723px;top:499px;width:121px;height:42px"></div>
<div class="t sb" id="m_save" style="left:740.8px;top:513px;font-size:15px;font-weight:400;color:#1f2937;letter-spacing:-0.11px">Save as new</div>
<div class="box" style="left:853px;top:499px;width:75px;height:42px"></div>
<div class="t sb" id="m_reset" style="left:871.2px;top:513px;font-size:15px;font-weight:400;color:#1f2937;letter-spacing:-0.18px">Reset</div>
<svg class="abs" style="left:938px;top:48px" width="7" height="7" viewBox="0 0 7 7"><path d="M0 7L4.500 0 7 3.500V7z" fill="#6b6b6b"/></svg>
<svg class="abs" style="left:938px;top:470px" width="6" height="5" viewBox="0 0 6 5"><path d="M0 0l4 5 2-2.500V0z" fill="#6b6b6b"/></svg>
</div><!--M1-->
</div>

<!--O0--><div class="red" style="left:486px;top:64px;width:128px;height:46px;border-width:5px"></div>
<div class="red" style="left:1272px;top:61px;width:133px;height:60px;border-width:5px"></div>
<div class="red" style="left:542px;top:116px;width:161px;height:45px;border-width:5px"></div>
<div class="red" style="left:439px;top:167px;width:943px;height:446px;border-width:5px"></div>
<!--O1-->
</body>
</html>
